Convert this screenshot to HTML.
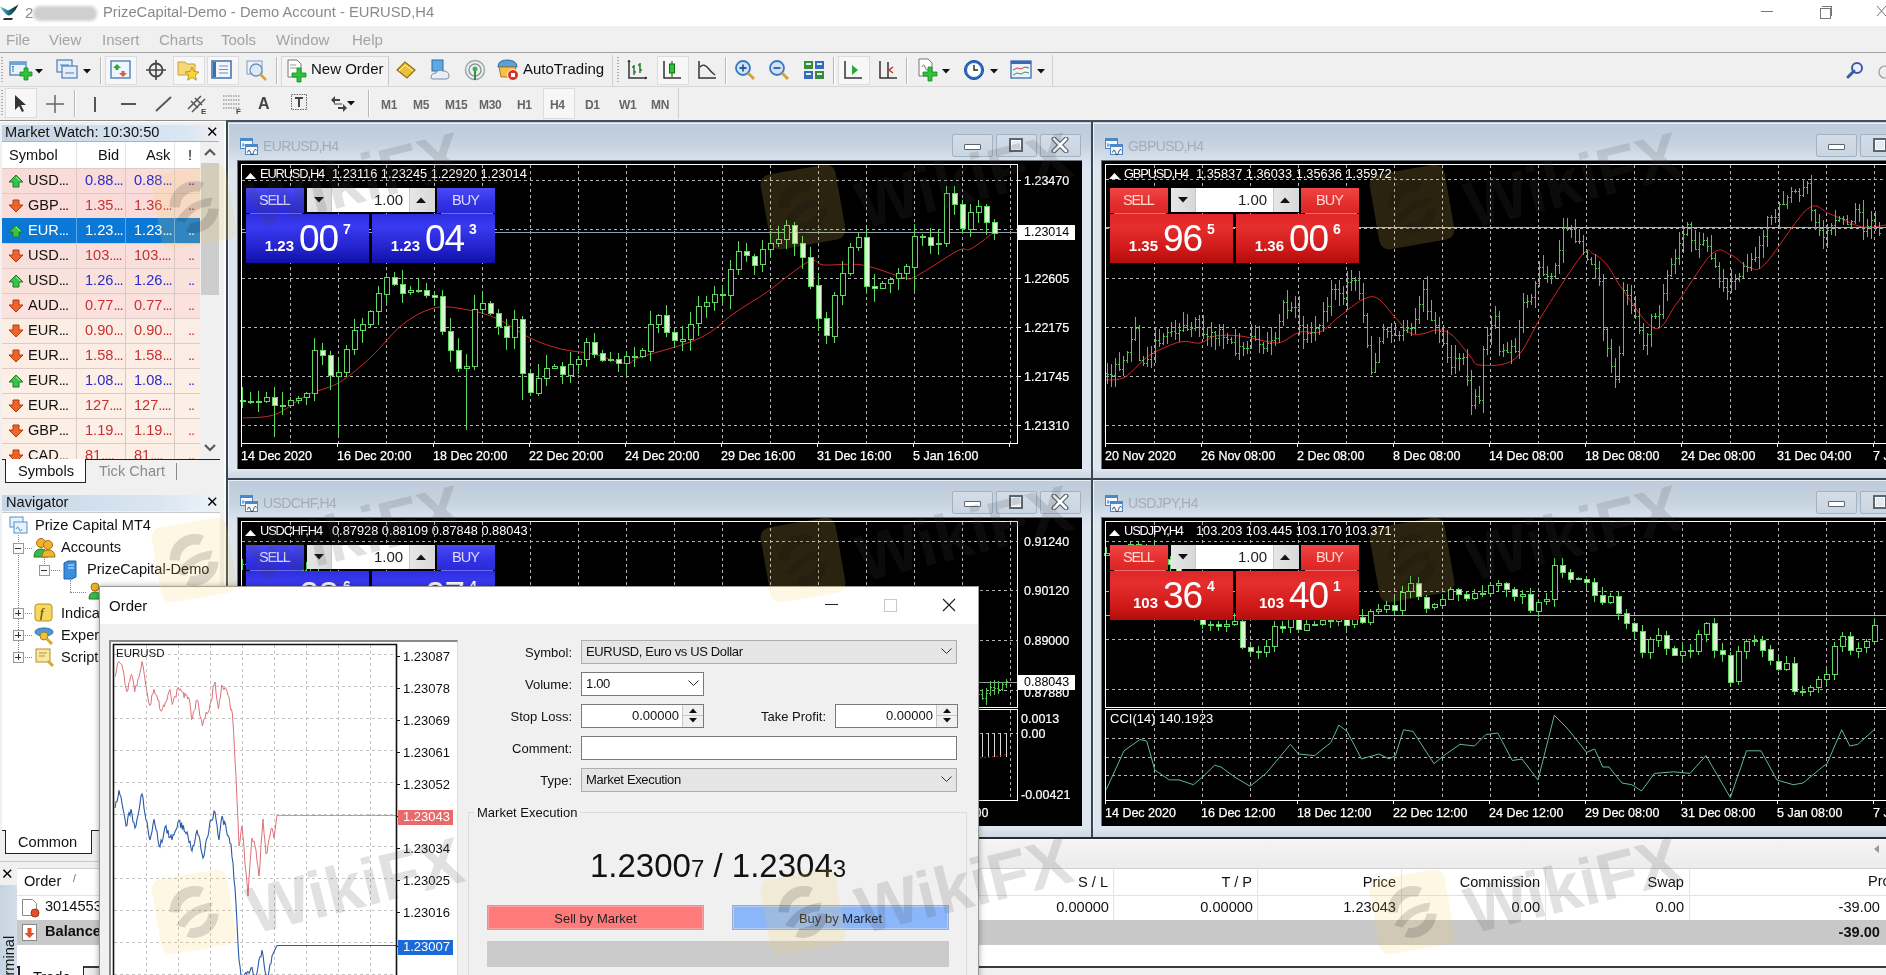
<!DOCTYPE html>
<html><head><meta charset="utf-8"><title>MT4</title>
<style>
html,body{margin:0;padding:0}
body{width:1886px;height:975px;overflow:hidden;position:relative;background:#f0f0f0;font-family:"Liberation Sans",sans-serif}
.t{position:absolute;white-space:nowrap;line-height:1.15;font-family:"Liberation Sans",sans-serif}
svg{overflow:hidden}
</style></head><body>
<div style="position:absolute;left:0;top:0;width:1886px;height:26px;background:#fff"></div>
<svg style="position:absolute;left:0px;top:2px" width="20" height="20" viewBox="0 0 20 20">
<defs><linearGradient id="bird" x1="0" x2="1"><stop offset="0" stop-color="#5fc8e0"/><stop offset="0.45" stop-color="#1f6f80"/><stop offset="1" stop-color="#0a1a20"/></linearGradient></defs>
<path d="M0 4.5 Q4 6 8 8.5 Q13 6 18.5 2.5 Q16 8 12 12 Q10 13.5 8 13.5 Q4 11 0 4.5 Z" fill="url(#bird)"/>
<path d="M4 16 h9 l-1 2 h-9 z" fill="#333"/></svg>
<div class="t" style="left:25px;top:4px;font-size:15px;color:#8a8a8a">2</div>
<div style="position:absolute;left:33px;top:6px;width:64px;height:15px;border-radius:7px;background:#cfcfcf;filter:blur(1.5px)"></div>
<div class="t" style="left:103px;top:4px;font-size:14.75px;color:#8a8a8a">PrizeCapital-Demo - Demo Account - EURUSD,H4</div>
<div style="position:absolute;left:1761px;top:11px;width:12px;height:1px;background:#777"></div>
<div style="position:absolute;left:1820px;top:8px;width:9px;height:9px;border:1px solid #777"></div>
<div style="position:absolute;left:1822px;top:6px;width:9px;height:9px;border-top:1px solid #777;border-right:1px solid #777"></div>
<svg style="position:absolute;left:1876px;top:5px" width="10" height="14"><path d="M1 1 L10 11 M1 11 L10 1" stroke="#777" stroke-width="1"/></svg>
<div style="position:absolute;left:0;top:26px;width:1886px;height:26px;background:#f0f0f0"></div>
<div class="t" style="left:6px;top:31px;font-size:15px;color:#a3a3a3">File</div>
<div class="t" style="left:49px;top:31px;font-size:15px;color:#a3a3a3">View</div>
<div class="t" style="left:102px;top:31px;font-size:15px;color:#a3a3a3">Insert</div>
<div class="t" style="left:159px;top:31px;font-size:15px;color:#a3a3a3">Charts</div>
<div class="t" style="left:221px;top:31px;font-size:15px;color:#a3a3a3">Tools</div>
<div class="t" style="left:276px;top:31px;font-size:15px;color:#a3a3a3">Window</div>
<div class="t" style="left:352px;top:31px;font-size:15px;color:#a3a3a3">Help</div>
<div style="position:absolute;left:0;top:52px;width:1886px;height:1px;background:#a0a0a0"></div>
<div style="position:absolute;left:0;top:53px;width:1886px;height:68px;background:#f0f0f0"></div>
<div style="position:absolute;left:0;top:86px;width:1886px;height:1px;background:#d6d6d6"></div>
<div style="position:absolute;left:226px;top:120px;width:1660px;height:3px;background:#4a4f55"></div>
<div style="position:absolute;left:0;top:120px;width:226px;height:1px;background:#8e8e8e"></div>
<div style="position:absolute;left:0;top:121px;width:226px;height:1px;background:#fdfdfd"></div>
<div style="position:absolute;left:1px;top:57px;width:2px;height:27px;background:repeating-linear-gradient(#a8a8a8 0 1px,transparent 1px 3px)"></div>
<svg style="position:absolute;left:9px;top:60px" width="24" height="22" viewBox="0 0 24 22"><rect x="1" y="2" width="16" height="13" fill="#e8f2fb" stroke="#3f79b5" stroke-width="1.2"/><rect x="1" y="2" width="16" height="3" fill="#6fa3d8"/><path d="M4 12 v-6 M3 7 l1-1 1 1" stroke="#3f79b5" fill="none"/><path d="M15 8 h4 v4 h4 v4 h-4 v4 h-4 v-4 h-4 v-4 h4 z" fill="#2cc43a" stroke="#138a1c" stroke-width="0.8"/></svg>
<svg style="position:absolute;left:35px;top:69px" width="8" height="5" viewBox="0 0 8 5"><path d="M0 0 L8 0 L4 4.5 Z" fill="#111"/></svg>
<svg style="position:absolute;left:56px;top:59px" width="24" height="22" viewBox="0 0 24 22"><rect x="1" y="1" width="15" height="12" fill="#e6eef8" stroke="#4a7fb8" stroke-width="1.2"/><rect x="6" y="7" width="15" height="12" fill="#e6eef8" stroke="#4a7fb8" stroke-width="1.2"/><path d="M4 6 h9 M9 14 h9" stroke="#4a7fb8"/></svg>
<svg style="position:absolute;left:83px;top:69px" width="8" height="5" viewBox="0 0 8 5"><path d="M0 0 L8 0 L4 4.5 Z" fill="#111"/></svg>
<div style="position:absolute;left:100px;top:57px;width:1px;height:27px;background:#b8b8b8;box-shadow:1px 0 0 #fff"></div>
<div style="position:absolute;left:105px;top:56px;width:30px;height:27px;border:1px solid #dcdcdc;background:#f7f7f7"></div>
<svg style="position:absolute;left:110px;top:60px" width="22" height="20" viewBox="0 0 22 20"><rect x="1" y="1" width="19" height="17" fill="#eef5fc" stroke="#3f79b5" stroke-width="1.3"/><path d="M7 4 l4 4 h-2.5 v2 h-3 v-2 h-2.5 z" fill="#2aa83a"/><path d="M13 17 l4-4 h-2.5 v-2 h-3 v2 h-2.5 z" fill="#e8553a"/></svg>
<svg style="position:absolute;left:145px;top:59px" width="22" height="22" viewBox="0 0 22 22"><circle cx="11" cy="11" r="6.5" fill="none" stroke="#444" stroke-width="1.8"/><path d="M11 1 v20 M1 11 h20" stroke="#444" stroke-width="1.6"/></svg>
<div style="position:absolute;left:173px;top:56px;width:30px;height:27px;border:1px solid #dcdcdc;background:#f7f7f7"></div>
<svg style="position:absolute;left:177px;top:59px" width="24" height="22" viewBox="0 0 24 22"><path d="M1 3 h7 l2 2 h8 v11 h-17 z" fill="#f5d77a" stroke="#c9a23a"/><path d="M15 8 l2 4.5 5 .5 -3.8 3.2 1.2 5 -4.4-2.7 -4.4 2.7 1.2-5 -3.8-3.2 5-.5 z" fill="#f7d63a" stroke="#b08a10" stroke-width="0.8"/></svg>
<div style="position:absolute;left:207px;top:56px;width:30px;height:27px;border:1px solid #dcdcdc;background:#f7f7f7"></div>
<svg style="position:absolute;left:211px;top:60px" width="22" height="20" viewBox="0 0 22 20"><rect x="1" y="1" width="19" height="17" fill="#f2f6fb" stroke="#3b6fb0" stroke-width="1.5"/><rect x="2" y="2" width="3" height="15" fill="#3b6fb0"/><path d="M8 6 h9 M8 9.5 h9 M8 13 h9" stroke="#6b8fbf"/></svg>
<svg style="position:absolute;left:246px;top:59px" width="24" height="24" viewBox="0 0 24 24"><rect x="1" y="2" width="15" height="13" fill="#eef3fa" stroke="#7a9cc6"/><circle cx="10" cy="11" r="6" fill="#dfe9f5" stroke="#6e8fbf" stroke-width="1.3"/><path d="M14 15 l6 6" stroke="#d6a23a" stroke-width="2.5"/></svg>
<div style="position:absolute;left:276px;top:57px;width:1px;height:27px;background:#b8b8b8;box-shadow:1px 0 0 #fff"></div>
<div style="position:absolute;left:281px;top:56px;width:106px;height:29px;border:1px solid #d8d8d8;border-right-color:#c8c8c8;background:#f3f3f3"></div>
<svg style="position:absolute;left:286px;top:59px" width="24" height="24" viewBox="0 0 24 24"><path d="M2 1 h9 l4 4 v13 h-13 z" fill="#fff" stroke="#777"/><path d="M4 6 h6 M4 9 h8" stroke="#999"/><path d="M11 9 h4 v5 h5 v4 h-5 v5 h-4 v-5 h-5 v-4 h5 z" fill="#2cc43a" stroke="#138a1c" stroke-width="0.8"/></svg>
<div class="t" style="left:311px;top:60px;font-size:15px;color:#111">New Order</div>
<svg style="position:absolute;left:395px;top:60px" width="22" height="20" viewBox="0 0 22 20"><path d="M2 10 l8-8 10 8 -8 8 z" fill="#e8c040" stroke="#9a6a10" stroke-width="1.2"/><path d="M4 11 l6-6 8 6" fill="none" stroke="#fff2a0"/></svg>
<svg style="position:absolute;left:429px;top:59px" width="22" height="22" viewBox="0 0 22 22"><rect x="3" y="1" width="11" height="11" fill="#5fa8e0" stroke="#2c6aa8"/><path d="M2 19 q0-5 5-5 q2-4 7-2 q6 0 6 5 q0 3-3 3 h-13 q-2 0-2-1z" fill="#e8eef6" stroke="#7a8ea8"/></svg>
<svg style="position:absolute;left:464px;top:59px" width="22" height="22" viewBox="0 0 22 22"><circle cx="11" cy="11" r="9.5" fill="none" stroke="#9aa" stroke-width="1.5"/><circle cx="11" cy="11" r="6" fill="none" stroke="#8a9a9a" stroke-width="1.5"/><circle cx="11" cy="10" r="2.5" fill="#4a6"/><path d="M11 12 v9" stroke="#3a8a3a" stroke-width="2"/></svg>
<svg style="position:absolute;left:496px;top:58px" width="24" height="24" viewBox="0 0 24 24"><path d="M2 9 q0-7 9-7 q10 0 10 7 z" fill="#5aa0d8" stroke="#2c6aa8"/><path d="M3 9 h17 l-2 10 h-13 z" fill="#f3c04a" stroke="#b07a10"/><circle cx="17" cy="17" r="5.5" fill="#d9302a" stroke="#fff" stroke-width="1"/><rect x="15" y="15" width="4" height="4" fill="#fff"/></svg>
<div class="t" style="left:523px;top:60px;font-size:15px;color:#111">AutoTrading</div>
<div style="position:absolute;left:612px;top:55px;width:1px;height:31px;background:#d0d0d0"></div>
<div style="position:absolute;left:617px;top:57px;width:2px;height:27px;background:repeating-linear-gradient(#a8a8a8 0 1px,transparent 1px 3px)"></div>
<svg style="position:absolute;left:626px;top:59px" width="22" height="22" viewBox="0 0 22 22"><path d="M3 2 v17 h17" fill="none" stroke="#333" stroke-width="1.5"/><path d="M8 6 v10 M6 8 h2 M8 13 h2 M14 4 v10 M12 6 h2 M14 11 h2" stroke="#2a7a2a" stroke-width="1.5"/><path d="M2 3 l1-2 1 2 M19 18 l2 1 -2 1" stroke="#333"/></svg>
<div style="position:absolute;left:657px;top:56px;width:30px;height:27px;border:1px solid #dcdcdc;background:#f7f7f7"></div>
<svg style="position:absolute;left:661px;top:59px" width="22" height="22" viewBox="0 0 22 22"><path d="M3 2 v17 h17" fill="none" stroke="#333" stroke-width="1.5"/><path d="M11 2 v16" stroke="#1a6a1a" stroke-width="1.2"/><rect x="8.5" y="5" width="5" height="9" fill="#2cc43a" stroke="#1a6a1a"/></svg>
<svg style="position:absolute;left:696px;top:59px" width="22" height="22" viewBox="0 0 22 22"><path d="M3 2 v17 h17" fill="none" stroke="#333" stroke-width="1.5"/><path d="M4 8 q4-4 8 1 q3 4 7 7" fill="none" stroke="#333" stroke-width="1.3"/></svg>
<div style="position:absolute;left:725px;top:57px;width:1px;height:27px;background:#b8b8b8;box-shadow:1px 0 0 #fff"></div>
<svg style="position:absolute;left:734px;top:59px" width="22" height="22" viewBox="0 0 22 22"><circle cx="9" cy="9" r="7" fill="#cfe4f8" stroke="#3a78c0" stroke-width="1.8"/><path d="M5.5 9 h7 M9 5.5 v7" stroke="#2a5aa0" stroke-width="1.8"/><path d="M14 14 l6 6" stroke="#d6a23a" stroke-width="3"/></svg>
<svg style="position:absolute;left:768px;top:59px" width="22" height="22" viewBox="0 0 22 22"><circle cx="9" cy="9" r="7" fill="#cfe4f8" stroke="#3a78c0" stroke-width="1.8"/><path d="M5.5 9 h7" stroke="#2a5aa0" stroke-width="1.8"/><path d="M14 14 l6 6" stroke="#d6a23a" stroke-width="3"/></svg>
<svg style="position:absolute;left:803px;top:60px" width="22" height="20" viewBox="0 0 22 20"><rect x="1" y="1" width="9" height="8" fill="#3c8a3c"/><rect x="12" y="1" width="9" height="8" fill="#3a6ac0"/><rect x="1" y="11" width="9" height="8" fill="#3a6ac0"/><rect x="12" y="11" width="9" height="8" fill="#3c8a3c"/><path d="M3 4 h5 M14 14 h5 M3 14 h5 M14 4 h5" stroke="#cfe" stroke-width="2"/></svg>
<div style="position:absolute;left:833px;top:57px;width:1px;height:27px;background:#b8b8b8;box-shadow:1px 0 0 #fff"></div>
<div style="position:absolute;left:838px;top:56px;width:30px;height:27px;border:1px solid #dcdcdc;background:#f7f7f7"></div>
<svg style="position:absolute;left:842px;top:59px" width="22" height="22" viewBox="0 0 22 22"><path d="M3 2 v17 h17" fill="none" stroke="#333" stroke-width="1.5"/><path d="M10 6 l6 5 -6 5 z" fill="#2aa83a"/></svg>
<svg style="position:absolute;left:877px;top:59px" width="22" height="22" viewBox="0 0 22 22"><path d="M3 2 v17 h17 M11 3 v16" fill="none" stroke="#333" stroke-width="1.5"/><path d="M16 8 l-4 3 4 3" fill="none" stroke="#d03030" stroke-width="1.5"/></svg>
<div style="position:absolute;left:906px;top:57px;width:1px;height:27px;background:#b8b8b8;box-shadow:1px 0 0 #fff"></div>
<svg style="position:absolute;left:917px;top:58px" width="24" height="24" viewBox="0 0 24 24"><path d="M2 1 h9 l4 4 v13 h-13 z" fill="#fff" stroke="#777"/><path d="M5 9 q2-4 3 0 t3 3" fill="none" stroke="#777"/><path d="M11 9 h4 v5 h5 v4 h-5 v5 h-4 v-5 h-5 v-4 h5 z" fill="#2cc43a" stroke="#138a1c" stroke-width="0.8"/></svg>
<svg style="position:absolute;left:942px;top:69px" width="8" height="5" viewBox="0 0 8 5"><path d="M0 0 L8 0 L4 4.5 Z" fill="#111"/></svg>
<svg style="position:absolute;left:963px;top:59px" width="22" height="22" viewBox="0 0 22 22"><circle cx="11" cy="11" r="9.5" fill="#2a6ac8" stroke="#1a4a98"/><circle cx="11" cy="11" r="7" fill="#fff"/><path d="M11 6 v5 h4" stroke="#222" stroke-width="1.4" fill="none"/></svg>
<svg style="position:absolute;left:990px;top:69px" width="8" height="5" viewBox="0 0 8 5"><path d="M0 0 L8 0 L4 4.5 Z" fill="#111"/></svg>
<svg style="position:absolute;left:1010px;top:60px" width="22" height="20" viewBox="0 0 22 20"><rect x="1" y="1" width="20" height="17" fill="#eaf2fa" stroke="#3a6ab0" stroke-width="1.3"/><rect x="1" y="1" width="20" height="3" fill="#3a6ab0"/><path d="M3 10 l4-2 4 1 4-2 4 1" stroke="#d04030" fill="none"/><path d="M3 15 l4-2 4 1 4-2 4 1" stroke="#3a9a4a" fill="none"/></svg>
<svg style="position:absolute;left:1037px;top:69px" width="8" height="5" viewBox="0 0 8 5"><path d="M0 0 L8 0 L4 4.5 Z" fill="#111"/></svg>
<div style="position:absolute;left:1052px;top:55px;width:1px;height:31px;background:#d0d0d0"></div>
<svg style="position:absolute;left:1845px;top:61px" width="20" height="20" viewBox="0 0 20 20"><circle cx="12" cy="7" r="5" fill="#eef" stroke="#3a5aa8" stroke-width="2"/><path d="M9 10 l-6 6" stroke="#3a5aa8" stroke-width="3" stroke-linecap="round"/></svg>
<svg style="position:absolute;left:1876px;top:64px" width="10" height="18" viewBox="0 0 10 18"><circle cx="9" cy="8" r="6" fill="#eee" stroke="#999" stroke-width="1.2"/></svg>
<div style="position:absolute;left:1px;top:90px;width:2px;height:27px;background:repeating-linear-gradient(#a8a8a8 0 1px,transparent 1px 3px)"></div>
<div style="position:absolute;left:5px;top:88px;width:30px;height:28px;border:1px solid #dcdcdc;background:#f7f7f7"></div>
<svg style="position:absolute;left:12px;top:94px" width="16" height="20" viewBox="0 0 16 20"><path d="M3 1 l0 15 4-4 3 6 2-1 -3-6 5 0 z" fill="#333"/></svg>
<svg style="position:absolute;left:45px;top:94px" width="20" height="20" viewBox="0 0 20 20"><path d="M10 1 v18 M1 10 h18" stroke="#666" stroke-width="1.5"/></svg>
<div style="position:absolute;left:74px;top:90px;width:1px;height:27px;background:#b8b8b8;box-shadow:1px 0 0 #fff"></div>
<div style="position:absolute;left:94px;top:97px;width:2px;height:15px;background:#555"></div>
<div style="position:absolute;left:121px;top:103px;width:15px;height:2px;background:#555"></div>
<svg style="position:absolute;left:154px;top:95px" width="20" height="18" viewBox="0 0 20 18"><path d="M2 16 L17 2" stroke="#555" stroke-width="1.8"/></svg>
<svg style="position:absolute;left:187px;top:93px" width="22" height="22" viewBox="0 0 22 22"><path d="M1 16 L14 3 M5 19 L18 6 M4 8 l7 7 M8 5 l7 7" stroke="#555" stroke-width="1.5"/><text x="14" y="21" font-size="8" font-family="Liberation Sans" font-weight="bold" fill="#444">E</text></svg>
<svg style="position:absolute;left:222px;top:93px" width="22" height="22" viewBox="0 0 22 22"><path d="M1 3 h17 M1 7 h17 M1 11 h17 M1 15 h17" stroke="#777" stroke-width="1.2" stroke-dasharray="1.5 1"/><text x="14" y="21" font-size="8" font-family="Liberation Sans" font-weight="bold" fill="#444">F</text></svg>
<div class="t" style="left:258px;top:95px;font-size:16px;font-weight:bold;color:#444">A</div>
<svg style="position:absolute;left:290px;top:93px" width="20" height="20" viewBox="0 0 20 20"><rect x="1.5" y="1.5" width="15" height="15" fill="none" stroke="#666" stroke-dasharray="1.5 1"/><path d="M5 5 h8 M9 5 v9" stroke="#444" stroke-width="2"/></svg>
<svg style="position:absolute;left:329px;top:94px" width="20" height="20" viewBox="0 0 20 20"><path d="M2 6 l4-4 v3 h5 v2 h-5 v3 z" fill="#444"/><path d="M18 14 l-4 4 v-3 h-5 v-2 h5 v-3 z" fill="#444"/><path d="M5 10 l8 0" stroke="#444"/></svg>
<svg style="position:absolute;left:347px;top:101px" width="8" height="5" viewBox="0 0 8 5"><path d="M0 0 L8 0 L4 4.5 Z" fill="#111"/></svg>
<div style="position:absolute;left:368px;top:90px;width:1px;height:27px;background:#b8b8b8;box-shadow:1px 0 0 #fff"></div>
<div class="t" style="left:381px;top:99px;font-size:12px;color:#666;font-weight:bold;letter-spacing:-0.3px">M1</div>
<div class="t" style="left:413px;top:99px;font-size:12px;color:#666;font-weight:bold;letter-spacing:-0.3px">M5</div>
<div class="t" style="left:445px;top:99px;font-size:12px;color:#666;font-weight:bold;letter-spacing:-0.3px">M15</div>
<div class="t" style="left:479px;top:99px;font-size:12px;color:#666;font-weight:bold;letter-spacing:-0.3px">M30</div>
<div class="t" style="left:517px;top:99px;font-size:12px;color:#666;font-weight:bold;letter-spacing:-0.3px">H1</div>
<div style="position:absolute;left:543px;top:88px;width:30px;height:29px;border:1px solid #dcdcdc;background:#f7f7f7"></div>
<div class="t" style="left:550px;top:99px;font-size:12px;color:#666;font-weight:bold;letter-spacing:-0.3px">H4</div>
<div class="t" style="left:585px;top:99px;font-size:12px;color:#666;font-weight:bold;letter-spacing:-0.3px">D1</div>
<div class="t" style="left:619px;top:99px;font-size:12px;color:#666;font-weight:bold;letter-spacing:-0.3px">W1</div>
<div class="t" style="left:651px;top:99px;font-size:12px;color:#666;font-weight:bold;letter-spacing:-0.3px">MN</div>
<div style="position:absolute;left:678px;top:88px;width:1px;height:31px;background:#d0d0d0"></div>
<div style="position:absolute;left:226px;top:122px;width:1660px;height:716px;background:#c5d1de"></div>
<div style="position:absolute;left:228px;top:123px;width:863px;height:355px;background:linear-gradient(#bdcbdb 0px,#c5d2df 20px,#cfdbe7 30px,#d8e2ec 37px,#dde6ef 45px,#dde6ef);border-top:1px solid #e8eef4;border-left:1px solid #eef3f7;box-sizing:border-box"></div>
<div style="position:absolute;left:228px;top:468px;width:863px;height:10px;background:linear-gradient(#e0e8f0,#cdd8e4)"></div>
<svg style="position:absolute;left:240px;top:138px" width="19" height="18"><rect x="0.5" y="0.5" width="12" height="10" fill="#f4f9ff" stroke="#4f86c8"/><rect x="0.5" y="0.5" width="12" height="2.5" fill="#4f86c8"/><rect x="5.5" y="6.5" width="12" height="10" fill="#f4f9ff" stroke="#4f86c8"/><rect x="5.5" y="6.5" width="12" height="2.5" fill="#4f86c8"/><path d="M7.5 14.5 q1.5-5 3 0 t3 0 t3 -2" fill="none" stroke="#333" stroke-width="0.9"/><path d="M2 7 h3 M3 5 v4" stroke="#4f86c8" stroke-width="0.9"/></svg>
<div class="t" style="left:263px;top:138px;font-size:14px;letter-spacing:-0.6px;color:#a4adb6">EURUSD,H4</div>
<div style="position:absolute;left:952px;top:134px;width:39px;height:21px;border:1px solid #a3b2c3;border-radius:2px;background:linear-gradient(#d3dde8,#c9d5e1)"></div>
<div style="position:absolute;left:964px;top:144px;width:15px;height:4px;background:#fff;border:1px solid #5a6570;border-radius:1px"></div>
<div style="position:absolute;left:996px;top:134px;width:39px;height:21px;border:1px solid #a3b2c3;border-radius:2px;background:linear-gradient(#d3dde8,#c9d5e1)"></div>
<div style="position:absolute;left:1009px;top:138px;width:10px;height:10px;border:2px solid #5a6570;background:#e4eaf0;box-shadow:inset 0 0 0 1px #fff"></div>
<div style="position:absolute;left:1040px;top:134px;width:39px;height:21px;border:1px solid #a3b2c3;border-radius:2px;background:linear-gradient(#d3dde8,#c9d5e1)"></div>
<svg style="position:absolute;left:1051px;top:137px" width="18" height="16"><path d="M3 2 L15 14 M15 2 L3 14" stroke="#5a6570" stroke-width="5" stroke-linecap="round"/><path d="M3 2 L15 14 M15 2 L3 14" stroke="#fff" stroke-width="2.6" stroke-linecap="round"/></svg>
<div style="position:absolute;left:237px;top:160px;width:845px;height:309px;background:#000;border-top:1px solid #6a737c;border-left:1px solid #6a737c;box-sizing:border-box"></div>
<svg style="position:absolute;left:238px;top:161px" width="843" height="307" viewBox="238 161 843 307"><line x1="290.5" y1="165" x2="290.5" y2="443" stroke="#b4b4b4" stroke-width="1" stroke-dasharray="3 3"/>
<line x1="338.5" y1="165" x2="338.5" y2="443" stroke="#b4b4b4" stroke-width="1" stroke-dasharray="3 3"/>
<line x1="386.5" y1="165" x2="386.5" y2="443" stroke="#b4b4b4" stroke-width="1" stroke-dasharray="3 3"/>
<line x1="434.5" y1="165" x2="434.5" y2="443" stroke="#b4b4b4" stroke-width="1" stroke-dasharray="3 3"/>
<line x1="482.5" y1="165" x2="482.5" y2="443" stroke="#b4b4b4" stroke-width="1" stroke-dasharray="3 3"/>
<line x1="530.5" y1="165" x2="530.5" y2="443" stroke="#b4b4b4" stroke-width="1" stroke-dasharray="3 3"/>
<line x1="578.5" y1="165" x2="578.5" y2="443" stroke="#b4b4b4" stroke-width="1" stroke-dasharray="3 3"/>
<line x1="626.5" y1="165" x2="626.5" y2="443" stroke="#b4b4b4" stroke-width="1" stroke-dasharray="3 3"/>
<line x1="674.5" y1="165" x2="674.5" y2="443" stroke="#b4b4b4" stroke-width="1" stroke-dasharray="3 3"/>
<line x1="722.5" y1="165" x2="722.5" y2="443" stroke="#b4b4b4" stroke-width="1" stroke-dasharray="3 3"/>
<line x1="770.5" y1="165" x2="770.5" y2="443" stroke="#b4b4b4" stroke-width="1" stroke-dasharray="3 3"/>
<line x1="818.5" y1="165" x2="818.5" y2="443" stroke="#b4b4b4" stroke-width="1" stroke-dasharray="3 3"/>
<line x1="866.5" y1="165" x2="866.5" y2="443" stroke="#b4b4b4" stroke-width="1" stroke-dasharray="3 3"/>
<line x1="914.5" y1="165" x2="914.5" y2="443" stroke="#b4b4b4" stroke-width="1" stroke-dasharray="3 3"/>
<line x1="962.5" y1="165" x2="962.5" y2="443" stroke="#b4b4b4" stroke-width="1" stroke-dasharray="3 3"/>
<line x1="1010.5" y1="165" x2="1010.5" y2="443" stroke="#b4b4b4" stroke-width="1" stroke-dasharray="3 3"/>
<line x1="242" y1="180.5" x2="1017" y2="180.5" stroke="#b4b4b4" stroke-width="1" stroke-dasharray="3 3"/>
<line x1="242" y1="229.5" x2="1017" y2="229.5" stroke="#b4b4b4" stroke-width="1" stroke-dasharray="3 3"/>
<line x1="242" y1="278.5" x2="1017" y2="278.5" stroke="#b4b4b4" stroke-width="1" stroke-dasharray="3 3"/>
<line x1="242" y1="327.5" x2="1017" y2="327.5" stroke="#b4b4b4" stroke-width="1" stroke-dasharray="3 3"/>
<line x1="242" y1="376.5" x2="1017" y2="376.5" stroke="#b4b4b4" stroke-width="1" stroke-dasharray="3 3"/>
<line x1="242" y1="425.5" x2="1017" y2="425.5" stroke="#b4b4b4" stroke-width="1" stroke-dasharray="3 3"/><line x1="242" y1="232.5" x2="1017" y2="232.5" stroke="#8ea0a8"/><path d="M243.0 418.0 C248.3 417.4 264.3 418.3 275.0 414.5 C285.7 410.7 296.3 400.3 307.0 395.0 C317.7 389.7 328.3 388.9 339.0 382.6 C349.7 376.3 360.5 366.6 371.0 357.0 C381.5 347.4 391.5 333.2 402.0 325.0 C412.5 316.8 423.3 310.6 434.0 308.0 C444.7 305.4 455.3 307.7 466.0 309.5 C476.7 311.3 487.3 314.2 498.0 319.0 C508.7 323.8 519.5 333.0 530.0 338.0 C540.5 343.0 550.5 346.3 561.0 349.0 C571.5 351.7 582.3 351.6 593.0 354.0 C603.7 356.4 617.0 363.0 625.0 363.5 C633.0 364.0 628.5 361.2 641.0 357.0 C653.5 352.8 684.3 345.4 700.0 338.0 C715.7 330.6 723.8 320.3 735.0 312.6 C746.2 304.9 754.8 300.5 767.0 292.0 C779.2 283.5 799.0 266.2 808.5 261.7 C818.0 257.2 815.0 264.4 824.0 265.0 C833.0 265.6 849.2 262.9 862.5 265.0 C875.8 267.1 895.0 275.8 904.0 277.6 C913.0 279.4 907.5 280.5 916.5 276.0 C925.5 271.5 949.0 255.1 958.0 250.6 C967.0 246.1 964.8 251.9 970.6 249.0 C976.4 246.1 989.3 235.7 993.0 233.0" fill="none" stroke="#d02828" stroke-width="1"/><line x1="242.5" y1="387" x2="242.5" y2="408" stroke="#5ed85e" stroke-width="1"/>
<rect x="240.5" y="400.5" width="5" height="1" fill="#d8f8d0" stroke="#5ed85e" stroke-width="1"/>
<line x1="250.5" y1="392" x2="250.5" y2="404" stroke="#5ed85e" stroke-width="1"/>
<rect x="248.5" y="401.5" width="5" height="1" fill="#000" stroke="#5ed85e" stroke-width="1"/>
<line x1="258.5" y1="391" x2="258.5" y2="412" stroke="#5ed85e" stroke-width="1"/>
<rect x="256.5" y="401.5" width="5" height="1" fill="#d8f8d0" stroke="#5ed85e" stroke-width="1"/>
<line x1="266.5" y1="392" x2="266.5" y2="403" stroke="#5ed85e" stroke-width="1"/>
<rect x="264.5" y="397.5" width="5" height="4" fill="#000" stroke="#5ed85e" stroke-width="1"/>
<line x1="274.5" y1="387" x2="274.5" y2="437" stroke="#5ed85e" stroke-width="1"/>
<rect x="272.5" y="397.5" width="5" height="8" fill="#d8f8d0" stroke="#5ed85e" stroke-width="1"/>
<line x1="282.5" y1="392" x2="282.5" y2="415" stroke="#5ed85e" stroke-width="1"/>
<rect x="280.5" y="405.5" width="5" height="1" fill="#d8f8d0" stroke="#5ed85e" stroke-width="1"/>
<line x1="290.5" y1="397" x2="290.5" y2="407" stroke="#5ed85e" stroke-width="1"/>
<rect x="288.5" y="400.5" width="5" height="5" fill="#000" stroke="#5ed85e" stroke-width="1"/>
<line x1="298.5" y1="396" x2="298.5" y2="404" stroke="#5ed85e" stroke-width="1"/>
<rect x="296.5" y="398.5" width="5" height="2" fill="#000" stroke="#5ed85e" stroke-width="1"/>
<line x1="306.5" y1="392" x2="306.5" y2="405" stroke="#5ed85e" stroke-width="1"/>
<rect x="304.5" y="393.5" width="5" height="4" fill="#000" stroke="#5ed85e" stroke-width="1"/>
<line x1="314.5" y1="338" x2="314.5" y2="401" stroke="#5ed85e" stroke-width="1"/>
<rect x="312.5" y="350.5" width="5" height="43" fill="#000" stroke="#5ed85e" stroke-width="1"/>
<line x1="322.5" y1="343" x2="322.5" y2="365" stroke="#5ed85e" stroke-width="1"/>
<rect x="320.5" y="350.5" width="5" height="5" fill="#d8f8d0" stroke="#5ed85e" stroke-width="1"/>
<line x1="330.5" y1="351" x2="330.5" y2="390" stroke="#5ed85e" stroke-width="1"/>
<rect x="328.5" y="355.5" width="5" height="20" fill="#d8f8d0" stroke="#5ed85e" stroke-width="1"/>
<line x1="338.5" y1="360" x2="338.5" y2="436" stroke="#5ed85e" stroke-width="1"/>
<rect x="336.5" y="372.5" width="5" height="4" fill="#000" stroke="#5ed85e" stroke-width="1"/>
<line x1="346.5" y1="345" x2="346.5" y2="377" stroke="#5ed85e" stroke-width="1"/>
<rect x="344.5" y="349.5" width="5" height="23" fill="#000" stroke="#5ed85e" stroke-width="1"/>
<line x1="354.5" y1="319" x2="354.5" y2="355" stroke="#5ed85e" stroke-width="1"/>
<rect x="352.5" y="330.5" width="5" height="19" fill="#000" stroke="#5ed85e" stroke-width="1"/>
<line x1="362.5" y1="318" x2="362.5" y2="343" stroke="#5ed85e" stroke-width="1"/>
<rect x="360.5" y="324.5" width="5" height="6" fill="#000" stroke="#5ed85e" stroke-width="1"/>
<line x1="370.5" y1="310" x2="370.5" y2="328" stroke="#5ed85e" stroke-width="1"/>
<rect x="368.5" y="311.5" width="5" height="13" fill="#000" stroke="#5ed85e" stroke-width="1"/>
<line x1="378.5" y1="286" x2="378.5" y2="325" stroke="#5ed85e" stroke-width="1"/>
<rect x="376.5" y="293.5" width="5" height="18" fill="#000" stroke="#5ed85e" stroke-width="1"/>
<line x1="386.5" y1="275" x2="386.5" y2="303" stroke="#5ed85e" stroke-width="1"/>
<rect x="384.5" y="277.5" width="5" height="17" fill="#000" stroke="#5ed85e" stroke-width="1"/>
<line x1="394.5" y1="272" x2="394.5" y2="286" stroke="#5ed85e" stroke-width="1"/>
<rect x="392.5" y="277.5" width="5" height="7" fill="#d8f8d0" stroke="#5ed85e" stroke-width="1"/>
<line x1="402.5" y1="270" x2="402.5" y2="303" stroke="#5ed85e" stroke-width="1"/>
<rect x="400.5" y="284.5" width="5" height="9" fill="#d8f8d0" stroke="#5ed85e" stroke-width="1"/>
<line x1="410.5" y1="286" x2="410.5" y2="295" stroke="#5ed85e" stroke-width="1"/>
<rect x="408.5" y="290.5" width="5" height="2" fill="#000" stroke="#5ed85e" stroke-width="1"/>
<line x1="418.5" y1="278" x2="418.5" y2="293" stroke="#5ed85e" stroke-width="1"/>
<rect x="416.5" y="290.5" width="5" height="1" fill="#000" stroke="#5ed85e" stroke-width="1"/>
<line x1="426.5" y1="283" x2="426.5" y2="298" stroke="#5ed85e" stroke-width="1"/>
<rect x="424.5" y="290.5" width="5" height="5" fill="#d8f8d0" stroke="#5ed85e" stroke-width="1"/>
<line x1="434.5" y1="292" x2="434.5" y2="306" stroke="#5ed85e" stroke-width="1"/>
<rect x="432.5" y="295.5" width="5" height="2" fill="#d8f8d0" stroke="#5ed85e" stroke-width="1"/>
<line x1="442.5" y1="290" x2="442.5" y2="335" stroke="#5ed85e" stroke-width="1"/>
<rect x="440.5" y="296.5" width="5" height="35" fill="#d8f8d0" stroke="#5ed85e" stroke-width="1"/>
<line x1="450.5" y1="318" x2="450.5" y2="362" stroke="#5ed85e" stroke-width="1"/>
<rect x="448.5" y="331.5" width="5" height="19" fill="#d8f8d0" stroke="#5ed85e" stroke-width="1"/>
<line x1="458.5" y1="338" x2="458.5" y2="372" stroke="#5ed85e" stroke-width="1"/>
<rect x="456.5" y="350.5" width="5" height="18" fill="#d8f8d0" stroke="#5ed85e" stroke-width="1"/>
<line x1="466.5" y1="354" x2="466.5" y2="430" stroke="#5ed85e" stroke-width="1"/>
<rect x="464.5" y="366.5" width="5" height="2" fill="#000" stroke="#5ed85e" stroke-width="1"/>
<line x1="474.5" y1="295" x2="474.5" y2="370" stroke="#5ed85e" stroke-width="1"/>
<rect x="472.5" y="309.5" width="5" height="57" fill="#000" stroke="#5ed85e" stroke-width="1"/>
<line x1="482.5" y1="292" x2="482.5" y2="314" stroke="#5ed85e" stroke-width="1"/>
<rect x="480.5" y="303.5" width="5" height="6" fill="#000" stroke="#5ed85e" stroke-width="1"/>
<line x1="490.5" y1="301" x2="490.5" y2="315" stroke="#5ed85e" stroke-width="1"/>
<rect x="488.5" y="303.5" width="5" height="10" fill="#d8f8d0" stroke="#5ed85e" stroke-width="1"/>
<line x1="498.5" y1="309" x2="498.5" y2="335" stroke="#5ed85e" stroke-width="1"/>
<rect x="496.5" y="313.5" width="5" height="13" fill="#d8f8d0" stroke="#5ed85e" stroke-width="1"/>
<line x1="506.5" y1="319" x2="506.5" y2="350" stroke="#5ed85e" stroke-width="1"/>
<rect x="504.5" y="326.5" width="5" height="11" fill="#d8f8d0" stroke="#5ed85e" stroke-width="1"/>
<line x1="514.5" y1="310" x2="514.5" y2="349" stroke="#5ed85e" stroke-width="1"/>
<rect x="512.5" y="319.5" width="5" height="18" fill="#000" stroke="#5ed85e" stroke-width="1"/>
<line x1="522.5" y1="316" x2="522.5" y2="400" stroke="#5ed85e" stroke-width="1"/>
<rect x="520.5" y="319.5" width="5" height="54" fill="#d8f8d0" stroke="#5ed85e" stroke-width="1"/>
<line x1="530.5" y1="369" x2="530.5" y2="396" stroke="#5ed85e" stroke-width="1"/>
<rect x="528.5" y="373.5" width="5" height="19" fill="#d8f8d0" stroke="#5ed85e" stroke-width="1"/>
<line x1="538.5" y1="364" x2="538.5" y2="396" stroke="#5ed85e" stroke-width="1"/>
<rect x="536.5" y="378.5" width="5" height="15" fill="#000" stroke="#5ed85e" stroke-width="1"/>
<line x1="546.5" y1="355" x2="546.5" y2="386" stroke="#5ed85e" stroke-width="1"/>
<rect x="544.5" y="368.5" width="5" height="10" fill="#000" stroke="#5ed85e" stroke-width="1"/>
<line x1="554.5" y1="364" x2="554.5" y2="369" stroke="#5ed85e" stroke-width="1"/>
<rect x="552.5" y="366.5" width="5" height="2" fill="#000" stroke="#5ed85e" stroke-width="1"/>
<line x1="562.5" y1="362" x2="562.5" y2="384" stroke="#5ed85e" stroke-width="1"/>
<rect x="560.5" y="366.5" width="5" height="8" fill="#d8f8d0" stroke="#5ed85e" stroke-width="1"/>
<line x1="570.5" y1="352" x2="570.5" y2="383" stroke="#5ed85e" stroke-width="1"/>
<rect x="568.5" y="364.5" width="5" height="11" fill="#000" stroke="#5ed85e" stroke-width="1"/>
<line x1="578.5" y1="356" x2="578.5" y2="374" stroke="#5ed85e" stroke-width="1"/>
<rect x="576.5" y="359.5" width="5" height="5" fill="#000" stroke="#5ed85e" stroke-width="1"/>
<line x1="586.5" y1="338" x2="586.5" y2="367" stroke="#5ed85e" stroke-width="1"/>
<rect x="584.5" y="342.5" width="5" height="17" fill="#000" stroke="#5ed85e" stroke-width="1"/>
<line x1="594.5" y1="333" x2="594.5" y2="358" stroke="#5ed85e" stroke-width="1"/>
<rect x="592.5" y="342.5" width="5" height="12" fill="#d8f8d0" stroke="#5ed85e" stroke-width="1"/>
<line x1="602.5" y1="350" x2="602.5" y2="362" stroke="#5ed85e" stroke-width="1"/>
<rect x="600.5" y="353.5" width="5" height="7" fill="#d8f8d0" stroke="#5ed85e" stroke-width="1"/>
<line x1="610.5" y1="352" x2="610.5" y2="362" stroke="#5ed85e" stroke-width="1"/>
<rect x="608.5" y="359.5" width="5" height="1" fill="#000" stroke="#5ed85e" stroke-width="1"/>
<line x1="618.5" y1="353" x2="618.5" y2="372" stroke="#5ed85e" stroke-width="1"/>
<rect x="616.5" y="359.5" width="5" height="4" fill="#d8f8d0" stroke="#5ed85e" stroke-width="1"/>
<line x1="626.5" y1="351" x2="626.5" y2="376" stroke="#5ed85e" stroke-width="1"/>
<rect x="624.5" y="356.5" width="5" height="7" fill="#000" stroke="#5ed85e" stroke-width="1"/>
<line x1="634.5" y1="347" x2="634.5" y2="367" stroke="#5ed85e" stroke-width="1"/>
<rect x="632.5" y="356.5" width="5" height="1" fill="#d8f8d0" stroke="#5ed85e" stroke-width="1"/>
<line x1="642.5" y1="348" x2="642.5" y2="358" stroke="#5ed85e" stroke-width="1"/>
<rect x="640.5" y="350.5" width="5" height="6" fill="#000" stroke="#5ed85e" stroke-width="1"/>
<line x1="650.5" y1="311" x2="650.5" y2="361" stroke="#5ed85e" stroke-width="1"/>
<rect x="648.5" y="324.5" width="5" height="27" fill="#000" stroke="#5ed85e" stroke-width="1"/>
<line x1="658.5" y1="314" x2="658.5" y2="333" stroke="#5ed85e" stroke-width="1"/>
<rect x="656.5" y="315.5" width="5" height="9" fill="#000" stroke="#5ed85e" stroke-width="1"/>
<line x1="666.5" y1="305" x2="666.5" y2="337" stroke="#5ed85e" stroke-width="1"/>
<rect x="664.5" y="315.5" width="5" height="17" fill="#d8f8d0" stroke="#5ed85e" stroke-width="1"/>
<line x1="674.5" y1="330" x2="674.5" y2="348" stroke="#5ed85e" stroke-width="1"/>
<rect x="672.5" y="332.5" width="5" height="8" fill="#d8f8d0" stroke="#5ed85e" stroke-width="1"/>
<line x1="682.5" y1="326" x2="682.5" y2="351" stroke="#5ed85e" stroke-width="1"/>
<rect x="680.5" y="339.5" width="5" height="2" fill="#000" stroke="#5ed85e" stroke-width="1"/>
<line x1="690.5" y1="312" x2="690.5" y2="351" stroke="#5ed85e" stroke-width="1"/>
<rect x="688.5" y="324.5" width="5" height="15" fill="#000" stroke="#5ed85e" stroke-width="1"/>
<line x1="698.5" y1="296" x2="698.5" y2="336" stroke="#5ed85e" stroke-width="1"/>
<rect x="696.5" y="306.5" width="5" height="17" fill="#000" stroke="#5ed85e" stroke-width="1"/>
<line x1="706.5" y1="296" x2="706.5" y2="318" stroke="#5ed85e" stroke-width="1"/>
<rect x="704.5" y="302.5" width="5" height="4" fill="#000" stroke="#5ed85e" stroke-width="1"/>
<line x1="714.5" y1="286" x2="714.5" y2="311" stroke="#5ed85e" stroke-width="1"/>
<rect x="712.5" y="294.5" width="5" height="8" fill="#000" stroke="#5ed85e" stroke-width="1"/>
<line x1="722.5" y1="286" x2="722.5" y2="304" stroke="#5ed85e" stroke-width="1"/>
<rect x="720.5" y="294.5" width="5" height="1" fill="#d8f8d0" stroke="#5ed85e" stroke-width="1"/>
<line x1="730.5" y1="260" x2="730.5" y2="309" stroke="#5ed85e" stroke-width="1"/>
<rect x="728.5" y="269.5" width="5" height="26" fill="#000" stroke="#5ed85e" stroke-width="1"/>
<line x1="738.5" y1="241" x2="738.5" y2="275" stroke="#5ed85e" stroke-width="1"/>
<rect x="736.5" y="251.5" width="5" height="18" fill="#000" stroke="#5ed85e" stroke-width="1"/>
<line x1="746.5" y1="243" x2="746.5" y2="262" stroke="#5ed85e" stroke-width="1"/>
<rect x="744.5" y="251.5" width="5" height="4" fill="#d8f8d0" stroke="#5ed85e" stroke-width="1"/>
<line x1="754.5" y1="254" x2="754.5" y2="275" stroke="#5ed85e" stroke-width="1"/>
<rect x="752.5" y="256.5" width="5" height="9" fill="#d8f8d0" stroke="#5ed85e" stroke-width="1"/>
<line x1="762.5" y1="240" x2="762.5" y2="272" stroke="#5ed85e" stroke-width="1"/>
<rect x="760.5" y="249.5" width="5" height="15" fill="#000" stroke="#5ed85e" stroke-width="1"/>
<line x1="770.5" y1="233" x2="770.5" y2="257" stroke="#5ed85e" stroke-width="1"/>
<rect x="768.5" y="243.5" width="5" height="6" fill="#000" stroke="#5ed85e" stroke-width="1"/>
<line x1="778.5" y1="226" x2="778.5" y2="247" stroke="#5ed85e" stroke-width="1"/>
<rect x="776.5" y="239.5" width="5" height="4" fill="#000" stroke="#5ed85e" stroke-width="1"/>
<line x1="786.5" y1="220" x2="786.5" y2="249" stroke="#5ed85e" stroke-width="1"/>
<rect x="784.5" y="225.5" width="5" height="14" fill="#000" stroke="#5ed85e" stroke-width="1"/>
<line x1="794.5" y1="222" x2="794.5" y2="256" stroke="#5ed85e" stroke-width="1"/>
<rect x="792.5" y="225.5" width="5" height="18" fill="#d8f8d0" stroke="#5ed85e" stroke-width="1"/>
<line x1="802.5" y1="236" x2="802.5" y2="269" stroke="#5ed85e" stroke-width="1"/>
<rect x="800.5" y="243.5" width="5" height="14" fill="#d8f8d0" stroke="#5ed85e" stroke-width="1"/>
<line x1="810.5" y1="247" x2="810.5" y2="289" stroke="#5ed85e" stroke-width="1"/>
<rect x="808.5" y="257.5" width="5" height="29" fill="#d8f8d0" stroke="#5ed85e" stroke-width="1"/>
<line x1="818.5" y1="274" x2="818.5" y2="331" stroke="#5ed85e" stroke-width="1"/>
<rect x="816.5" y="285.5" width="5" height="33" fill="#d8f8d0" stroke="#5ed85e" stroke-width="1"/>
<line x1="826.5" y1="312" x2="826.5" y2="344" stroke="#5ed85e" stroke-width="1"/>
<rect x="824.5" y="318.5" width="5" height="17" fill="#d8f8d0" stroke="#5ed85e" stroke-width="1"/>
<line x1="834.5" y1="292" x2="834.5" y2="343" stroke="#5ed85e" stroke-width="1"/>
<rect x="832.5" y="295.5" width="5" height="41" fill="#000" stroke="#5ed85e" stroke-width="1"/>
<line x1="842.5" y1="261" x2="842.5" y2="305" stroke="#5ed85e" stroke-width="1"/>
<rect x="840.5" y="273.5" width="5" height="22" fill="#000" stroke="#5ed85e" stroke-width="1"/>
<line x1="850.5" y1="243" x2="850.5" y2="276" stroke="#5ed85e" stroke-width="1"/>
<rect x="848.5" y="247.5" width="5" height="26" fill="#000" stroke="#5ed85e" stroke-width="1"/>
<line x1="858.5" y1="233" x2="858.5" y2="251" stroke="#5ed85e" stroke-width="1"/>
<rect x="856.5" y="237.5" width="5" height="10" fill="#000" stroke="#5ed85e" stroke-width="1"/>
<line x1="866.5" y1="228" x2="866.5" y2="294" stroke="#5ed85e" stroke-width="1"/>
<rect x="864.5" y="237.5" width="5" height="49" fill="#d8f8d0" stroke="#5ed85e" stroke-width="1"/>
<line x1="874.5" y1="274" x2="874.5" y2="302" stroke="#5ed85e" stroke-width="1"/>
<rect x="872.5" y="286.5" width="5" height="2" fill="#d8f8d0" stroke="#5ed85e" stroke-width="1"/>
<line x1="882.5" y1="281" x2="882.5" y2="289" stroke="#5ed85e" stroke-width="1"/>
<rect x="880.5" y="283.5" width="5" height="5" fill="#000" stroke="#5ed85e" stroke-width="1"/>
<line x1="890.5" y1="277" x2="890.5" y2="293" stroke="#5ed85e" stroke-width="1"/>
<rect x="888.5" y="279.5" width="5" height="4" fill="#000" stroke="#5ed85e" stroke-width="1"/>
<line x1="898.5" y1="268" x2="898.5" y2="290" stroke="#5ed85e" stroke-width="1"/>
<rect x="896.5" y="273.5" width="5" height="5" fill="#000" stroke="#5ed85e" stroke-width="1"/>
<line x1="906.5" y1="264" x2="906.5" y2="280" stroke="#5ed85e" stroke-width="1"/>
<rect x="904.5" y="266.5" width="5" height="7" fill="#000" stroke="#5ed85e" stroke-width="1"/>
<line x1="914.5" y1="224" x2="914.5" y2="292" stroke="#5ed85e" stroke-width="1"/>
<rect x="912.5" y="236.5" width="5" height="31" fill="#000" stroke="#5ed85e" stroke-width="1"/>
<line x1="922.5" y1="234" x2="922.5" y2="246" stroke="#5ed85e" stroke-width="1"/>
<rect x="920.5" y="236.5" width="5" height="1" fill="#d8f8d0" stroke="#5ed85e" stroke-width="1"/>
<line x1="930.5" y1="228" x2="930.5" y2="254" stroke="#5ed85e" stroke-width="1"/>
<rect x="928.5" y="237.5" width="5" height="8" fill="#d8f8d0" stroke="#5ed85e" stroke-width="1"/>
<line x1="938.5" y1="230" x2="938.5" y2="255" stroke="#5ed85e" stroke-width="1"/>
<rect x="936.5" y="243.5" width="5" height="1" fill="#000" stroke="#5ed85e" stroke-width="1"/>
<line x1="946.5" y1="186" x2="946.5" y2="247" stroke="#5ed85e" stroke-width="1"/>
<rect x="944.5" y="193.5" width="5" height="50" fill="#000" stroke="#5ed85e" stroke-width="1"/>
<line x1="954.5" y1="186" x2="954.5" y2="215" stroke="#5ed85e" stroke-width="1"/>
<rect x="952.5" y="193.5" width="5" height="11" fill="#d8f8d0" stroke="#5ed85e" stroke-width="1"/>
<line x1="962.5" y1="200" x2="962.5" y2="234" stroke="#5ed85e" stroke-width="1"/>
<rect x="960.5" y="204.5" width="5" height="24" fill="#d8f8d0" stroke="#5ed85e" stroke-width="1"/>
<line x1="970.5" y1="204" x2="970.5" y2="237" stroke="#5ed85e" stroke-width="1"/>
<rect x="968.5" y="212.5" width="5" height="17" fill="#000" stroke="#5ed85e" stroke-width="1"/>
<line x1="978.5" y1="200" x2="978.5" y2="223" stroke="#5ed85e" stroke-width="1"/>
<rect x="976.5" y="206.5" width="5" height="6" fill="#000" stroke="#5ed85e" stroke-width="1"/>
<line x1="986.5" y1="204" x2="986.5" y2="235" stroke="#5ed85e" stroke-width="1"/>
<rect x="984.5" y="206.5" width="5" height="16" fill="#d8f8d0" stroke="#5ed85e" stroke-width="1"/>
<line x1="994.5" y1="219" x2="994.5" y2="240" stroke="#5ed85e" stroke-width="1"/>
<rect x="992.5" y="222.5" width="5" height="11" fill="#d8f8d0" stroke="#5ed85e" stroke-width="1"/><rect x="241.5" y="164.5" width="776" height="279" fill="none" stroke="#fff"/><line x1="241.5" y1="443" x2="241.5" y2="447" stroke="#fff"/><line x1="337.5" y1="443" x2="337.5" y2="447" stroke="#fff"/><line x1="433.5" y1="443" x2="433.5" y2="447" stroke="#fff"/><line x1="529.5" y1="443" x2="529.5" y2="447" stroke="#fff"/><line x1="625.5" y1="443" x2="625.5" y2="447" stroke="#fff"/><line x1="721.5" y1="443" x2="721.5" y2="447" stroke="#fff"/><line x1="817.5" y1="443" x2="817.5" y2="447" stroke="#fff"/><line x1="913.5" y1="443" x2="913.5" y2="447" stroke="#fff"/><line x1="1009.5" y1="443" x2="1009.5" y2="447" stroke="#fff"/><line x1="1017" y1="180.5" x2="1021" y2="180.5" stroke="#fff"/><line x1="1017" y1="278.5" x2="1021" y2="278.5" stroke="#fff"/><line x1="1017" y1="327.5" x2="1021" y2="327.5" stroke="#fff"/><line x1="1017" y1="376.5" x2="1021" y2="376.5" stroke="#fff"/><line x1="1017" y1="425.5" x2="1021" y2="425.5" stroke="#fff"/></svg>
<svg style="position:absolute;left:245px;top:172px" width="11" height="8"><path d="M0 7 L5.5 1 L11 7 Z" fill="#fff"/></svg><div class="t" style="left:260px;top:167px;font-size:12.8px;letter-spacing:-1.1px;color:#fff">EURUSD,H4</div><div class="t" style="left:332px;top:167px;font-size:12.8px;color:#fff;white-space:pre">1.23116 1.23245 1.22920 1.23014</div>
<div style="position:absolute;left:246px;top:188px;width:58px;height:25px;background:linear-gradient(#4a4af8,#3232e4 60%,#2a2ad8)"></div>
<div style="position:absolute;left:250px;top:213px;width:52px;height:1px;background:#6a6af8"></div>
<div class="t" style="left:259px;top:192px;font-size:14.5px;letter-spacing:-1.2px;color:#dcdcff">SELL</div>
<div style="position:absolute;left:437px;top:188px;width:58px;height:25px;background:linear-gradient(#4a4af8,#3232e4 60%,#2a2ad8)"></div>
<div style="position:absolute;left:441px;top:213px;width:52px;height:1px;background:#6a6af8"></div>
<div class="t" style="left:452px;top:192px;font-size:14.5px;letter-spacing:-1px;color:#dcdcff">BUY</div>
<div style="position:absolute;left:307px;top:188px;width:127px;height:24px;background:#fff"></div>
<div style="position:absolute;left:307px;top:188px;width:24px;height:24px;background:linear-gradient(90deg,#e6e6e6,#d8d8d8);border-right:1px solid #c8c8c8"></div>
<div style="position:absolute;left:409px;top:188px;width:25px;height:24px;background:linear-gradient(90deg,#e6e6e6,#d8d8d8);border-left:1px solid #c8c8c8"></div>
<svg style="position:absolute;left:314px;top:197px" width="10" height="6"><path d="M0 0 H10 L5 5.5 Z" fill="#111"/></svg>
<svg style="position:absolute;left:416px;top:197px" width="10" height="6"><path d="M0 6 H10 L5 0.5 Z" fill="#111"/></svg>
<div class="t" style="left:374px;top:191px;font-size:15px;color:#222">1.00</div>
<div style="position:absolute;left:246px;top:214px;width:123px;height:49px;background:linear-gradient(#2e2ee0,#3a3af2 25%,#2222cc 70%,#1010a8)"></div>
<div class="t" style="left:194px;width:100px;text-align:right;top:237px;font-size:15px;font-weight:bold;color:#fff">1.23</div>
<div class="t" style="left:299px;top:218px;font-size:37px;color:#fff;letter-spacing:-1px">00</div>
<div class="t" style="left:343px;top:221px;font-size:14px;font-weight:bold;color:#fff">7</div>
<div style="position:absolute;left:372px;top:214px;width:123px;height:49px;background:linear-gradient(#2e2ee0,#3a3af2 25%,#2222cc 70%,#1010a8)"></div>
<div class="t" style="left:320px;width:100px;text-align:right;top:237px;font-size:15px;font-weight:bold;color:#fff">1.23</div>
<div class="t" style="left:425px;top:218px;font-size:37px;color:#fff;letter-spacing:-1px">04</div>
<div class="t" style="left:469px;top:221px;font-size:14px;font-weight:bold;color:#fff">3</div>
<div class="t" style="left:1024px;top:173.5px;font-size:12.5px;color:#fff;-webkit-text-stroke:0.2px #fff">1.23470</div>
<div class="t" style="left:1024px;top:271.5px;font-size:12.5px;color:#fff;-webkit-text-stroke:0.2px #fff">1.22605</div>
<div class="t" style="left:1024px;top:320.5px;font-size:12.5px;color:#fff;-webkit-text-stroke:0.2px #fff">1.22175</div>
<div class="t" style="left:1024px;top:369.5px;font-size:12.5px;color:#fff;-webkit-text-stroke:0.2px #fff">1.21745</div>
<div class="t" style="left:1024px;top:418.5px;font-size:12.5px;color:#fff;-webkit-text-stroke:0.2px #fff">1.21310</div>
<div style="position:absolute;left:1018px;top:225px;width:57px;height:15px;background:#fff"></div><div class="t" style="left:1024px;top:225px;font-size:12.5px;color:#000">1.23014</div>
<div class="t" style="left:241px;top:449px;font-size:12.5px;color:#fff;-webkit-text-stroke:0.25px #fff">14 Dec 2020</div>
<div class="t" style="left:337px;top:449px;font-size:12.5px;color:#fff;-webkit-text-stroke:0.25px #fff">16 Dec 20:00</div>
<div class="t" style="left:433px;top:449px;font-size:12.5px;color:#fff;-webkit-text-stroke:0.25px #fff">18 Dec 20:00</div>
<div class="t" style="left:529px;top:449px;font-size:12.5px;color:#fff;-webkit-text-stroke:0.25px #fff">22 Dec 20:00</div>
<div class="t" style="left:625px;top:449px;font-size:12.5px;color:#fff;-webkit-text-stroke:0.25px #fff">24 Dec 20:00</div>
<div class="t" style="left:721px;top:449px;font-size:12.5px;color:#fff;-webkit-text-stroke:0.25px #fff">29 Dec 16:00</div>
<div class="t" style="left:817px;top:449px;font-size:12.5px;color:#fff;-webkit-text-stroke:0.25px #fff">31 Dec 16:00</div>
<div class="t" style="left:913px;top:449px;font-size:12.5px;color:#fff;-webkit-text-stroke:0.25px #fff">5 Jan 16:00</div>
<div style="position:absolute;left:1093px;top:123px;width:897px;height:355px;background:linear-gradient(#bdcbdb 0px,#c5d2df 20px,#cfdbe7 30px,#d8e2ec 37px,#dde6ef 45px,#dde6ef);border-top:1px solid #e8eef4;border-left:1px solid #eef3f7;box-sizing:border-box"></div>
<div style="position:absolute;left:1093px;top:468px;width:897px;height:10px;background:linear-gradient(#e0e8f0,#cdd8e4)"></div>
<svg style="position:absolute;left:1105px;top:138px" width="19" height="18"><rect x="0.5" y="0.5" width="12" height="10" fill="#f4f9ff" stroke="#4f86c8"/><rect x="0.5" y="0.5" width="12" height="2.5" fill="#4f86c8"/><rect x="5.5" y="6.5" width="12" height="10" fill="#f4f9ff" stroke="#4f86c8"/><rect x="5.5" y="6.5" width="12" height="2.5" fill="#4f86c8"/><path d="M7.5 14.5 q1.5-5 3 0 t3 0 t3 -2" fill="none" stroke="#333" stroke-width="0.9"/><path d="M2 7 h3 M3 5 v4" stroke="#4f86c8" stroke-width="0.9"/></svg>
<div class="t" style="left:1128px;top:138px;font-size:14px;letter-spacing:-0.6px;color:#a4adb6">GBPUSD,H4</div>
<div style="position:absolute;left:1816px;top:134px;width:39px;height:21px;border:1px solid #a3b2c3;border-radius:2px;background:linear-gradient(#d3dde8,#c9d5e1)"></div>
<div style="position:absolute;left:1828px;top:144px;width:15px;height:4px;background:#fff;border:1px solid #5a6570;border-radius:1px"></div>
<div style="position:absolute;left:1860px;top:134px;width:39px;height:21px;border:1px solid #a3b2c3;border-radius:2px;background:linear-gradient(#d3dde8,#c9d5e1)"></div>
<div style="position:absolute;left:1873px;top:138px;width:10px;height:10px;border:2px solid #5a6570;background:#e4eaf0;box-shadow:inset 0 0 0 1px #fff"></div>
<div style="position:absolute;left:1904px;top:134px;width:39px;height:21px;border:1px solid #a3b2c3;border-radius:2px;background:linear-gradient(#d3dde8,#c9d5e1)"></div>
<svg style="position:absolute;left:1915px;top:137px" width="18" height="16"><path d="M3 2 L15 14 M15 2 L3 14" stroke="#5a6570" stroke-width="5" stroke-linecap="round"/><path d="M3 2 L15 14 M15 2 L3 14" stroke="#fff" stroke-width="2.6" stroke-linecap="round"/></svg>
<div style="position:absolute;left:1101px;top:160px;width:785px;height:309px;background:#000;border-top:1px solid #6a737c;border-left:1px solid #6a737c;box-sizing:border-box"></div>
<svg style="position:absolute;left:1102px;top:161px" width="784" height="307" viewBox="1102 161 784 307"><line x1="1154.5" y1="165" x2="1154.5" y2="443" stroke="#b4b4b4" stroke-width="1" stroke-dasharray="3 3"/>
<line x1="1202.5" y1="165" x2="1202.5" y2="443" stroke="#b4b4b4" stroke-width="1" stroke-dasharray="3 3"/>
<line x1="1250.5" y1="165" x2="1250.5" y2="443" stroke="#b4b4b4" stroke-width="1" stroke-dasharray="3 3"/>
<line x1="1298.5" y1="165" x2="1298.5" y2="443" stroke="#b4b4b4" stroke-width="1" stroke-dasharray="3 3"/>
<line x1="1346.5" y1="165" x2="1346.5" y2="443" stroke="#b4b4b4" stroke-width="1" stroke-dasharray="3 3"/>
<line x1="1394.5" y1="165" x2="1394.5" y2="443" stroke="#b4b4b4" stroke-width="1" stroke-dasharray="3 3"/>
<line x1="1442.5" y1="165" x2="1442.5" y2="443" stroke="#b4b4b4" stroke-width="1" stroke-dasharray="3 3"/>
<line x1="1490.5" y1="165" x2="1490.5" y2="443" stroke="#b4b4b4" stroke-width="1" stroke-dasharray="3 3"/>
<line x1="1538.5" y1="165" x2="1538.5" y2="443" stroke="#b4b4b4" stroke-width="1" stroke-dasharray="3 3"/>
<line x1="1586.5" y1="165" x2="1586.5" y2="443" stroke="#b4b4b4" stroke-width="1" stroke-dasharray="3 3"/>
<line x1="1634.5" y1="165" x2="1634.5" y2="443" stroke="#b4b4b4" stroke-width="1" stroke-dasharray="3 3"/>
<line x1="1682.5" y1="165" x2="1682.5" y2="443" stroke="#b4b4b4" stroke-width="1" stroke-dasharray="3 3"/>
<line x1="1730.5" y1="165" x2="1730.5" y2="443" stroke="#b4b4b4" stroke-width="1" stroke-dasharray="3 3"/>
<line x1="1778.5" y1="165" x2="1778.5" y2="443" stroke="#b4b4b4" stroke-width="1" stroke-dasharray="3 3"/>
<line x1="1826.5" y1="165" x2="1826.5" y2="443" stroke="#b4b4b4" stroke-width="1" stroke-dasharray="3 3"/>
<line x1="1874.5" y1="165" x2="1874.5" y2="443" stroke="#b4b4b4" stroke-width="1" stroke-dasharray="3 3"/>
<line x1="1106" y1="179.5" x2="1886" y2="179.5" stroke="#b4b4b4" stroke-width="1" stroke-dasharray="3 3"/>
<line x1="1106" y1="228.5" x2="1886" y2="228.5" stroke="#b4b4b4" stroke-width="1" stroke-dasharray="3 3"/>
<line x1="1106" y1="278.5" x2="1886" y2="278.5" stroke="#b4b4b4" stroke-width="1" stroke-dasharray="3 3"/>
<line x1="1106" y1="327.5" x2="1886" y2="327.5" stroke="#b4b4b4" stroke-width="1" stroke-dasharray="3 3"/>
<line x1="1106" y1="376.5" x2="1886" y2="376.5" stroke="#b4b4b4" stroke-width="1" stroke-dasharray="3 3"/>
<line x1="1106" y1="425.5" x2="1886" y2="425.5" stroke="#b4b4b4" stroke-width="1" stroke-dasharray="3 3"/><line x1="1106" y1="227.5" x2="1886" y2="227.5" stroke="#a8b4b8"/><path d="M1106.0 380.0 C1109.2 379.5 1117.7 381.2 1125.0 377.0 C1132.3 372.8 1140.8 360.8 1150.0 355.0 C1159.2 349.2 1171.7 344.0 1180.0 342.0 C1188.3 340.0 1194.2 344.0 1200.0 343.0 C1205.8 342.0 1208.3 337.2 1215.0 336.0 C1221.7 334.8 1230.8 335.0 1240.0 336.0 C1249.2 337.0 1263.0 341.0 1270.0 342.0 C1277.0 343.0 1277.0 343.7 1282.0 342.0 C1287.0 340.3 1293.7 333.7 1300.0 332.0 C1306.3 330.3 1313.3 334.7 1320.0 332.0 C1326.7 329.3 1333.0 321.3 1340.0 316.0 C1347.0 310.7 1355.8 303.0 1362.0 300.0 C1368.2 297.0 1371.7 295.3 1377.0 298.0 C1382.3 300.7 1388.5 310.2 1394.0 316.0 C1399.5 321.8 1405.3 330.0 1410.0 333.0 C1414.7 336.0 1417.5 334.5 1422.0 334.0 C1426.5 333.5 1432.0 329.8 1437.0 330.0 C1442.0 330.2 1446.5 330.7 1452.0 335.0 C1457.5 339.3 1465.3 351.0 1470.0 356.0 C1474.7 361.0 1472.5 364.6 1480.0 365.0 C1487.5 365.4 1504.4 367.4 1515.0 358.7 C1525.6 350.0 1532.4 329.9 1543.6 312.6 C1554.8 295.3 1573.8 264.8 1582.0 255.0 C1590.2 245.2 1588.8 252.1 1593.0 253.8 C1597.2 255.5 1602.0 259.0 1607.0 265.0 C1612.0 271.0 1615.0 279.4 1623.0 290.0 C1631.0 300.6 1646.0 326.3 1655.0 328.5 C1664.0 330.7 1667.5 315.4 1677.0 303.0 C1686.5 290.6 1703.0 261.8 1712.0 253.8 C1721.0 245.8 1724.7 252.6 1731.0 255.0 C1737.3 257.4 1744.2 266.7 1750.0 268.0 C1755.8 269.3 1756.4 272.8 1766.0 263.0 C1775.6 253.2 1796.8 217.2 1807.5 209.0 C1818.2 200.8 1821.0 211.0 1830.0 214.0 C1839.0 217.0 1852.3 225.0 1861.6 226.8 C1870.9 228.6 1881.9 225.3 1886.0 225.0" fill="none" stroke="#d02828" stroke-width="1"/><path d="M1107.5 363V384M1106 373.5H1107M1108 374.5H1109" stroke="#50c850" stroke-width="1" fill="none"/>
<path d="M1111.5 364V387M1110 374.5H1111M1112 375.5H1113" stroke="#50c850" stroke-width="1" fill="none"/>
<path d="M1115.5 358V387M1114 375.5H1115M1116 364.5H1117" stroke="#50c850" stroke-width="1" fill="none"/>
<path d="M1119.5 352V371M1118 364.5H1119M1120 369.5H1121" stroke="#50c850" stroke-width="1" fill="none"/>
<path d="M1123.5 356V376M1122 369.5H1123M1124 360.5H1125" stroke="#50c850" stroke-width="1" fill="none"/>
<path d="M1127.5 351V363M1126 360.5H1127M1128 352.5H1129" stroke="#50c850" stroke-width="1" fill="none"/>
<path d="M1131.5 327V362M1130 352.5H1131M1132 339.5H1133" stroke="#50c850" stroke-width="1" fill="none"/>
<path d="M1135.5 317V341M1134 339.5H1135M1136 328.5H1137" stroke="#50c850" stroke-width="1" fill="none"/>
<path d="M1139.5 325V361M1138 328.5H1139M1140 360.5H1141" stroke="#50c850" stroke-width="1" fill="none"/>
<path d="M1143.5 356V366M1142 360.5H1143M1144 363.5H1145" stroke="#50c850" stroke-width="1" fill="none"/>
<path d="M1147.5 347V367M1146 363.5H1147M1148 359.5H1149" stroke="#50c850" stroke-width="1" fill="none"/>
<path d="M1151.5 346V368M1150 359.5H1151M1152 353.5H1153" stroke="#50c850" stroke-width="1" fill="none"/>
<path d="M1155.5 328V363M1154 353.5H1155M1156 340.5H1157" stroke="#50c850" stroke-width="1" fill="none"/>
<path d="M1159.5 329V347M1158 340.5H1159M1160 343.5H1161" stroke="#50c850" stroke-width="1" fill="none"/>
<path d="M1163.5 333V345M1162 343.5H1163M1164 336.5H1165" stroke="#50c850" stroke-width="1" fill="none"/>
<path d="M1167.5 327V344M1166 336.5H1167M1168 332.5H1169" stroke="#50c850" stroke-width="1" fill="none"/>
<path d="M1171.5 322V337M1170 332.5H1171M1172 331.5H1173" stroke="#50c850" stroke-width="1" fill="none"/>
<path d="M1175.5 320V340M1174 331.5H1175M1176 333.5H1177" stroke="#50c850" stroke-width="1" fill="none"/>
<path d="M1179.5 323V342M1178 333.5H1179M1180 330.5H1181" stroke="#50c850" stroke-width="1" fill="none"/>
<path d="M1183.5 312V332M1182 330.5H1183M1184 325.5H1185" stroke="#50c850" stroke-width="1" fill="none"/>
<path d="M1187.5 314V331M1186 325.5H1187M1188 329.5H1189" stroke="#50c850" stroke-width="1" fill="none"/>
<path d="M1191.5 322V337M1190 329.5H1191M1192 328.5H1193" stroke="#50c850" stroke-width="1" fill="none"/>
<path d="M1195.5 317V331M1194 328.5H1195M1196 319.5H1197" stroke="#50c850" stroke-width="1" fill="none"/>
<path d="M1199.5 315V337M1198 319.5H1199M1200 327.5H1201" stroke="#50c850" stroke-width="1" fill="none"/>
<path d="M1203.5 315V339M1202 327.5H1203M1204 334.5H1205" stroke="#50c850" stroke-width="1" fill="none"/>
<path d="M1207.5 327V346M1206 334.5H1207M1208 336.5H1209" stroke="#50c850" stroke-width="1" fill="none"/>
<path d="M1211.5 322V347M1210 336.5H1211M1212 332.5H1213" stroke="#50c850" stroke-width="1" fill="none"/>
<path d="M1215.5 331V350M1214 332.5H1215M1216 338.5H1217" stroke="#50c850" stroke-width="1" fill="none"/>
<path d="M1219.5 324V346M1218 338.5H1219M1220 329.5H1221" stroke="#50c850" stroke-width="1" fill="none"/>
<path d="M1223.5 324V349M1222 329.5H1223M1224 337.5H1225" stroke="#50c850" stroke-width="1" fill="none"/>
<path d="M1227.5 333V344M1226 337.5H1227M1228 339.5H1229" stroke="#50c850" stroke-width="1" fill="none"/>
<path d="M1231.5 337V344M1230 339.5H1231M1232 342.5H1233" stroke="#50c850" stroke-width="1" fill="none"/>
<path d="M1235.5 329V356M1234 342.5H1235M1236 353.5H1237" stroke="#50c850" stroke-width="1" fill="none"/>
<path d="M1239.5 333V360M1238 353.5H1239M1240 346.5H1241" stroke="#50c850" stroke-width="1" fill="none"/>
<path d="M1243.5 342V356M1242 346.5H1243M1244 348.5H1245" stroke="#50c850" stroke-width="1" fill="none"/>
<path d="M1247.5 341V354M1246 348.5H1247M1248 348.5H1249" stroke="#50c850" stroke-width="1" fill="none"/>
<path d="M1251.5 324V349M1250 348.5H1251M1252 336.5H1253" stroke="#50c850" stroke-width="1" fill="none"/>
<path d="M1255.5 325V341M1254 336.5H1255M1256 339.5H1257" stroke="#50c850" stroke-width="1" fill="none"/>
<path d="M1259.5 326V353M1258 339.5H1259M1260 344.5H1261" stroke="#50c850" stroke-width="1" fill="none"/>
<path d="M1263.5 342V354M1262 344.5H1263M1264 348.5H1265" stroke="#50c850" stroke-width="1" fill="none"/>
<path d="M1267.5 332V352M1266 348.5H1267M1268 343.5H1269" stroke="#50c850" stroke-width="1" fill="none"/>
<path d="M1271.5 327V355M1270 343.5H1271M1272 340.5H1273" stroke="#50c850" stroke-width="1" fill="none"/>
<path d="M1275.5 332V346M1274 340.5H1275M1276 338.5H1277" stroke="#50c850" stroke-width="1" fill="none"/>
<path d="M1279.5 314V343M1278 338.5H1279M1280 321.5H1281" stroke="#50c850" stroke-width="1" fill="none"/>
<path d="M1283.5 300V326M1282 321.5H1283M1284 302.5H1285" stroke="#50c850" stroke-width="1" fill="none"/>
<path d="M1287.5 290V319M1286 302.5H1287M1288 310.5H1289" stroke="#50c850" stroke-width="1" fill="none"/>
<path d="M1291.5 302V312M1290 310.5H1291M1292 307.5H1293" stroke="#50c850" stroke-width="1" fill="none"/>
<path d="M1295.5 296V318M1294 307.5H1295M1296 307.5H1297" stroke="#50c850" stroke-width="1" fill="none"/>
<path d="M1299.5 296V335M1298 307.5H1299M1300 325.5H1301" stroke="#50c850" stroke-width="1" fill="none"/>
<path d="M1303.5 316V349M1302 325.5H1303M1304 339.5H1305" stroke="#50c850" stroke-width="1" fill="none"/>
<path d="M1307.5 324V343M1306 339.5H1307M1308 333.5H1309" stroke="#50c850" stroke-width="1" fill="none"/>
<path d="M1311.5 322V343M1310 333.5H1311M1312 332.5H1313" stroke="#50c850" stroke-width="1" fill="none"/>
<path d="M1315.5 316V341M1314 332.5H1315M1316 328.5H1317" stroke="#50c850" stroke-width="1" fill="none"/>
<path d="M1319.5 324V335M1318 328.5H1319M1320 325.5H1321" stroke="#50c850" stroke-width="1" fill="none"/>
<path d="M1323.5 302V332M1322 325.5H1323M1324 311.5H1325" stroke="#50c850" stroke-width="1" fill="none"/>
<path d="M1327.5 297V322M1326 311.5H1327M1328 306.5H1329" stroke="#50c850" stroke-width="1" fill="none"/>
<path d="M1331.5 280V316M1330 306.5H1331M1332 289.5H1333" stroke="#50c850" stroke-width="1" fill="none"/>
<path d="M1335.5 284V300M1334 289.5H1335M1336 289.5H1337" stroke="#50c850" stroke-width="1" fill="none"/>
<path d="M1339.5 280V306M1338 289.5H1339M1340 293.5H1341" stroke="#50c850" stroke-width="1" fill="none"/>
<path d="M1343.5 286V305M1342 293.5H1343M1344 298.5H1345" stroke="#50c850" stroke-width="1" fill="none"/>
<path d="M1347.5 271V310M1346 298.5H1347M1348 282.5H1349" stroke="#50c850" stroke-width="1" fill="none"/>
<path d="M1351.5 270V291M1350 282.5H1351M1352 280.5H1353" stroke="#50c850" stroke-width="1" fill="none"/>
<path d="M1355.5 277V291M1354 280.5H1355M1356 280.5H1357" stroke="#50c850" stroke-width="1" fill="none"/>
<path d="M1359.5 271V300M1358 280.5H1359M1360 293.5H1361" stroke="#50c850" stroke-width="1" fill="none"/>
<path d="M1363.5 283V323M1362 293.5H1363M1364 315.5H1365" stroke="#50c850" stroke-width="1" fill="none"/>
<path d="M1367.5 313V348M1366 315.5H1367M1368 345.5H1369" stroke="#50c850" stroke-width="1" fill="none"/>
<path d="M1371.5 336V375M1370 345.5H1371M1372 372.5H1373" stroke="#50c850" stroke-width="1" fill="none"/>
<path d="M1375.5 353V373M1374 372.5H1375M1376 362.5H1377" stroke="#50c850" stroke-width="1" fill="none"/>
<path d="M1379.5 337V363M1378 362.5H1379M1380 341.5H1381" stroke="#50c850" stroke-width="1" fill="none"/>
<path d="M1383.5 324V344M1382 341.5H1383M1384 329.5H1385" stroke="#50c850" stroke-width="1" fill="none"/>
<path d="M1387.5 327V338M1386 329.5H1387M1388 331.5H1389" stroke="#50c850" stroke-width="1" fill="none"/>
<path d="M1391.5 323V343M1390 331.5H1391M1392 335.5H1393" stroke="#50c850" stroke-width="1" fill="none"/>
<path d="M1395.5 323V336M1394 335.5H1395M1396 335.5H1397" stroke="#50c850" stroke-width="1" fill="none"/>
<path d="M1399.5 331V341M1398 335.5H1399M1400 335.5H1401" stroke="#50c850" stroke-width="1" fill="none"/>
<path d="M1403.5 320V341M1402 335.5H1403M1404 330.5H1405" stroke="#50c850" stroke-width="1" fill="none"/>
<path d="M1407.5 320V333M1406 330.5H1407M1408 328.5H1409" stroke="#50c850" stroke-width="1" fill="none"/>
<path d="M1411.5 323V336M1410 328.5H1411M1412 328.5H1413" stroke="#50c850" stroke-width="1" fill="none"/>
<path d="M1415.5 308V334M1414 328.5H1415M1416 319.5H1417" stroke="#50c850" stroke-width="1" fill="none"/>
<path d="M1419.5 296V324M1418 319.5H1419M1420 304.5H1421" stroke="#50c850" stroke-width="1" fill="none"/>
<path d="M1423.5 280V312M1422 304.5H1423M1424 289.5H1425" stroke="#50c850" stroke-width="1" fill="none"/>
<path d="M1427.5 276V320M1426 289.5H1427M1428 311.5H1429" stroke="#50c850" stroke-width="1" fill="none"/>
<path d="M1431.5 300V321M1430 311.5H1431M1432 320.5H1433" stroke="#50c850" stroke-width="1" fill="none"/>
<path d="M1435.5 312V334M1434 320.5H1435M1436 325.5H1437" stroke="#50c850" stroke-width="1" fill="none"/>
<path d="M1439.5 317V343M1438 325.5H1439M1440 331.5H1441" stroke="#50c850" stroke-width="1" fill="none"/>
<path d="M1443.5 325V346M1442 331.5H1443M1444 343.5H1445" stroke="#50c850" stroke-width="1" fill="none"/>
<path d="M1447.5 330V363M1446 343.5H1447M1448 357.5H1449" stroke="#50c850" stroke-width="1" fill="none"/>
<path d="M1451.5 345V375M1450 357.5H1451M1452 367.5H1453" stroke="#50c850" stroke-width="1" fill="none"/>
<path d="M1455.5 345V374M1454 367.5H1455M1456 358.5H1457" stroke="#50c850" stroke-width="1" fill="none"/>
<path d="M1459.5 353V371M1458 358.5H1459M1460 358.5H1461" stroke="#50c850" stroke-width="1" fill="none"/>
<path d="M1463.5 353V365M1462 358.5H1463M1464 357.5H1465" stroke="#50c850" stroke-width="1" fill="none"/>
<path d="M1467.5 349V386M1466 357.5H1467M1468 380.5H1469" stroke="#50c850" stroke-width="1" fill="none"/>
<path d="M1471.5 370V415M1470 380.5H1471M1472 405.5H1473" stroke="#50c850" stroke-width="1" fill="none"/>
<path d="M1475.5 389V409M1474 405.5H1475M1476 396.5H1477" stroke="#50c850" stroke-width="1" fill="none"/>
<path d="M1479.5 386V404M1478 396.5H1479M1480 400.5H1481" stroke="#50c850" stroke-width="1" fill="none"/>
<path d="M1483.5 346V413M1482 400.5H1483M1484 349.5H1485" stroke="#50c850" stroke-width="1" fill="none"/>
<path d="M1487.5 327V355M1486 349.5H1487M1488 335.5H1489" stroke="#50c850" stroke-width="1" fill="none"/>
<path d="M1491.5 316V345M1490 335.5H1491M1492 325.5H1493" stroke="#50c850" stroke-width="1" fill="none"/>
<path d="M1495.5 306V329M1494 325.5H1495M1496 316.5H1497" stroke="#50c850" stroke-width="1" fill="none"/>
<path d="M1499.5 311V356M1498 316.5H1499M1500 351.5H1501" stroke="#50c850" stroke-width="1" fill="none"/>
<path d="M1503.5 344V357M1502 351.5H1503M1504 350.5H1505" stroke="#50c850" stroke-width="1" fill="none"/>
<path d="M1507.5 342V353M1506 350.5H1507M1508 352.5H1509" stroke="#50c850" stroke-width="1" fill="none"/>
<path d="M1511.5 340V364M1510 352.5H1511M1512 346.5H1513" stroke="#50c850" stroke-width="1" fill="none"/>
<path d="M1515.5 338V353M1514 346.5H1515M1516 351.5H1517" stroke="#50c850" stroke-width="1" fill="none"/>
<path d="M1519.5 320V359M1518 351.5H1519M1520 327.5H1521" stroke="#50c850" stroke-width="1" fill="none"/>
<path d="M1523.5 293V333M1522 327.5H1523M1524 302.5H1525" stroke="#50c850" stroke-width="1" fill="none"/>
<path d="M1527.5 295V308M1526 302.5H1527M1528 301.5H1529" stroke="#50c850" stroke-width="1" fill="none"/>
<path d="M1531.5 294V305M1530 301.5H1531M1532 297.5H1533" stroke="#50c850" stroke-width="1" fill="none"/>
<path d="M1535.5 281V308M1534 297.5H1535M1536 283.5H1537" stroke="#50c850" stroke-width="1" fill="none"/>
<path d="M1539.5 261V287M1538 283.5H1539M1540 267.5H1541" stroke="#50c850" stroke-width="1" fill="none"/>
<path d="M1543.5 255V276M1542 267.5H1543M1544 274.5H1545" stroke="#50c850" stroke-width="1" fill="none"/>
<path d="M1547.5 266V283M1546 274.5H1547M1548 276.5H1549" stroke="#50c850" stroke-width="1" fill="none"/>
<path d="M1551.5 273V284M1550 276.5H1551M1552 276.5H1553" stroke="#50c850" stroke-width="1" fill="none"/>
<path d="M1555.5 263V279M1554 276.5H1555M1556 265.5H1557" stroke="#50c850" stroke-width="1" fill="none"/>
<path d="M1559.5 240V274M1558 265.5H1559M1560 250.5H1561" stroke="#50c850" stroke-width="1" fill="none"/>
<path d="M1563.5 218V263M1562 250.5H1563M1564 228.5H1565" stroke="#50c850" stroke-width="1" fill="none"/>
<path d="M1567.5 218V231M1566 228.5H1567M1568 229.5H1569" stroke="#50c850" stroke-width="1" fill="none"/>
<path d="M1571.5 225V238M1570 229.5H1571M1572 229.5H1573" stroke="#50c850" stroke-width="1" fill="none"/>
<path d="M1575.5 219V243M1574 229.5H1575M1576 241.5H1577" stroke="#50c850" stroke-width="1" fill="none"/>
<path d="M1579.5 229V244M1578 241.5H1579M1580 241.5H1581" stroke="#50c850" stroke-width="1" fill="none"/>
<path d="M1583.5 235V255M1582 241.5H1583M1584 252.5H1585" stroke="#50c850" stroke-width="1" fill="none"/>
<path d="M1587.5 250V261M1586 252.5H1587M1588 259.5H1589" stroke="#50c850" stroke-width="1" fill="none"/>
<path d="M1591.5 257V265M1590 259.5H1591M1592 264.5H1593" stroke="#50c850" stroke-width="1" fill="none"/>
<path d="M1595.5 254V279M1594 264.5H1595M1596 268.5H1597" stroke="#50c850" stroke-width="1" fill="none"/>
<path d="M1599.5 261V286M1598 268.5H1599M1600 281.5H1601" stroke="#50c850" stroke-width="1" fill="none"/>
<path d="M1603.5 274V341M1602 281.5H1603M1604 329.5H1605" stroke="#50c850" stroke-width="1" fill="none"/>
<path d="M1607.5 327V357M1606 329.5H1607M1608 348.5H1609" stroke="#50c850" stroke-width="1" fill="none"/>
<path d="M1611.5 339V373M1610 348.5H1611M1612 366.5H1613" stroke="#50c850" stroke-width="1" fill="none"/>
<path d="M1615.5 358V388M1614 366.5H1615M1616 379.5H1617" stroke="#50c850" stroke-width="1" fill="none"/>
<path d="M1619.5 346V383M1618 379.5H1619M1620 353.5H1621" stroke="#50c850" stroke-width="1" fill="none"/>
<path d="M1623.5 282V356M1622 353.5H1623M1624 290.5H1625" stroke="#50c850" stroke-width="1" fill="none"/>
<path d="M1627.5 284V305M1626 290.5H1627M1628 295.5H1629" stroke="#50c850" stroke-width="1" fill="none"/>
<path d="M1631.5 285V314M1630 295.5H1631M1632 305.5H1633" stroke="#50c850" stroke-width="1" fill="none"/>
<path d="M1635.5 296V319M1634 305.5H1635M1636 316.5H1637" stroke="#50c850" stroke-width="1" fill="none"/>
<path d="M1639.5 308V334M1638 316.5H1639M1640 330.5H1641" stroke="#50c850" stroke-width="1" fill="none"/>
<path d="M1643.5 323V350M1642 330.5H1643M1644 345.5H1645" stroke="#50c850" stroke-width="1" fill="none"/>
<path d="M1647.5 333V355M1646 345.5H1647M1648 334.5H1649" stroke="#50c850" stroke-width="1" fill="none"/>
<path d="M1651.5 314V347M1650 334.5H1651M1652 316.5H1653" stroke="#50c850" stroke-width="1" fill="none"/>
<path d="M1655.5 313V319M1654 316.5H1655M1656 316.5H1657" stroke="#50c850" stroke-width="1" fill="none"/>
<path d="M1659.5 305V327M1658 316.5H1659M1660 314.5H1661" stroke="#50c850" stroke-width="1" fill="none"/>
<path d="M1663.5 284V319M1662 314.5H1663M1664 293.5H1665" stroke="#50c850" stroke-width="1" fill="none"/>
<path d="M1667.5 270V301M1666 293.5H1667M1668 275.5H1669" stroke="#50c850" stroke-width="1" fill="none"/>
<path d="M1671.5 258V277M1670 275.5H1671M1672 264.5H1673" stroke="#50c850" stroke-width="1" fill="none"/>
<path d="M1675.5 249V274M1674 264.5H1675M1676 258.5H1677" stroke="#50c850" stroke-width="1" fill="none"/>
<path d="M1679.5 232V265M1678 258.5H1679M1680 243.5H1681" stroke="#50c850" stroke-width="1" fill="none"/>
<path d="M1683.5 226V253M1682 243.5H1683M1684 234.5H1685" stroke="#50c850" stroke-width="1" fill="none"/>
<path d="M1687.5 222V236M1686 234.5H1687M1688 224.5H1689" stroke="#50c850" stroke-width="1" fill="none"/>
<path d="M1691.5 222V252M1690 224.5H1691M1692 240.5H1693" stroke="#50c850" stroke-width="1" fill="none"/>
<path d="M1695.5 230V250M1694 240.5H1695M1696 249.5H1697" stroke="#50c850" stroke-width="1" fill="none"/>
<path d="M1699.5 232V258M1698 249.5H1699M1700 244.5H1701" stroke="#50c850" stroke-width="1" fill="none"/>
<path d="M1703.5 233V246M1702 244.5H1703M1704 240.5H1705" stroke="#50c850" stroke-width="1" fill="none"/>
<path d="M1707.5 237V252M1706 240.5H1707M1708 246.5H1709" stroke="#50c850" stroke-width="1" fill="none"/>
<path d="M1711.5 235V260M1710 246.5H1711M1712 258.5H1713" stroke="#50c850" stroke-width="1" fill="none"/>
<path d="M1715.5 253V268M1714 258.5H1715M1716 266.5H1717" stroke="#50c850" stroke-width="1" fill="none"/>
<path d="M1719.5 262V288M1718 266.5H1719M1720 281.5H1721" stroke="#50c850" stroke-width="1" fill="none"/>
<path d="M1723.5 269V292M1722 281.5H1723M1724 287.5H1725" stroke="#50c850" stroke-width="1" fill="none"/>
<path d="M1727.5 278V300M1726 287.5H1727M1728 291.5H1729" stroke="#50c850" stroke-width="1" fill="none"/>
<path d="M1731.5 269V293M1730 291.5H1731M1732 281.5H1733" stroke="#50c850" stroke-width="1" fill="none"/>
<path d="M1735.5 274V290M1734 281.5H1735M1736 279.5H1737" stroke="#50c850" stroke-width="1" fill="none"/>
<path d="M1739.5 273V282M1738 279.5H1739M1740 276.5H1741" stroke="#50c850" stroke-width="1" fill="none"/>
<path d="M1743.5 262V278M1742 276.5H1743M1744 266.5H1745" stroke="#50c850" stroke-width="1" fill="none"/>
<path d="M1747.5 254V272M1746 266.5H1747M1748 267.5H1749" stroke="#50c850" stroke-width="1" fill="none"/>
<path d="M1751.5 253V271M1750 267.5H1751M1752 259.5H1753" stroke="#50c850" stroke-width="1" fill="none"/>
<path d="M1755.5 247V262M1754 259.5H1755M1756 257.5H1757" stroke="#50c850" stroke-width="1" fill="none"/>
<path d="M1759.5 236V269M1758 257.5H1759M1760 245.5H1761" stroke="#50c850" stroke-width="1" fill="none"/>
<path d="M1763.5 230V258M1762 245.5H1763M1764 236.5H1765" stroke="#50c850" stroke-width="1" fill="none"/>
<path d="M1767.5 216V247M1766 236.5H1767M1768 217.5H1769" stroke="#50c850" stroke-width="1" fill="none"/>
<path d="M1771.5 215V225M1770 217.5H1771M1772 217.5H1773" stroke="#50c850" stroke-width="1" fill="none"/>
<path d="M1775.5 209V223M1774 217.5H1775M1776 217.5H1777" stroke="#50c850" stroke-width="1" fill="none"/>
<path d="M1779.5 202V229M1778 217.5H1779M1780 204.5H1781" stroke="#50c850" stroke-width="1" fill="none"/>
<path d="M1783.5 191V205M1782 204.5H1783M1784 204.5H1785" stroke="#50c850" stroke-width="1" fill="none"/>
<path d="M1787.5 195V209M1786 204.5H1787M1788 197.5H1789" stroke="#50c850" stroke-width="1" fill="none"/>
<path d="M1791.5 187V203M1790 197.5H1791M1792 191.5H1793" stroke="#50c850" stroke-width="1" fill="none"/>
<path d="M1795.5 189V193M1794 191.5H1795M1796 191.5H1797" stroke="#50c850" stroke-width="1" fill="none"/>
<path d="M1799.5 188V202M1798 191.5H1799M1800 195.5H1801" stroke="#50c850" stroke-width="1" fill="none"/>
<path d="M1803.5 179V197M1802 195.5H1803M1804 187.5H1805" stroke="#50c850" stroke-width="1" fill="none"/>
<path d="M1807.5 181V194M1806 187.5H1807M1808 183.5H1809" stroke="#50c850" stroke-width="1" fill="none"/>
<path d="M1811.5 175V221M1810 183.5H1811M1812 210.5H1813" stroke="#50c850" stroke-width="1" fill="none"/>
<path d="M1815.5 209V230M1814 210.5H1815M1816 222.5H1817" stroke="#50c850" stroke-width="1" fill="none"/>
<path d="M1819.5 214V236M1818 222.5H1819M1820 230.5H1821" stroke="#50c850" stroke-width="1" fill="none"/>
<path d="M1823.5 220V249M1822 230.5H1823M1824 237.5H1825" stroke="#50c850" stroke-width="1" fill="none"/>
<path d="M1827.5 224V248M1826 237.5H1827M1828 230.5H1829" stroke="#50c850" stroke-width="1" fill="none"/>
<path d="M1831.5 223V235M1830 230.5H1831M1832 225.5H1833" stroke="#50c850" stroke-width="1" fill="none"/>
<path d="M1835.5 210V236M1834 225.5H1835M1836 220.5H1837" stroke="#50c850" stroke-width="1" fill="none"/>
<path d="M1839.5 216V222M1838 220.5H1839M1840 218.5H1841" stroke="#50c850" stroke-width="1" fill="none"/>
<path d="M1843.5 216V225M1842 218.5H1843M1844 219.5H1845" stroke="#50c850" stroke-width="1" fill="none"/>
<path d="M1847.5 215V225M1846 219.5H1847M1848 224.5H1849" stroke="#50c850" stroke-width="1" fill="none"/>
<path d="M1851.5 220V227M1850 224.5H1851M1852 221.5H1853" stroke="#50c850" stroke-width="1" fill="none"/>
<path d="M1855.5 203V224M1854 221.5H1855M1856 209.5H1857" stroke="#50c850" stroke-width="1" fill="none"/>
<path d="M1859.5 204V222M1858 209.5H1859M1860 212.5H1861" stroke="#50c850" stroke-width="1" fill="none"/>
<path d="M1863.5 200V240M1862 212.5H1863M1864 231.5H1865" stroke="#50c850" stroke-width="1" fill="none"/>
<path d="M1867.5 219V237M1866 231.5H1867M1868 226.5H1869" stroke="#50c850" stroke-width="1" fill="none"/>
<path d="M1871.5 211V239M1870 226.5H1871M1872 220.5H1873" stroke="#50c850" stroke-width="1" fill="none"/>
<path d="M1875.5 211V231M1874 220.5H1875M1876 227.5H1877" stroke="#50c850" stroke-width="1" fill="none"/>
<path d="M1879.5 222V236M1878 227.5H1879M1880 233.5H1881" stroke="#50c850" stroke-width="1" fill="none"/><rect x="1105.5" y="164.5" width="900" height="279" fill="none" stroke="#fff"/><line x1="1105.5" y1="443" x2="1105.5" y2="447" stroke="#fff"/><line x1="1201.5" y1="443" x2="1201.5" y2="447" stroke="#fff"/><line x1="1297.5" y1="443" x2="1297.5" y2="447" stroke="#fff"/><line x1="1393.5" y1="443" x2="1393.5" y2="447" stroke="#fff"/><line x1="1489.5" y1="443" x2="1489.5" y2="447" stroke="#fff"/><line x1="1585.5" y1="443" x2="1585.5" y2="447" stroke="#fff"/><line x1="1681.5" y1="443" x2="1681.5" y2="447" stroke="#fff"/><line x1="1777.5" y1="443" x2="1777.5" y2="447" stroke="#fff"/><line x1="1873.5" y1="443" x2="1873.5" y2="447" stroke="#fff"/></svg>
<svg style="position:absolute;left:1109px;top:172px" width="11" height="8"><path d="M0 7 L5.5 1 L11 7 Z" fill="#fff"/></svg><div class="t" style="left:1124px;top:167px;font-size:12.8px;letter-spacing:-1.1px;color:#fff">GBPUSD,H4</div><div class="t" style="left:1196px;top:167px;font-size:12.8px;color:#fff;white-space:pre">1.35837 1.36033 1.35636 1.35972</div>
<div style="position:absolute;left:1110px;top:188px;width:58px;height:25px;background:linear-gradient(#f04646,#e42e2e 60%,#da2626)"></div>
<div style="position:absolute;left:1114px;top:213px;width:52px;height:1px;background:#f06a6a"></div>
<div class="t" style="left:1123px;top:192px;font-size:14.5px;letter-spacing:-1.2px;color:#ffd8d0">SELL</div>
<div style="position:absolute;left:1301px;top:188px;width:58px;height:25px;background:linear-gradient(#f04646,#e42e2e 60%,#da2626)"></div>
<div style="position:absolute;left:1305px;top:213px;width:52px;height:1px;background:#f06a6a"></div>
<div class="t" style="left:1316px;top:192px;font-size:14.5px;letter-spacing:-1px;color:#ffd8d0">BUY</div>
<div style="position:absolute;left:1171px;top:188px;width:127px;height:24px;background:#fff"></div>
<div style="position:absolute;left:1171px;top:188px;width:24px;height:24px;background:linear-gradient(90deg,#e6e6e6,#d8d8d8);border-right:1px solid #c8c8c8"></div>
<div style="position:absolute;left:1273px;top:188px;width:25px;height:24px;background:linear-gradient(90deg,#e6e6e6,#d8d8d8);border-left:1px solid #c8c8c8"></div>
<svg style="position:absolute;left:1178px;top:197px" width="10" height="6"><path d="M0 0 H10 L5 5.5 Z" fill="#111"/></svg>
<svg style="position:absolute;left:1280px;top:197px" width="10" height="6"><path d="M0 6 H10 L5 0.5 Z" fill="#111"/></svg>
<div class="t" style="left:1238px;top:191px;font-size:15px;color:#222">1.00</div>
<div style="position:absolute;left:1110px;top:214px;width:123px;height:49px;background:linear-gradient(#e02626,#e62e2e 25%,#d01a1a 70%,#b40c0c)"></div>
<div class="t" style="left:1058px;width:100px;text-align:right;top:237px;font-size:15px;font-weight:bold;color:#fff">1.35</div>
<div class="t" style="left:1163px;top:218px;font-size:37px;color:#fff;letter-spacing:-1px">96</div>
<div class="t" style="left:1207px;top:221px;font-size:14px;font-weight:bold;color:#fff">5</div>
<div style="position:absolute;left:1236px;top:214px;width:123px;height:49px;background:linear-gradient(#e02626,#e62e2e 25%,#d01a1a 70%,#b40c0c)"></div>
<div class="t" style="left:1184px;width:100px;text-align:right;top:237px;font-size:15px;font-weight:bold;color:#fff">1.36</div>
<div class="t" style="left:1289px;top:218px;font-size:37px;color:#fff;letter-spacing:-1px">00</div>
<div class="t" style="left:1333px;top:221px;font-size:14px;font-weight:bold;color:#fff">6</div>
<div class="t" style="left:1105px;top:449px;font-size:12.5px;color:#fff;-webkit-text-stroke:0.25px #fff">20 Nov 2020</div>
<div class="t" style="left:1201px;top:449px;font-size:12.5px;color:#fff;-webkit-text-stroke:0.25px #fff">26 Nov 08:00</div>
<div class="t" style="left:1297px;top:449px;font-size:12.5px;color:#fff;-webkit-text-stroke:0.25px #fff">2 Dec 08:00</div>
<div class="t" style="left:1393px;top:449px;font-size:12.5px;color:#fff;-webkit-text-stroke:0.25px #fff">8 Dec 08:00</div>
<div class="t" style="left:1489px;top:449px;font-size:12.5px;color:#fff;-webkit-text-stroke:0.25px #fff">14 Dec 08:00</div>
<div class="t" style="left:1585px;top:449px;font-size:12.5px;color:#fff;-webkit-text-stroke:0.25px #fff">18 Dec 08:00</div>
<div class="t" style="left:1681px;top:449px;font-size:12.5px;color:#fff;-webkit-text-stroke:0.25px #fff">24 Dec 08:00</div>
<div class="t" style="left:1777px;top:449px;font-size:12.5px;color:#fff;-webkit-text-stroke:0.25px #fff">31 Dec 04:00</div>
<div class="t" style="left:1873px;top:449px;font-size:12.5px;color:#fff;-webkit-text-stroke:0.25px #fff">7 Jan</div>
<div style="position:absolute;left:228px;top:480px;width:863px;height:357px;background:linear-gradient(#bdcbdb 0px,#c5d2df 20px,#cfdbe7 30px,#d8e2ec 37px,#dde6ef 45px,#dde6ef);border-top:1px solid #e8eef4;border-left:1px solid #eef3f7;box-sizing:border-box"></div>
<div style="position:absolute;left:228px;top:827px;width:863px;height:10px;background:linear-gradient(#e0e8f0,#cdd8e4)"></div>
<svg style="position:absolute;left:240px;top:495px" width="19" height="18"><rect x="0.5" y="0.5" width="12" height="10" fill="#f4f9ff" stroke="#4f86c8"/><rect x="0.5" y="0.5" width="12" height="2.5" fill="#4f86c8"/><rect x="5.5" y="6.5" width="12" height="10" fill="#f4f9ff" stroke="#4f86c8"/><rect x="5.5" y="6.5" width="12" height="2.5" fill="#4f86c8"/><path d="M7.5 14.5 q1.5-5 3 0 t3 0 t3 -2" fill="none" stroke="#333" stroke-width="0.9"/><path d="M2 7 h3 M3 5 v4" stroke="#4f86c8" stroke-width="0.9"/></svg>
<div class="t" style="left:263px;top:495px;font-size:14px;letter-spacing:-0.6px;color:#a4adb6">USDCHF,H4</div>
<div style="position:absolute;left:952px;top:491px;width:39px;height:21px;border:1px solid #a3b2c3;border-radius:2px;background:linear-gradient(#d3dde8,#c9d5e1)"></div>
<div style="position:absolute;left:964px;top:501px;width:15px;height:4px;background:#fff;border:1px solid #5a6570;border-radius:1px"></div>
<div style="position:absolute;left:996px;top:491px;width:39px;height:21px;border:1px solid #a3b2c3;border-radius:2px;background:linear-gradient(#d3dde8,#c9d5e1)"></div>
<div style="position:absolute;left:1009px;top:495px;width:10px;height:10px;border:2px solid #5a6570;background:#e4eaf0;box-shadow:inset 0 0 0 1px #fff"></div>
<div style="position:absolute;left:1040px;top:491px;width:39px;height:21px;border:1px solid #a3b2c3;border-radius:2px;background:linear-gradient(#d3dde8,#c9d5e1)"></div>
<svg style="position:absolute;left:1051px;top:494px" width="18" height="16"><path d="M3 2 L15 14 M15 2 L3 14" stroke="#5a6570" stroke-width="5" stroke-linecap="round"/><path d="M3 2 L15 14 M15 2 L3 14" stroke="#fff" stroke-width="2.6" stroke-linecap="round"/></svg>
<div style="position:absolute;left:237px;top:517px;width:845px;height:309px;background:#000;border-top:1px solid #6a737c;border-left:1px solid #6a737c;box-sizing:border-box"></div>
<svg style="position:absolute;left:238px;top:518px" width="843" height="307" viewBox="238 518 843 307"><line x1="290.5" y1="522" x2="290.5" y2="707" stroke="#b4b4b4" stroke-width="1" stroke-dasharray="3 3"/>
<line x1="338.5" y1="522" x2="338.5" y2="707" stroke="#b4b4b4" stroke-width="1" stroke-dasharray="3 3"/>
<line x1="386.5" y1="522" x2="386.5" y2="707" stroke="#b4b4b4" stroke-width="1" stroke-dasharray="3 3"/>
<line x1="434.5" y1="522" x2="434.5" y2="707" stroke="#b4b4b4" stroke-width="1" stroke-dasharray="3 3"/>
<line x1="482.5" y1="522" x2="482.5" y2="707" stroke="#b4b4b4" stroke-width="1" stroke-dasharray="3 3"/>
<line x1="530.5" y1="522" x2="530.5" y2="707" stroke="#b4b4b4" stroke-width="1" stroke-dasharray="3 3"/>
<line x1="578.5" y1="522" x2="578.5" y2="707" stroke="#b4b4b4" stroke-width="1" stroke-dasharray="3 3"/>
<line x1="626.5" y1="522" x2="626.5" y2="707" stroke="#b4b4b4" stroke-width="1" stroke-dasharray="3 3"/>
<line x1="674.5" y1="522" x2="674.5" y2="707" stroke="#b4b4b4" stroke-width="1" stroke-dasharray="3 3"/>
<line x1="722.5" y1="522" x2="722.5" y2="707" stroke="#b4b4b4" stroke-width="1" stroke-dasharray="3 3"/>
<line x1="770.5" y1="522" x2="770.5" y2="707" stroke="#b4b4b4" stroke-width="1" stroke-dasharray="3 3"/>
<line x1="818.5" y1="522" x2="818.5" y2="707" stroke="#b4b4b4" stroke-width="1" stroke-dasharray="3 3"/>
<line x1="866.5" y1="522" x2="866.5" y2="707" stroke="#b4b4b4" stroke-width="1" stroke-dasharray="3 3"/>
<line x1="914.5" y1="522" x2="914.5" y2="707" stroke="#b4b4b4" stroke-width="1" stroke-dasharray="3 3"/>
<line x1="962.5" y1="522" x2="962.5" y2="707" stroke="#b4b4b4" stroke-width="1" stroke-dasharray="3 3"/>
<line x1="1010.5" y1="522" x2="1010.5" y2="707" stroke="#b4b4b4" stroke-width="1" stroke-dasharray="3 3"/>
<line x1="242" y1="541.5" x2="1017" y2="541.5" stroke="#b4b4b4" stroke-width="1" stroke-dasharray="3 3"/>
<line x1="242" y1="590.5" x2="1017" y2="590.5" stroke="#b4b4b4" stroke-width="1" stroke-dasharray="3 3"/>
<line x1="242" y1="640.5" x2="1017" y2="640.5" stroke="#b4b4b4" stroke-width="1" stroke-dasharray="3 3"/>
<line x1="242" y1="690.5" x2="1017" y2="690.5" stroke="#b4b4b4" stroke-width="1" stroke-dasharray="3 3"/><line x1="242" y1="733.5" x2="1017" y2="733.5" stroke="#b4b4b4" stroke-width="1" stroke-dasharray="3 3"/><line x1="290.5" y1="710" x2="290.5" y2="800" stroke="#b4b4b4" stroke-width="1" stroke-dasharray="3 3"/>
<line x1="338.5" y1="710" x2="338.5" y2="800" stroke="#b4b4b4" stroke-width="1" stroke-dasharray="3 3"/>
<line x1="386.5" y1="710" x2="386.5" y2="800" stroke="#b4b4b4" stroke-width="1" stroke-dasharray="3 3"/>
<line x1="434.5" y1="710" x2="434.5" y2="800" stroke="#b4b4b4" stroke-width="1" stroke-dasharray="3 3"/>
<line x1="482.5" y1="710" x2="482.5" y2="800" stroke="#b4b4b4" stroke-width="1" stroke-dasharray="3 3"/>
<line x1="530.5" y1="710" x2="530.5" y2="800" stroke="#b4b4b4" stroke-width="1" stroke-dasharray="3 3"/>
<line x1="578.5" y1="710" x2="578.5" y2="800" stroke="#b4b4b4" stroke-width="1" stroke-dasharray="3 3"/>
<line x1="626.5" y1="710" x2="626.5" y2="800" stroke="#b4b4b4" stroke-width="1" stroke-dasharray="3 3"/>
<line x1="674.5" y1="710" x2="674.5" y2="800" stroke="#b4b4b4" stroke-width="1" stroke-dasharray="3 3"/>
<line x1="722.5" y1="710" x2="722.5" y2="800" stroke="#b4b4b4" stroke-width="1" stroke-dasharray="3 3"/>
<line x1="770.5" y1="710" x2="770.5" y2="800" stroke="#b4b4b4" stroke-width="1" stroke-dasharray="3 3"/>
<line x1="818.5" y1="710" x2="818.5" y2="800" stroke="#b4b4b4" stroke-width="1" stroke-dasharray="3 3"/>
<line x1="866.5" y1="710" x2="866.5" y2="800" stroke="#b4b4b4" stroke-width="1" stroke-dasharray="3 3"/>
<line x1="914.5" y1="710" x2="914.5" y2="800" stroke="#b4b4b4" stroke-width="1" stroke-dasharray="3 3"/>
<line x1="962.5" y1="710" x2="962.5" y2="800" stroke="#b4b4b4" stroke-width="1" stroke-dasharray="3 3"/>
<line x1="1010.5" y1="710" x2="1010.5" y2="800" stroke="#b4b4b4" stroke-width="1" stroke-dasharray="3 3"/><line x1="242" y1="682.5" x2="1017" y2="682.5" stroke="#8ea0a8"/><path d="M242.5 559V570M241 566.5H242M243 564.5H244" stroke="#50c850" stroke-width="1" fill="none"/>
<path d="M246.5 559V569M245 564.5H246M247 567.5H248" stroke="#50c850" stroke-width="1" fill="none"/>
<path d="M250.5 556V570M249 567.5H250M251 563.5H252" stroke="#50c850" stroke-width="1" fill="none"/>
<path d="M254.5 555V569M253 563.5H254M255 565.5H256" stroke="#50c850" stroke-width="1" fill="none"/>
<path d="M258.5 560V575M257 565.5H258M259 570.5H260" stroke="#50c850" stroke-width="1" fill="none"/>
<path d="M262.5 559V577M261 570.5H262M263 565.5H264" stroke="#50c850" stroke-width="1" fill="none"/>
<path d="M266.5 558V574M265 565.5H266M267 568.5H268" stroke="#50c850" stroke-width="1" fill="none"/>
<path d="M270.5 558V573M269 568.5H270M271 564.5H272" stroke="#50c850" stroke-width="1" fill="none"/>
<path d="M274.5 563V574M273 564.5H274M275 567.5H276" stroke="#50c850" stroke-width="1" fill="none"/>
<path d="M278.5 561V575M277 567.5H278M279 568.5H280" stroke="#50c850" stroke-width="1" fill="none"/>
<path d="M282.5 561V574M281 568.5H282M283 570.5H284" stroke="#50c850" stroke-width="1" fill="none"/>
<path d="M286.5 566V579M285 570.5H286M287 571.5H288" stroke="#50c850" stroke-width="1" fill="none"/>
<path d="M290.5 570V574M289 571.5H290M291 572.5H292" stroke="#50c850" stroke-width="1" fill="none"/>
<path d="M294.5 560V576M293 572.5H294M295 567.5H296" stroke="#50c850" stroke-width="1" fill="none"/>
<path d="M298.5 564V575M297 567.5H298M299 571.5H300" stroke="#50c850" stroke-width="1" fill="none"/>
<path d="M302.5 566V576M301 571.5H302M303 570.5H304" stroke="#50c850" stroke-width="1" fill="none"/>
<path d="M306.5 562V578M305 570.5H306M307 572.5H308" stroke="#50c850" stroke-width="1" fill="none"/>
<path d="M310.5 565V584M309 572.5H310M311 576.5H312" stroke="#50c850" stroke-width="1" fill="none"/>
<path d="M314.5 573V583M313 576.5H314M315 576.5H316" stroke="#50c850" stroke-width="1" fill="none"/>
<path d="M318.5 568V584M317 576.5H318M319 579.5H320" stroke="#50c850" stroke-width="1" fill="none"/>
<path d="M322.5 576V586M321 579.5H322M323 578.5H324" stroke="#50c850" stroke-width="1" fill="none"/>
<path d="M326.5 575V580M325 578.5H326M327 578.5H328" stroke="#50c850" stroke-width="1" fill="none"/>
<path d="M330.5 570V583M329 578.5H330M331 582.5H332" stroke="#50c850" stroke-width="1" fill="none"/>
<path d="M334.5 578V585M333 582.5H334M335 583.5H336" stroke="#50c850" stroke-width="1" fill="none"/>
<path d="M338.5 573V590M337 583.5H338M339 580.5H340" stroke="#50c850" stroke-width="1" fill="none"/>
<path d="M342.5 574V581M341 580.5H342M343 579.5H344" stroke="#50c850" stroke-width="1" fill="none"/>
<path d="M346.5 576V593M345 579.5H346M347 586.5H348" stroke="#50c850" stroke-width="1" fill="none"/>
<path d="M350.5 581V597M349 586.5H350M351 589.5H352" stroke="#50c850" stroke-width="1" fill="none"/>
<path d="M354.5 583V594M353 589.5H354M355 585.5H356" stroke="#50c850" stroke-width="1" fill="none"/>
<path d="M358.5 581V589M357 585.5H358M359 584.5H360" stroke="#50c850" stroke-width="1" fill="none"/>
<path d="M362.5 582V591M361 584.5H362M363 589.5H364" stroke="#50c850" stroke-width="1" fill="none"/>
<path d="M366.5 586V600M365 589.5H366M367 593.5H368" stroke="#50c850" stroke-width="1" fill="none"/>
<path d="M370.5 589V598M369 593.5H370M371 594.5H372" stroke="#50c850" stroke-width="1" fill="none"/>
<path d="M374.5 587V599M373 594.5H374M375 592.5H376" stroke="#50c850" stroke-width="1" fill="none"/>
<path d="M378.5 587V601M377 592.5H378M379 594.5H380" stroke="#50c850" stroke-width="1" fill="none"/>
<path d="M382.5 590V601M381 594.5H382M383 595.5H384" stroke="#50c850" stroke-width="1" fill="none"/>
<path d="M386.5 591V603M385 595.5H386M387 594.5H388" stroke="#50c850" stroke-width="1" fill="none"/>
<path d="M390.5 589V598M389 594.5H390M391 597.5H392" stroke="#50c850" stroke-width="1" fill="none"/>
<path d="M394.5 592V599M393 597.5H394M395 598.5H396" stroke="#50c850" stroke-width="1" fill="none"/>
<path d="M398.5 592V602M397 598.5H398M399 600.5H400" stroke="#50c850" stroke-width="1" fill="none"/>
<path d="M402.5 596V607M401 600.5H402M403 601.5H404" stroke="#50c850" stroke-width="1" fill="none"/>
<path d="M406.5 594V608M405 601.5H406M407 600.5H408" stroke="#50c850" stroke-width="1" fill="none"/>
<path d="M410.5 597V606M409 600.5H410M411 598.5H412" stroke="#50c850" stroke-width="1" fill="none"/>
<path d="M414.5 595V611M413 598.5H414M415 607.5H416" stroke="#50c850" stroke-width="1" fill="none"/>
<path d="M418.5 601V610M417 607.5H418M419 604.5H420" stroke="#50c850" stroke-width="1" fill="none"/>
<path d="M422.5 599V610M421 604.5H422M423 603.5H424" stroke="#50c850" stroke-width="1" fill="none"/>
<path d="M426.5 599V610M425 603.5H426M427 604.5H428" stroke="#50c850" stroke-width="1" fill="none"/>
<path d="M430.5 597V610M429 604.5H430M431 602.5H432" stroke="#50c850" stroke-width="1" fill="none"/>
<path d="M434.5 600V612M433 602.5H434M435 605.5H436" stroke="#50c850" stroke-width="1" fill="none"/>
<path d="M438.5 603V610M437 605.5H438M439 606.5H440" stroke="#50c850" stroke-width="1" fill="none"/>
<path d="M442.5 604V613M441 606.5H442M443 610.5H444" stroke="#50c850" stroke-width="1" fill="none"/>
<path d="M446.5 601V614M445 610.5H446M447 608.5H448" stroke="#50c850" stroke-width="1" fill="none"/>
<path d="M450.5 606V616M449 608.5H450M451 613.5H452" stroke="#50c850" stroke-width="1" fill="none"/>
<path d="M454.5 605V617M453 613.5H454M455 612.5H456" stroke="#50c850" stroke-width="1" fill="none"/>
<path d="M458.5 608V617M457 612.5H458M459 609.5H460" stroke="#50c850" stroke-width="1" fill="none"/>
<path d="M462.5 603V617M461 609.5H462M463 610.5H464" stroke="#50c850" stroke-width="1" fill="none"/>
<path d="M466.5 607V617M465 610.5H466M467 611.5H468" stroke="#50c850" stroke-width="1" fill="none"/>
<path d="M470.5 604V619M469 611.5H470M471 615.5H472" stroke="#50c850" stroke-width="1" fill="none"/>
<path d="M474.5 609V622M473 615.5H474M475 612.5H476" stroke="#50c850" stroke-width="1" fill="none"/>
<path d="M478.5 608V618M477 612.5H478M479 614.5H480" stroke="#50c850" stroke-width="1" fill="none"/>
<path d="M482.5 610V623M481 614.5H482M483 616.5H484" stroke="#50c850" stroke-width="1" fill="none"/>
<path d="M486.5 613V623M485 616.5H486M487 614.5H488" stroke="#50c850" stroke-width="1" fill="none"/>
<path d="M490.5 607V625M489 614.5H490M491 621.5H492" stroke="#50c850" stroke-width="1" fill="none"/>
<path d="M494.5 614V625M493 621.5H494M495 622.5H496" stroke="#50c850" stroke-width="1" fill="none"/>
<path d="M498.5 615V628M497 622.5H498M499 622.5H500" stroke="#50c850" stroke-width="1" fill="none"/>
<path d="M502.5 618V625M501 622.5H502M503 621.5H504" stroke="#50c850" stroke-width="1" fill="none"/>
<path d="M506.5 618V626M505 621.5H506M507 619.5H508" stroke="#50c850" stroke-width="1" fill="none"/>
<path d="M510.5 612V622M509 619.5H510M511 620.5H512" stroke="#50c850" stroke-width="1" fill="none"/>
<path d="M514.5 614V633M513 620.5H514M515 626.5H516" stroke="#50c850" stroke-width="1" fill="none"/>
<path d="M518.5 619V632M517 626.5H518M519 627.5H520" stroke="#50c850" stroke-width="1" fill="none"/>
<path d="M522.5 614V629M521 627.5H522M523 621.5H524" stroke="#50c850" stroke-width="1" fill="none"/>
<path d="M526.5 615V628M525 621.5H526M527 624.5H528" stroke="#50c850" stroke-width="1" fill="none"/>
<path d="M530.5 616V631M529 624.5H530M531 625.5H532" stroke="#50c850" stroke-width="1" fill="none"/>
<path d="M534.5 623V633M533 625.5H534M535 626.5H536" stroke="#50c850" stroke-width="1" fill="none"/>
<path d="M538.5 619V631M537 626.5H538M539 627.5H540" stroke="#50c850" stroke-width="1" fill="none"/>
<path d="M542.5 621V634M541 627.5H542M543 626.5H544" stroke="#50c850" stroke-width="1" fill="none"/>
<path d="M546.5 619V634M545 626.5H546M547 627.5H548" stroke="#50c850" stroke-width="1" fill="none"/>
<path d="M550.5 620V634M549 627.5H550M551 632.5H552" stroke="#50c850" stroke-width="1" fill="none"/>
<path d="M554.5 625V634M553 632.5H554M555 632.5H556" stroke="#50c850" stroke-width="1" fill="none"/>
<path d="M558.5 627V637M557 632.5H558M559 630.5H560" stroke="#50c850" stroke-width="1" fill="none"/>
<path d="M562.5 625V638M561 630.5H562M563 632.5H564" stroke="#50c850" stroke-width="1" fill="none"/>
<path d="M566.5 628V634M565 632.5H566M567 629.5H568" stroke="#50c850" stroke-width="1" fill="none"/>
<path d="M570.5 628V639M569 629.5H570M571 631.5H572" stroke="#50c850" stroke-width="1" fill="none"/>
<path d="M574.5 629V642M573 631.5H574M575 638.5H576" stroke="#50c850" stroke-width="1" fill="none"/>
<path d="M578.5 631V641M577 638.5H578M579 634.5H580" stroke="#50c850" stroke-width="1" fill="none"/>
<path d="M582.5 629V641M581 634.5H582M583 638.5H584" stroke="#50c850" stroke-width="1" fill="none"/>
<path d="M586.5 631V639M585 638.5H586M587 635.5H588" stroke="#50c850" stroke-width="1" fill="none"/>
<path d="M590.5 629V642M589 635.5H590M591 638.5H592" stroke="#50c850" stroke-width="1" fill="none"/>
<path d="M594.5 633V642M593 638.5H594M595 635.5H596" stroke="#50c850" stroke-width="1" fill="none"/>
<path d="M598.5 629V644M597 635.5H598M599 640.5H600" stroke="#50c850" stroke-width="1" fill="none"/>
<path d="M602.5 635V647M601 640.5H602M603 643.5H604" stroke="#50c850" stroke-width="1" fill="none"/>
<path d="M606.5 635V649M605 643.5H606M607 640.5H608" stroke="#50c850" stroke-width="1" fill="none"/>
<path d="M610.5 634V645M609 640.5H610M611 640.5H612" stroke="#50c850" stroke-width="1" fill="none"/>
<path d="M614.5 635V646M613 640.5H614M615 639.5H616" stroke="#50c850" stroke-width="1" fill="none"/>
<path d="M618.5 634V643M617 639.5H618M619 638.5H620" stroke="#50c850" stroke-width="1" fill="none"/>
<path d="M622.5 631V649M621 638.5H622M623 645.5H624" stroke="#50c850" stroke-width="1" fill="none"/>
<path d="M626.5 639V649M625 645.5H626M627 646.5H628" stroke="#50c850" stroke-width="1" fill="none"/>
<path d="M630.5 641V652M629 646.5H630M631 643.5H632" stroke="#50c850" stroke-width="1" fill="none"/>
<path d="M634.5 636V651M633 643.5H634M635 645.5H636" stroke="#50c850" stroke-width="1" fill="none"/>
<path d="M638.5 639V650M637 645.5H638M639 645.5H640" stroke="#50c850" stroke-width="1" fill="none"/>
<path d="M642.5 636V646M641 645.5H642M643 641.5H644" stroke="#50c850" stroke-width="1" fill="none"/>
<path d="M646.5 635V643M645 641.5H646M647 642.5H648" stroke="#50c850" stroke-width="1" fill="none"/>
<path d="M650.5 640V649M649 642.5H650M651 642.5H652" stroke="#50c850" stroke-width="1" fill="none"/>
<path d="M654.5 641V650M653 642.5H654M655 643.5H656" stroke="#50c850" stroke-width="1" fill="none"/>
<path d="M658.5 636V649M657 643.5H658M659 643.5H660" stroke="#50c850" stroke-width="1" fill="none"/>
<path d="M662.5 635V654M661 643.5H662M663 649.5H664" stroke="#50c850" stroke-width="1" fill="none"/>
<path d="M666.5 648V655M665 649.5H666M667 649.5H668" stroke="#50c850" stroke-width="1" fill="none"/>
<path d="M670.5 641V651M669 649.5H670M671 647.5H672" stroke="#50c850" stroke-width="1" fill="none"/>
<path d="M674.5 640V651M673 647.5H674M675 649.5H676" stroke="#50c850" stroke-width="1" fill="none"/>
<path d="M678.5 641V656M677 649.5H678M679 646.5H680" stroke="#50c850" stroke-width="1" fill="none"/>
<path d="M682.5 644V649M681 646.5H682M683 646.5H684" stroke="#50c850" stroke-width="1" fill="none"/>
<path d="M686.5 640V653M685 646.5H686M687 650.5H688" stroke="#50c850" stroke-width="1" fill="none"/>
<path d="M690.5 644V653M689 650.5H690M691 648.5H692" stroke="#50c850" stroke-width="1" fill="none"/>
<path d="M694.5 646V653M693 648.5H694M695 649.5H696" stroke="#50c850" stroke-width="1" fill="none"/>
<path d="M698.5 645V660M697 649.5H698M699 654.5H700" stroke="#50c850" stroke-width="1" fill="none"/>
<path d="M702.5 642V660M701 654.5H702M703 647.5H704" stroke="#50c850" stroke-width="1" fill="none"/>
<path d="M706.5 643V656M705 647.5H706M707 652.5H708" stroke="#50c850" stroke-width="1" fill="none"/>
<path d="M710.5 645V654M709 652.5H710M711 652.5H712" stroke="#50c850" stroke-width="1" fill="none"/>
<path d="M714.5 642V660M713 652.5H714M715 648.5H716" stroke="#50c850" stroke-width="1" fill="none"/>
<path d="M718.5 644V658M717 648.5H718M719 652.5H720" stroke="#50c850" stroke-width="1" fill="none"/>
<path d="M722.5 647V654M721 652.5H722M723 650.5H724" stroke="#50c850" stroke-width="1" fill="none"/>
<path d="M726.5 646V656M725 650.5H726M727 653.5H728" stroke="#50c850" stroke-width="1" fill="none"/>
<path d="M730.5 646V658M729 653.5H730M731 655.5H732" stroke="#50c850" stroke-width="1" fill="none"/>
<path d="M734.5 651V662M733 655.5H734M735 655.5H736" stroke="#50c850" stroke-width="1" fill="none"/>
<path d="M738.5 652V658M737 655.5H738M739 654.5H740" stroke="#50c850" stroke-width="1" fill="none"/>
<path d="M742.5 646V658M741 654.5H742M743 650.5H744" stroke="#50c850" stroke-width="1" fill="none"/>
<path d="M746.5 647V655M745 650.5H746M747 652.5H748" stroke="#50c850" stroke-width="1" fill="none"/>
<path d="M750.5 650V665M749 652.5H750M751 657.5H752" stroke="#50c850" stroke-width="1" fill="none"/>
<path d="M754.5 650V661M753 657.5H754M755 655.5H756" stroke="#50c850" stroke-width="1" fill="none"/>
<path d="M758.5 648V663M757 655.5H758M759 658.5H760" stroke="#50c850" stroke-width="1" fill="none"/>
<path d="M762.5 650V665M761 658.5H762M763 656.5H764" stroke="#50c850" stroke-width="1" fill="none"/>
<path d="M766.5 650V664M765 656.5H766M767 656.5H768" stroke="#50c850" stroke-width="1" fill="none"/>
<path d="M770.5 653V659M769 656.5H770M771 657.5H772" stroke="#50c850" stroke-width="1" fill="none"/>
<path d="M774.5 651V667M773 657.5H774M775 659.5H776" stroke="#50c850" stroke-width="1" fill="none"/>
<path d="M778.5 656V663M777 659.5H778M779 661.5H780" stroke="#50c850" stroke-width="1" fill="none"/>
<path d="M782.5 654V667M781 661.5H782M783 656.5H784" stroke="#50c850" stroke-width="1" fill="none"/>
<path d="M786.5 649V664M785 656.5H786M787 661.5H788" stroke="#50c850" stroke-width="1" fill="none"/>
<path d="M790.5 658V666M789 661.5H790M791 662.5H792" stroke="#50c850" stroke-width="1" fill="none"/>
<path d="M794.5 660V664M793 662.5H794M795 661.5H796" stroke="#50c850" stroke-width="1" fill="none"/>
<path d="M798.5 658V666M797 661.5H798M799 662.5H800" stroke="#50c850" stroke-width="1" fill="none"/>
<path d="M802.5 655V664M801 662.5H802M803 661.5H804" stroke="#50c850" stroke-width="1" fill="none"/>
<path d="M806.5 656V665M805 661.5H806M807 660.5H808" stroke="#50c850" stroke-width="1" fill="none"/>
<path d="M810.5 654V667M809 660.5H810M811 660.5H812" stroke="#50c850" stroke-width="1" fill="none"/>
<path d="M814.5 655V664M813 660.5H814M815 662.5H816" stroke="#50c850" stroke-width="1" fill="none"/>
<path d="M818.5 656V664M817 662.5H818M819 662.5H820" stroke="#50c850" stroke-width="1" fill="none"/>
<path d="M822.5 654V669M821 662.5H822M823 667.5H824" stroke="#50c850" stroke-width="1" fill="none"/>
<path d="M826.5 664V675M825 667.5H826M827 668.5H828" stroke="#50c850" stroke-width="1" fill="none"/>
<path d="M830.5 665V674M829 668.5H830M831 668.5H832" stroke="#50c850" stroke-width="1" fill="none"/>
<path d="M834.5 661V671M833 668.5H834M835 668.5H836" stroke="#50c850" stroke-width="1" fill="none"/>
<path d="M838.5 660V675M837 668.5H838M839 669.5H840" stroke="#50c850" stroke-width="1" fill="none"/>
<path d="M842.5 666V674M841 669.5H842M843 668.5H844" stroke="#50c850" stroke-width="1" fill="none"/>
<path d="M846.5 661V674M845 668.5H846M847 667.5H848" stroke="#50c850" stroke-width="1" fill="none"/>
<path d="M850.5 665V675M849 667.5H850M851 670.5H852" stroke="#50c850" stroke-width="1" fill="none"/>
<path d="M854.5 668V678M853 670.5H854M855 671.5H856" stroke="#50c850" stroke-width="1" fill="none"/>
<path d="M858.5 669V680M857 671.5H858M859 672.5H860" stroke="#50c850" stroke-width="1" fill="none"/>
<path d="M862.5 665V678M861 672.5H862M863 669.5H864" stroke="#50c850" stroke-width="1" fill="none"/>
<path d="M866.5 664V679M865 669.5H866M867 673.5H868" stroke="#50c850" stroke-width="1" fill="none"/>
<path d="M870.5 670V675M869 673.5H870M871 673.5H872" stroke="#50c850" stroke-width="1" fill="none"/>
<path d="M874.5 664V679M873 673.5H874M875 670.5H876" stroke="#50c850" stroke-width="1" fill="none"/>
<path d="M878.5 664V678M877 670.5H878M879 675.5H880" stroke="#50c850" stroke-width="1" fill="none"/>
<path d="M882.5 670V682M881 675.5H882M883 674.5H884" stroke="#50c850" stroke-width="1" fill="none"/>
<path d="M886.5 668V676M885 674.5H886M887 672.5H888" stroke="#50c850" stroke-width="1" fill="none"/>
<path d="M890.5 669V682M889 672.5H890M891 679.5H892" stroke="#50c850" stroke-width="1" fill="none"/>
<path d="M894.5 672V685M893 679.5H894M895 677.5H896" stroke="#50c850" stroke-width="1" fill="none"/>
<path d="M898.5 670V679M897 677.5H898M899 677.5H900" stroke="#50c850" stroke-width="1" fill="none"/>
<path d="M902.5 676V679M901 677.5H902M903 677.5H904" stroke="#50c850" stroke-width="1" fill="none"/>
<path d="M906.5 671V684M905 677.5H906M907 682.5H908" stroke="#50c850" stroke-width="1" fill="none"/>
<path d="M910.5 674V688M909 682.5H910M911 678.5H912" stroke="#50c850" stroke-width="1" fill="none"/>
<path d="M914.5 672V689M913 678.5H914M915 684.5H916" stroke="#50c850" stroke-width="1" fill="none"/>
<path d="M918.5 676V686M917 684.5H918M919 679.5H920" stroke="#50c850" stroke-width="1" fill="none"/>
<path d="M922.5 674V686M921 679.5H922M923 683.5H924" stroke="#50c850" stroke-width="1" fill="none"/>
<path d="M926.5 675V684M925 683.5H926M927 682.5H928" stroke="#50c850" stroke-width="1" fill="none"/>
<path d="M930.5 674V694M929 682.5H930M931 687.5H932" stroke="#50c850" stroke-width="1" fill="none"/>
<path d="M934.5 679V692M933 687.5H934M935 684.5H936" stroke="#50c850" stroke-width="1" fill="none"/>
<path d="M938.5 676V693M937 684.5H938M939 687.5H940" stroke="#50c850" stroke-width="1" fill="none"/>
<path d="M942.5 678V691M941 687.5H942M943 685.5H944" stroke="#50c850" stroke-width="1" fill="none"/>
<path d="M946.5 679V689M945 685.5H946M947 688.5H948" stroke="#50c850" stroke-width="1" fill="none"/>
<path d="M950.5 683V695M949 688.5H950M951 690.5H952" stroke="#50c850" stroke-width="1" fill="none"/>
<path d="M954.5 685V693M953 690.5H954M955 689.5H956" stroke="#50c850" stroke-width="1" fill="none"/>
<path d="M958.5 688V694M957 689.5H958M959 690.5H960" stroke="#50c850" stroke-width="1" fill="none"/>
<path d="M962.5 686V697M961 690.5H962M963 692.5H964" stroke="#50c850" stroke-width="1" fill="none"/>
<path d="M966.5 684V697M965 692.5H966M967 695.5H968" stroke="#50c850" stroke-width="1" fill="none"/>
<path d="M970.5 689V696M969 695.5H970M971 695.5H972" stroke="#50c850" stroke-width="1" fill="none"/>
<path d="M974.5 689V696M973 695.5H974M975 692.5H976" stroke="#50c850" stroke-width="1" fill="none"/>
<path d="M978.5 685V698M977 692.5H978M979 694.5H980" stroke="#50c850" stroke-width="1" fill="none"/>
<path d="M982.5 689V700M981 694.5H982M983 698.5H984" stroke="#50c850" stroke-width="1" fill="none"/>
<path d="M986.5 688V705M985 698.5H986M987 693.5H988" stroke="#50c850" stroke-width="1" fill="none"/>
<path d="M990.5 681V696M989 693.5H990M991 687.5H992" stroke="#50c850" stroke-width="1" fill="none"/>
<path d="M994.5 680V695M993 687.5H994M995 688.5H996" stroke="#50c850" stroke-width="1" fill="none"/>
<path d="M998.5 681V694M997 688.5H998M999 689.5H1000" stroke="#50c850" stroke-width="1" fill="none"/>
<path d="M1002.5 682V691M1001 689.5H1002M1003 684.5H1004" stroke="#50c850" stroke-width="1" fill="none"/>
<path d="M1006.5 679V688M1005 684.5H1006M1007 681.5H1008" stroke="#50c850" stroke-width="1" fill="none"/><line x1="982.5" y1="733" x2="982.5" y2="757" stroke="#d8d8d8"/><line x1="988.5" y1="733" x2="988.5" y2="757" stroke="#d8d8d8"/><line x1="994.5" y1="733" x2="994.5" y2="757" stroke="#d8d8d8"/><line x1="1000.5" y1="733" x2="1000.5" y2="757" stroke="#d8d8d8"/><line x1="1006.5" y1="733" x2="1006.5" y2="757" stroke="#d8d8d8"/><polyline points="976,758 990,757 1000,756 1008,754" fill="none" stroke="#c02020" stroke-dasharray="2 2"/><rect x="241.5" y="521.5" width="776" height="186" fill="none" stroke="#fff"/><rect x="241.5" y="709.5" width="776" height="91" fill="none" stroke="#fff"/></svg>
<svg style="position:absolute;left:245px;top:529px" width="11" height="8"><path d="M0 7 L5.5 1 L11 7 Z" fill="#fff"/></svg><div class="t" style="left:260px;top:524px;font-size:12.8px;letter-spacing:-1.1px;color:#fff">USDCHF,H4</div><div class="t" style="left:332px;top:524px;font-size:12.8px;color:#fff;white-space:pre">0.87928 0.88109 0.87848 0.88043</div>
<div style="position:absolute;left:246px;top:545px;width:58px;height:25px;background:linear-gradient(#4a4af8,#3232e4 60%,#2a2ad8)"></div>
<div style="position:absolute;left:250px;top:570px;width:52px;height:1px;background:#6a6af8"></div>
<div class="t" style="left:259px;top:549px;font-size:14.5px;letter-spacing:-1.2px;color:#dcdcff">SELL</div>
<div style="position:absolute;left:437px;top:545px;width:58px;height:25px;background:linear-gradient(#4a4af8,#3232e4 60%,#2a2ad8)"></div>
<div style="position:absolute;left:441px;top:570px;width:52px;height:1px;background:#6a6af8"></div>
<div class="t" style="left:452px;top:549px;font-size:14.5px;letter-spacing:-1px;color:#dcdcff">BUY</div>
<div style="position:absolute;left:307px;top:545px;width:127px;height:24px;background:#fff"></div>
<div style="position:absolute;left:307px;top:545px;width:24px;height:24px;background:linear-gradient(90deg,#e6e6e6,#d8d8d8);border-right:1px solid #c8c8c8"></div>
<div style="position:absolute;left:409px;top:545px;width:25px;height:24px;background:linear-gradient(90deg,#e6e6e6,#d8d8d8);border-left:1px solid #c8c8c8"></div>
<svg style="position:absolute;left:314px;top:554px" width="10" height="6"><path d="M0 0 H10 L5 5.5 Z" fill="#111"/></svg>
<svg style="position:absolute;left:416px;top:554px" width="10" height="6"><path d="M0 6 H10 L5 0.5 Z" fill="#111"/></svg>
<div class="t" style="left:374px;top:548px;font-size:15px;color:#222">1.00</div>
<div style="position:absolute;left:246px;top:571px;width:123px;height:49px;background:linear-gradient(#2e2ee0,#3a3af2 25%,#2222cc 70%,#1010a8)"></div>
<div class="t" style="left:194px;width:100px;text-align:right;top:594px;font-size:15px;font-weight:bold;color:#fff">0.88</div>
<div class="t" style="left:299px;top:575px;font-size:37px;color:#fff;letter-spacing:-1px">03</div>
<div class="t" style="left:343px;top:578px;font-size:14px;font-weight:bold;color:#fff">6</div>
<div style="position:absolute;left:372px;top:571px;width:123px;height:49px;background:linear-gradient(#2e2ee0,#3a3af2 25%,#2222cc 70%,#1010a8)"></div>
<div class="t" style="left:320px;width:100px;text-align:right;top:594px;font-size:15px;font-weight:bold;color:#fff">0.88</div>
<div class="t" style="left:425px;top:575px;font-size:37px;color:#fff;letter-spacing:-1px">07</div>
<div class="t" style="left:469px;top:578px;font-size:14px;font-weight:bold;color:#fff">4</div>
<div class="t" style="left:1024px;top:534.5px;font-size:12.5px;color:#fff;-webkit-text-stroke:0.2px #fff">0.91240</div>
<div class="t" style="left:1024px;top:583.5px;font-size:12.5px;color:#fff;-webkit-text-stroke:0.2px #fff">0.90120</div>
<div class="t" style="left:1024px;top:633.5px;font-size:12.5px;color:#fff;-webkit-text-stroke:0.2px #fff">0.89000</div>
<div class="t" style="left:1024px;top:685.5px;font-size:12.5px;color:#fff;-webkit-text-stroke:0.2px #fff">0.87880</div>
<div style="position:absolute;left:1018px;top:675px;width:57px;height:15px;background:#fff"></div><div class="t" style="left:1024px;top:675px;font-size:12.5px;color:#000">0.88043</div>
<div class="t" style="left:1021px;top:711.5px;font-size:12.5px;color:#fff;-webkit-text-stroke:0.2px #fff">0.0013</div>
<div class="t" style="left:1021px;top:726.5px;font-size:12.5px;color:#fff;-webkit-text-stroke:0.2px #fff">0.00</div>
<div class="t" style="left:1021px;top:787.5px;font-size:12.5px;color:#fff;-webkit-text-stroke:0.2px #fff">-0.00421</div>
<div class="t" style="left:923px;top:806px;font-size:12.5px;color:#fff;-webkit-text-stroke:0.25px #fff">5 Jan 12:00</div>
<div style="position:absolute;left:1093px;top:480px;width:897px;height:357px;background:linear-gradient(#bdcbdb 0px,#c5d2df 20px,#cfdbe7 30px,#d8e2ec 37px,#dde6ef 45px,#dde6ef);border-top:1px solid #e8eef4;border-left:1px solid #eef3f7;box-sizing:border-box"></div>
<div style="position:absolute;left:1093px;top:827px;width:897px;height:10px;background:linear-gradient(#e0e8f0,#cdd8e4)"></div>
<svg style="position:absolute;left:1105px;top:495px" width="19" height="18"><rect x="0.5" y="0.5" width="12" height="10" fill="#f4f9ff" stroke="#4f86c8"/><rect x="0.5" y="0.5" width="12" height="2.5" fill="#4f86c8"/><rect x="5.5" y="6.5" width="12" height="10" fill="#f4f9ff" stroke="#4f86c8"/><rect x="5.5" y="6.5" width="12" height="2.5" fill="#4f86c8"/><path d="M7.5 14.5 q1.5-5 3 0 t3 0 t3 -2" fill="none" stroke="#333" stroke-width="0.9"/><path d="M2 7 h3 M3 5 v4" stroke="#4f86c8" stroke-width="0.9"/></svg>
<div class="t" style="left:1128px;top:495px;font-size:14px;letter-spacing:-0.6px;color:#a4adb6">USDJPY,H4</div>
<div style="position:absolute;left:1816px;top:491px;width:39px;height:21px;border:1px solid #a3b2c3;border-radius:2px;background:linear-gradient(#d3dde8,#c9d5e1)"></div>
<div style="position:absolute;left:1828px;top:501px;width:15px;height:4px;background:#fff;border:1px solid #5a6570;border-radius:1px"></div>
<div style="position:absolute;left:1860px;top:491px;width:39px;height:21px;border:1px solid #a3b2c3;border-radius:2px;background:linear-gradient(#d3dde8,#c9d5e1)"></div>
<div style="position:absolute;left:1873px;top:495px;width:10px;height:10px;border:2px solid #5a6570;background:#e4eaf0;box-shadow:inset 0 0 0 1px #fff"></div>
<div style="position:absolute;left:1904px;top:491px;width:39px;height:21px;border:1px solid #a3b2c3;border-radius:2px;background:linear-gradient(#d3dde8,#c9d5e1)"></div>
<svg style="position:absolute;left:1915px;top:494px" width="18" height="16"><path d="M3 2 L15 14 M15 2 L3 14" stroke="#5a6570" stroke-width="5" stroke-linecap="round"/><path d="M3 2 L15 14 M15 2 L3 14" stroke="#fff" stroke-width="2.6" stroke-linecap="round"/></svg>
<div style="position:absolute;left:1101px;top:517px;width:785px;height:309px;background:#000;border-top:1px solid #6a737c;border-left:1px solid #6a737c;box-sizing:border-box"></div>
<svg style="position:absolute;left:1102px;top:518px" width="784" height="307" viewBox="1102 518 784 307"><line x1="1154.5" y1="522" x2="1154.5" y2="707" stroke="#b4b4b4" stroke-width="1" stroke-dasharray="3 3"/>
<line x1="1202.5" y1="522" x2="1202.5" y2="707" stroke="#b4b4b4" stroke-width="1" stroke-dasharray="3 3"/>
<line x1="1250.5" y1="522" x2="1250.5" y2="707" stroke="#b4b4b4" stroke-width="1" stroke-dasharray="3 3"/>
<line x1="1298.5" y1="522" x2="1298.5" y2="707" stroke="#b4b4b4" stroke-width="1" stroke-dasharray="3 3"/>
<line x1="1346.5" y1="522" x2="1346.5" y2="707" stroke="#b4b4b4" stroke-width="1" stroke-dasharray="3 3"/>
<line x1="1394.5" y1="522" x2="1394.5" y2="707" stroke="#b4b4b4" stroke-width="1" stroke-dasharray="3 3"/>
<line x1="1442.5" y1="522" x2="1442.5" y2="707" stroke="#b4b4b4" stroke-width="1" stroke-dasharray="3 3"/>
<line x1="1490.5" y1="522" x2="1490.5" y2="707" stroke="#b4b4b4" stroke-width="1" stroke-dasharray="3 3"/>
<line x1="1538.5" y1="522" x2="1538.5" y2="707" stroke="#b4b4b4" stroke-width="1" stroke-dasharray="3 3"/>
<line x1="1586.5" y1="522" x2="1586.5" y2="707" stroke="#b4b4b4" stroke-width="1" stroke-dasharray="3 3"/>
<line x1="1634.5" y1="522" x2="1634.5" y2="707" stroke="#b4b4b4" stroke-width="1" stroke-dasharray="3 3"/>
<line x1="1682.5" y1="522" x2="1682.5" y2="707" stroke="#b4b4b4" stroke-width="1" stroke-dasharray="3 3"/>
<line x1="1730.5" y1="522" x2="1730.5" y2="707" stroke="#b4b4b4" stroke-width="1" stroke-dasharray="3 3"/>
<line x1="1778.5" y1="522" x2="1778.5" y2="707" stroke="#b4b4b4" stroke-width="1" stroke-dasharray="3 3"/>
<line x1="1826.5" y1="522" x2="1826.5" y2="707" stroke="#b4b4b4" stroke-width="1" stroke-dasharray="3 3"/>
<line x1="1874.5" y1="522" x2="1874.5" y2="707" stroke="#b4b4b4" stroke-width="1" stroke-dasharray="3 3"/>
<line x1="1106" y1="541.5" x2="1886" y2="541.5" stroke="#b4b4b4" stroke-width="1" stroke-dasharray="3 3"/>
<line x1="1106" y1="591.5" x2="1886" y2="591.5" stroke="#b4b4b4" stroke-width="1" stroke-dasharray="3 3"/>
<line x1="1106" y1="639.5" x2="1886" y2="639.5" stroke="#b4b4b4" stroke-width="1" stroke-dasharray="3 3"/>
<line x1="1106" y1="689.5" x2="1886" y2="689.5" stroke="#b4b4b4" stroke-width="1" stroke-dasharray="3 3"/><line x1="1154.5" y1="710" x2="1154.5" y2="800" stroke="#b4b4b4" stroke-width="1" stroke-dasharray="3 3"/>
<line x1="1202.5" y1="710" x2="1202.5" y2="800" stroke="#b4b4b4" stroke-width="1" stroke-dasharray="3 3"/>
<line x1="1250.5" y1="710" x2="1250.5" y2="800" stroke="#b4b4b4" stroke-width="1" stroke-dasharray="3 3"/>
<line x1="1298.5" y1="710" x2="1298.5" y2="800" stroke="#b4b4b4" stroke-width="1" stroke-dasharray="3 3"/>
<line x1="1346.5" y1="710" x2="1346.5" y2="800" stroke="#b4b4b4" stroke-width="1" stroke-dasharray="3 3"/>
<line x1="1394.5" y1="710" x2="1394.5" y2="800" stroke="#b4b4b4" stroke-width="1" stroke-dasharray="3 3"/>
<line x1="1442.5" y1="710" x2="1442.5" y2="800" stroke="#b4b4b4" stroke-width="1" stroke-dasharray="3 3"/>
<line x1="1490.5" y1="710" x2="1490.5" y2="800" stroke="#b4b4b4" stroke-width="1" stroke-dasharray="3 3"/>
<line x1="1538.5" y1="710" x2="1538.5" y2="800" stroke="#b4b4b4" stroke-width="1" stroke-dasharray="3 3"/>
<line x1="1586.5" y1="710" x2="1586.5" y2="800" stroke="#b4b4b4" stroke-width="1" stroke-dasharray="3 3"/>
<line x1="1634.5" y1="710" x2="1634.5" y2="800" stroke="#b4b4b4" stroke-width="1" stroke-dasharray="3 3"/>
<line x1="1682.5" y1="710" x2="1682.5" y2="800" stroke="#b4b4b4" stroke-width="1" stroke-dasharray="3 3"/>
<line x1="1730.5" y1="710" x2="1730.5" y2="800" stroke="#b4b4b4" stroke-width="1" stroke-dasharray="3 3"/>
<line x1="1778.5" y1="710" x2="1778.5" y2="800" stroke="#b4b4b4" stroke-width="1" stroke-dasharray="3 3"/>
<line x1="1826.5" y1="710" x2="1826.5" y2="800" stroke="#b4b4b4" stroke-width="1" stroke-dasharray="3 3"/>
<line x1="1874.5" y1="710" x2="1874.5" y2="800" stroke="#b4b4b4" stroke-width="1" stroke-dasharray="3 3"/>
<line x1="1106" y1="738.5" x2="1886" y2="738.5" stroke="#b4b4b4" stroke-width="1" stroke-dasharray="3 3"/>
<line x1="1106" y1="757.5" x2="1886" y2="757.5" stroke="#b4b4b4" stroke-width="1" stroke-dasharray="3 3"/>
<line x1="1106" y1="775.5" x2="1886" y2="775.5" stroke="#b4b4b4" stroke-width="1" stroke-dasharray="3 3"/><line x1="1106" y1="615.5" x2="1886" y2="615.5" stroke="#a8b4b8"/><line x1="1106.5" y1="547" x2="1106.5" y2="556" stroke="#5ed85e" stroke-width="1"/>
<rect x="1104.5" y="553.5" width="5" height="2" fill="#000" stroke="#5ed85e" stroke-width="1"/>
<line x1="1114.5" y1="549" x2="1114.5" y2="555" stroke="#5ed85e" stroke-width="1"/>
<rect x="1112.5" y="553.5" width="5" height="1" fill="#d8f8d0" stroke="#5ed85e" stroke-width="1"/>
<line x1="1122.5" y1="549" x2="1122.5" y2="558" stroke="#5ed85e" stroke-width="1"/>
<rect x="1120.5" y="551.5" width="5" height="3" fill="#000" stroke="#5ed85e" stroke-width="1"/>
<line x1="1130.5" y1="542" x2="1130.5" y2="555" stroke="#5ed85e" stroke-width="1"/>
<rect x="1128.5" y="544.5" width="5" height="7" fill="#000" stroke="#5ed85e" stroke-width="1"/>
<line x1="1138.5" y1="542" x2="1138.5" y2="555" stroke="#5ed85e" stroke-width="1"/>
<rect x="1136.5" y="544.5" width="5" height="9" fill="#d8f8d0" stroke="#5ed85e" stroke-width="1"/>
<line x1="1146.5" y1="544" x2="1146.5" y2="557" stroke="#5ed85e" stroke-width="1"/>
<rect x="1144.5" y="551.5" width="5" height="1" fill="#000" stroke="#5ed85e" stroke-width="1"/>
<line x1="1154.5" y1="542" x2="1154.5" y2="553" stroke="#5ed85e" stroke-width="1"/>
<rect x="1152.5" y="550.5" width="5" height="1" fill="#000" stroke="#5ed85e" stroke-width="1"/>
<line x1="1162.5" y1="547" x2="1162.5" y2="561" stroke="#5ed85e" stroke-width="1"/>
<rect x="1160.5" y="550.5" width="5" height="9" fill="#d8f8d0" stroke="#5ed85e" stroke-width="1"/>
<line x1="1170.5" y1="556" x2="1170.5" y2="571" stroke="#5ed85e" stroke-width="1"/>
<rect x="1168.5" y="559.5" width="5" height="5" fill="#d8f8d0" stroke="#5ed85e" stroke-width="1"/>
<line x1="1178.5" y1="559" x2="1178.5" y2="583" stroke="#5ed85e" stroke-width="1"/>
<rect x="1176.5" y="564.5" width="5" height="13" fill="#d8f8d0" stroke="#5ed85e" stroke-width="1"/>
<line x1="1186.5" y1="573" x2="1186.5" y2="594" stroke="#5ed85e" stroke-width="1"/>
<rect x="1184.5" y="578.5" width="5" height="15" fill="#d8f8d0" stroke="#5ed85e" stroke-width="1"/>
<line x1="1194.5" y1="590" x2="1194.5" y2="621" stroke="#5ed85e" stroke-width="1"/>
<rect x="1192.5" y="592.5" width="5" height="23" fill="#d8f8d0" stroke="#5ed85e" stroke-width="1"/>
<line x1="1202.5" y1="612" x2="1202.5" y2="629" stroke="#5ed85e" stroke-width="1"/>
<rect x="1200.5" y="615.5" width="5" height="9" fill="#d8f8d0" stroke="#5ed85e" stroke-width="1"/>
<line x1="1210.5" y1="621" x2="1210.5" y2="631" stroke="#5ed85e" stroke-width="1"/>
<rect x="1208.5" y="624.5" width="5" height="1" fill="#000" stroke="#5ed85e" stroke-width="1"/>
<line x1="1218.5" y1="621" x2="1218.5" y2="631" stroke="#5ed85e" stroke-width="1"/>
<rect x="1216.5" y="624.5" width="5" height="2" fill="#d8f8d0" stroke="#5ed85e" stroke-width="1"/>
<line x1="1226.5" y1="617" x2="1226.5" y2="632" stroke="#5ed85e" stroke-width="1"/>
<rect x="1224.5" y="624.5" width="5" height="2" fill="#000" stroke="#5ed85e" stroke-width="1"/>
<line x1="1234.5" y1="613" x2="1234.5" y2="626" stroke="#5ed85e" stroke-width="1"/>
<rect x="1232.5" y="621.5" width="5" height="3" fill="#000" stroke="#5ed85e" stroke-width="1"/>
<line x1="1242.5" y1="615" x2="1242.5" y2="649" stroke="#5ed85e" stroke-width="1"/>
<rect x="1240.5" y="621.5" width="5" height="26" fill="#d8f8d0" stroke="#5ed85e" stroke-width="1"/>
<line x1="1250.5" y1="645" x2="1250.5" y2="656" stroke="#5ed85e" stroke-width="1"/>
<rect x="1248.5" y="647.5" width="5" height="4" fill="#d8f8d0" stroke="#5ed85e" stroke-width="1"/>
<line x1="1258.5" y1="646" x2="1258.5" y2="659" stroke="#5ed85e" stroke-width="1"/>
<rect x="1256.5" y="651.5" width="5" height="1" fill="#d8f8d0" stroke="#5ed85e" stroke-width="1"/>
<line x1="1266.5" y1="640" x2="1266.5" y2="657" stroke="#5ed85e" stroke-width="1"/>
<rect x="1264.5" y="646.5" width="5" height="6" fill="#000" stroke="#5ed85e" stroke-width="1"/>
<line x1="1274.5" y1="621" x2="1274.5" y2="652" stroke="#5ed85e" stroke-width="1"/>
<rect x="1272.5" y="626.5" width="5" height="20" fill="#000" stroke="#5ed85e" stroke-width="1"/>
<line x1="1282.5" y1="621" x2="1282.5" y2="633" stroke="#5ed85e" stroke-width="1"/>
<rect x="1280.5" y="626.5" width="5" height="2" fill="#d8f8d0" stroke="#5ed85e" stroke-width="1"/>
<line x1="1290.5" y1="614" x2="1290.5" y2="633" stroke="#5ed85e" stroke-width="1"/>
<rect x="1288.5" y="619.5" width="5" height="8" fill="#000" stroke="#5ed85e" stroke-width="1"/>
<line x1="1298.5" y1="613" x2="1298.5" y2="633" stroke="#5ed85e" stroke-width="1"/>
<rect x="1296.5" y="619.5" width="5" height="10" fill="#d8f8d0" stroke="#5ed85e" stroke-width="1"/>
<line x1="1306.5" y1="618" x2="1306.5" y2="631" stroke="#5ed85e" stroke-width="1"/>
<rect x="1304.5" y="624.5" width="5" height="6" fill="#000" stroke="#5ed85e" stroke-width="1"/>
<line x1="1314.5" y1="621" x2="1314.5" y2="626" stroke="#5ed85e" stroke-width="1"/>
<rect x="1312.5" y="624.5" width="5" height="1" fill="#d8f8d0" stroke="#5ed85e" stroke-width="1"/>
<line x1="1322.5" y1="614" x2="1322.5" y2="626" stroke="#5ed85e" stroke-width="1"/>
<rect x="1320.5" y="620.5" width="5" height="4" fill="#000" stroke="#5ed85e" stroke-width="1"/>
<line x1="1330.5" y1="617" x2="1330.5" y2="628" stroke="#5ed85e" stroke-width="1"/>
<rect x="1328.5" y="620.5" width="5" height="1" fill="#d8f8d0" stroke="#5ed85e" stroke-width="1"/>
<line x1="1338.5" y1="614" x2="1338.5" y2="626" stroke="#5ed85e" stroke-width="1"/>
<rect x="1336.5" y="618.5" width="5" height="3" fill="#000" stroke="#5ed85e" stroke-width="1"/>
<line x1="1346.5" y1="611" x2="1346.5" y2="632" stroke="#5ed85e" stroke-width="1"/>
<rect x="1344.5" y="618.5" width="5" height="7" fill="#d8f8d0" stroke="#5ed85e" stroke-width="1"/>
<line x1="1354.5" y1="613" x2="1354.5" y2="628" stroke="#5ed85e" stroke-width="1"/>
<rect x="1352.5" y="617.5" width="5" height="7" fill="#000" stroke="#5ed85e" stroke-width="1"/>
<line x1="1362.5" y1="609" x2="1362.5" y2="624" stroke="#5ed85e" stroke-width="1"/>
<rect x="1360.5" y="617.5" width="5" height="5" fill="#d8f8d0" stroke="#5ed85e" stroke-width="1"/>
<line x1="1370.5" y1="609" x2="1370.5" y2="625" stroke="#5ed85e" stroke-width="1"/>
<rect x="1368.5" y="611.5" width="5" height="11" fill="#000" stroke="#5ed85e" stroke-width="1"/>
<line x1="1378.5" y1="604" x2="1378.5" y2="614" stroke="#5ed85e" stroke-width="1"/>
<rect x="1376.5" y="609.5" width="5" height="2" fill="#000" stroke="#5ed85e" stroke-width="1"/>
<line x1="1386.5" y1="601" x2="1386.5" y2="613" stroke="#5ed85e" stroke-width="1"/>
<rect x="1384.5" y="605.5" width="5" height="4" fill="#000" stroke="#5ed85e" stroke-width="1"/>
<line x1="1394.5" y1="597" x2="1394.5" y2="615" stroke="#5ed85e" stroke-width="1"/>
<rect x="1392.5" y="605.5" width="5" height="5" fill="#d8f8d0" stroke="#5ed85e" stroke-width="1"/>
<line x1="1402.5" y1="586" x2="1402.5" y2="615" stroke="#5ed85e" stroke-width="1"/>
<rect x="1400.5" y="592.5" width="5" height="18" fill="#000" stroke="#5ed85e" stroke-width="1"/>
<line x1="1410.5" y1="576" x2="1410.5" y2="598" stroke="#5ed85e" stroke-width="1"/>
<rect x="1408.5" y="583.5" width="5" height="8" fill="#000" stroke="#5ed85e" stroke-width="1"/>
<line x1="1418.5" y1="577" x2="1418.5" y2="600" stroke="#5ed85e" stroke-width="1"/>
<rect x="1416.5" y="583.5" width="5" height="13" fill="#d8f8d0" stroke="#5ed85e" stroke-width="1"/>
<line x1="1426.5" y1="595" x2="1426.5" y2="613" stroke="#5ed85e" stroke-width="1"/>
<rect x="1424.5" y="597.5" width="5" height="11" fill="#d8f8d0" stroke="#5ed85e" stroke-width="1"/>
<line x1="1434.5" y1="603" x2="1434.5" y2="610" stroke="#5ed85e" stroke-width="1"/>
<rect x="1432.5" y="604.5" width="5" height="3" fill="#000" stroke="#5ed85e" stroke-width="1"/>
<line x1="1442.5" y1="595" x2="1442.5" y2="606" stroke="#5ed85e" stroke-width="1"/>
<rect x="1440.5" y="599.5" width="5" height="6" fill="#000" stroke="#5ed85e" stroke-width="1"/>
<line x1="1450.5" y1="587" x2="1450.5" y2="600" stroke="#5ed85e" stroke-width="1"/>
<rect x="1448.5" y="589.5" width="5" height="10" fill="#000" stroke="#5ed85e" stroke-width="1"/>
<line x1="1458.5" y1="588" x2="1458.5" y2="601" stroke="#5ed85e" stroke-width="1"/>
<rect x="1456.5" y="589.5" width="5" height="5" fill="#d8f8d0" stroke="#5ed85e" stroke-width="1"/>
<line x1="1466.5" y1="592" x2="1466.5" y2="601" stroke="#5ed85e" stroke-width="1"/>
<rect x="1464.5" y="594.5" width="5" height="4" fill="#d8f8d0" stroke="#5ed85e" stroke-width="1"/>
<line x1="1474.5" y1="589" x2="1474.5" y2="600" stroke="#5ed85e" stroke-width="1"/>
<rect x="1472.5" y="593.5" width="5" height="5" fill="#000" stroke="#5ed85e" stroke-width="1"/>
<line x1="1482.5" y1="585" x2="1482.5" y2="597" stroke="#5ed85e" stroke-width="1"/>
<rect x="1480.5" y="593.5" width="5" height="1" fill="#d8f8d0" stroke="#5ed85e" stroke-width="1"/>
<line x1="1490.5" y1="583" x2="1490.5" y2="595" stroke="#5ed85e" stroke-width="1"/>
<rect x="1488.5" y="585.5" width="5" height="8" fill="#000" stroke="#5ed85e" stroke-width="1"/>
<line x1="1498.5" y1="580" x2="1498.5" y2="591" stroke="#5ed85e" stroke-width="1"/>
<rect x="1496.5" y="583.5" width="5" height="2" fill="#000" stroke="#5ed85e" stroke-width="1"/>
<line x1="1506.5" y1="582" x2="1506.5" y2="597" stroke="#5ed85e" stroke-width="1"/>
<rect x="1504.5" y="583.5" width="5" height="6" fill="#d8f8d0" stroke="#5ed85e" stroke-width="1"/>
<line x1="1514.5" y1="587" x2="1514.5" y2="601" stroke="#5ed85e" stroke-width="1"/>
<rect x="1512.5" y="589.5" width="5" height="7" fill="#d8f8d0" stroke="#5ed85e" stroke-width="1"/>
<line x1="1522.5" y1="590" x2="1522.5" y2="604" stroke="#5ed85e" stroke-width="1"/>
<rect x="1520.5" y="594.5" width="5" height="2" fill="#000" stroke="#5ed85e" stroke-width="1"/>
<line x1="1530.5" y1="588" x2="1530.5" y2="613" stroke="#5ed85e" stroke-width="1"/>
<rect x="1528.5" y="594.5" width="5" height="16" fill="#d8f8d0" stroke="#5ed85e" stroke-width="1"/>
<line x1="1538.5" y1="599" x2="1538.5" y2="617" stroke="#5ed85e" stroke-width="1"/>
<rect x="1536.5" y="602.5" width="5" height="9" fill="#000" stroke="#5ed85e" stroke-width="1"/>
<line x1="1546.5" y1="593" x2="1546.5" y2="605" stroke="#5ed85e" stroke-width="1"/>
<rect x="1544.5" y="599.5" width="5" height="2" fill="#000" stroke="#5ed85e" stroke-width="1"/>
<line x1="1554.5" y1="558" x2="1554.5" y2="607" stroke="#5ed85e" stroke-width="1"/>
<rect x="1552.5" y="565.5" width="5" height="34" fill="#000" stroke="#5ed85e" stroke-width="1"/>
<line x1="1562.5" y1="558" x2="1562.5" y2="578" stroke="#5ed85e" stroke-width="1"/>
<rect x="1560.5" y="565.5" width="5" height="7" fill="#d8f8d0" stroke="#5ed85e" stroke-width="1"/>
<line x1="1570.5" y1="569" x2="1570.5" y2="583" stroke="#5ed85e" stroke-width="1"/>
<rect x="1568.5" y="572.5" width="5" height="7" fill="#d8f8d0" stroke="#5ed85e" stroke-width="1"/>
<line x1="1578.5" y1="577" x2="1578.5" y2="580" stroke="#5ed85e" stroke-width="1"/>
<rect x="1576.5" y="578.5" width="5" height="1" fill="#d8f8d0" stroke="#5ed85e" stroke-width="1"/>
<line x1="1586.5" y1="576" x2="1586.5" y2="588" stroke="#5ed85e" stroke-width="1"/>
<rect x="1584.5" y="579.5" width="5" height="3" fill="#d8f8d0" stroke="#5ed85e" stroke-width="1"/>
<line x1="1594.5" y1="578" x2="1594.5" y2="602" stroke="#5ed85e" stroke-width="1"/>
<rect x="1592.5" y="582.5" width="5" height="13" fill="#d8f8d0" stroke="#5ed85e" stroke-width="1"/>
<line x1="1602.5" y1="587" x2="1602.5" y2="605" stroke="#5ed85e" stroke-width="1"/>
<rect x="1600.5" y="595.5" width="5" height="7" fill="#d8f8d0" stroke="#5ed85e" stroke-width="1"/>
<line x1="1610.5" y1="593" x2="1610.5" y2="604" stroke="#5ed85e" stroke-width="1"/>
<rect x="1608.5" y="596.5" width="5" height="6" fill="#000" stroke="#5ed85e" stroke-width="1"/>
<line x1="1618.5" y1="591" x2="1618.5" y2="620" stroke="#5ed85e" stroke-width="1"/>
<rect x="1616.5" y="596.5" width="5" height="17" fill="#d8f8d0" stroke="#5ed85e" stroke-width="1"/>
<line x1="1626.5" y1="609" x2="1626.5" y2="629" stroke="#5ed85e" stroke-width="1"/>
<rect x="1624.5" y="613.5" width="5" height="10" fill="#d8f8d0" stroke="#5ed85e" stroke-width="1"/>
<line x1="1634.5" y1="622" x2="1634.5" y2="637" stroke="#5ed85e" stroke-width="1"/>
<rect x="1632.5" y="623.5" width="5" height="8" fill="#d8f8d0" stroke="#5ed85e" stroke-width="1"/>
<line x1="1642.5" y1="625" x2="1642.5" y2="658" stroke="#5ed85e" stroke-width="1"/>
<rect x="1640.5" y="631.5" width="5" height="21" fill="#d8f8d0" stroke="#5ed85e" stroke-width="1"/>
<line x1="1650.5" y1="637" x2="1650.5" y2="659" stroke="#5ed85e" stroke-width="1"/>
<rect x="1648.5" y="639.5" width="5" height="13" fill="#000" stroke="#5ed85e" stroke-width="1"/>
<line x1="1658.5" y1="628" x2="1658.5" y2="647" stroke="#5ed85e" stroke-width="1"/>
<rect x="1656.5" y="635.5" width="5" height="5" fill="#000" stroke="#5ed85e" stroke-width="1"/>
<line x1="1666.5" y1="631" x2="1666.5" y2="655" stroke="#5ed85e" stroke-width="1"/>
<rect x="1664.5" y="635.5" width="5" height="13" fill="#d8f8d0" stroke="#5ed85e" stroke-width="1"/>
<line x1="1674.5" y1="646" x2="1674.5" y2="656" stroke="#5ed85e" stroke-width="1"/>
<rect x="1672.5" y="648.5" width="5" height="7" fill="#d8f8d0" stroke="#5ed85e" stroke-width="1"/>
<line x1="1682.5" y1="643" x2="1682.5" y2="661" stroke="#5ed85e" stroke-width="1"/>
<rect x="1680.5" y="651.5" width="5" height="4" fill="#000" stroke="#5ed85e" stroke-width="1"/>
<line x1="1690.5" y1="644" x2="1690.5" y2="658" stroke="#5ed85e" stroke-width="1"/>
<rect x="1688.5" y="650.5" width="5" height="1" fill="#000" stroke="#5ed85e" stroke-width="1"/>
<line x1="1698.5" y1="630" x2="1698.5" y2="655" stroke="#5ed85e" stroke-width="1"/>
<rect x="1696.5" y="634.5" width="5" height="17" fill="#000" stroke="#5ed85e" stroke-width="1"/>
<line x1="1706.5" y1="622" x2="1706.5" y2="642" stroke="#5ed85e" stroke-width="1"/>
<rect x="1704.5" y="623.5" width="5" height="11" fill="#000" stroke="#5ed85e" stroke-width="1"/>
<line x1="1714.5" y1="618" x2="1714.5" y2="658" stroke="#5ed85e" stroke-width="1"/>
<rect x="1712.5" y="623.5" width="5" height="27" fill="#d8f8d0" stroke="#5ed85e" stroke-width="1"/>
<line x1="1722.5" y1="643" x2="1722.5" y2="662" stroke="#5ed85e" stroke-width="1"/>
<rect x="1720.5" y="650.5" width="5" height="4" fill="#d8f8d0" stroke="#5ed85e" stroke-width="1"/>
<line x1="1730.5" y1="652" x2="1730.5" y2="685" stroke="#5ed85e" stroke-width="1"/>
<rect x="1728.5" y="655.5" width="5" height="27" fill="#d8f8d0" stroke="#5ed85e" stroke-width="1"/>
<line x1="1738.5" y1="646" x2="1738.5" y2="685" stroke="#5ed85e" stroke-width="1"/>
<rect x="1736.5" y="651.5" width="5" height="30" fill="#000" stroke="#5ed85e" stroke-width="1"/>
<line x1="1746.5" y1="639" x2="1746.5" y2="659" stroke="#5ed85e" stroke-width="1"/>
<rect x="1744.5" y="641.5" width="5" height="10" fill="#000" stroke="#5ed85e" stroke-width="1"/>
<line x1="1754.5" y1="635" x2="1754.5" y2="646" stroke="#5ed85e" stroke-width="1"/>
<rect x="1752.5" y="640.5" width="5" height="1" fill="#000" stroke="#5ed85e" stroke-width="1"/>
<line x1="1762.5" y1="636" x2="1762.5" y2="657" stroke="#5ed85e" stroke-width="1"/>
<rect x="1760.5" y="640.5" width="5" height="10" fill="#d8f8d0" stroke="#5ed85e" stroke-width="1"/>
<line x1="1770.5" y1="645" x2="1770.5" y2="665" stroke="#5ed85e" stroke-width="1"/>
<rect x="1768.5" y="649.5" width="5" height="11" fill="#d8f8d0" stroke="#5ed85e" stroke-width="1"/>
<line x1="1778.5" y1="657" x2="1778.5" y2="671" stroke="#5ed85e" stroke-width="1"/>
<rect x="1776.5" y="661.5" width="5" height="8" fill="#d8f8d0" stroke="#5ed85e" stroke-width="1"/>
<line x1="1786.5" y1="656" x2="1786.5" y2="671" stroke="#5ed85e" stroke-width="1"/>
<rect x="1784.5" y="663.5" width="5" height="6" fill="#000" stroke="#5ed85e" stroke-width="1"/>
<line x1="1794.5" y1="657" x2="1794.5" y2="695" stroke="#5ed85e" stroke-width="1"/>
<rect x="1792.5" y="663.5" width="5" height="28" fill="#d8f8d0" stroke="#5ed85e" stroke-width="1"/>
<line x1="1802.5" y1="686" x2="1802.5" y2="696" stroke="#5ed85e" stroke-width="1"/>
<rect x="1800.5" y="691.5" width="5" height="1" fill="#d8f8d0" stroke="#5ed85e" stroke-width="1"/>
<line x1="1810.5" y1="685" x2="1810.5" y2="696" stroke="#5ed85e" stroke-width="1"/>
<rect x="1808.5" y="687.5" width="5" height="4" fill="#000" stroke="#5ed85e" stroke-width="1"/>
<line x1="1818.5" y1="676" x2="1818.5" y2="693" stroke="#5ed85e" stroke-width="1"/>
<rect x="1816.5" y="679.5" width="5" height="8" fill="#000" stroke="#5ed85e" stroke-width="1"/>
<line x1="1826.5" y1="669" x2="1826.5" y2="685" stroke="#5ed85e" stroke-width="1"/>
<rect x="1824.5" y="674.5" width="5" height="5" fill="#000" stroke="#5ed85e" stroke-width="1"/>
<line x1="1834.5" y1="642" x2="1834.5" y2="680" stroke="#5ed85e" stroke-width="1"/>
<rect x="1832.5" y="646.5" width="5" height="28" fill="#000" stroke="#5ed85e" stroke-width="1"/>
<line x1="1842.5" y1="632" x2="1842.5" y2="652" stroke="#5ed85e" stroke-width="1"/>
<rect x="1840.5" y="636.5" width="5" height="10" fill="#000" stroke="#5ed85e" stroke-width="1"/>
<line x1="1850.5" y1="632" x2="1850.5" y2="655" stroke="#5ed85e" stroke-width="1"/>
<rect x="1848.5" y="636.5" width="5" height="14" fill="#d8f8d0" stroke="#5ed85e" stroke-width="1"/>
<line x1="1858.5" y1="642" x2="1858.5" y2="658" stroke="#5ed85e" stroke-width="1"/>
<rect x="1856.5" y="648.5" width="5" height="3" fill="#000" stroke="#5ed85e" stroke-width="1"/>
<line x1="1866.5" y1="639" x2="1866.5" y2="653" stroke="#5ed85e" stroke-width="1"/>
<rect x="1864.5" y="641.5" width="5" height="6" fill="#000" stroke="#5ed85e" stroke-width="1"/>
<line x1="1874.5" y1="618" x2="1874.5" y2="643" stroke="#5ed85e" stroke-width="1"/>
<rect x="1872.5" y="625.5" width="5" height="16" fill="#000" stroke="#5ed85e" stroke-width="1"/><polyline points="1106.3,789.5 1124.0,750.8 1140.0,739.5 1146.7,741.0 1154.8,770.0 1169.3,779.9 1179.0,779.9 1193.5,784.7 1203.0,776.6 1214.5,765.3 1221.0,767.0 1234.0,776.6 1250.0,786.3 1266.0,773.4 1290.4,744.3 1298.5,754.0 1314.6,755.6 1330.8,742.7 1338.9,725.0 1347.0,731.4 1361.5,758.9 1379.0,754.0 1389.0,758.9 1395.4,755.6 1403.5,729.8 1413.0,731.4 1434.0,763.7 1443.8,755.6 1460.0,744.3 1474.5,746.0 1485.8,734.6 1497.8,733.0 1512.3,760.5 1522.0,759.0 1538.0,780.0 1554.3,715.3 1567.0,728.0 1586.6,752.4 1594.7,749.0 1602.7,767.0 1609.0,767.0 1622.0,783.0 1631.8,784.7 1641.5,791.0 1654.4,773.4 1673.8,771.8 1690.0,773.4 1706.0,755.6 1730.3,797.6 1746.5,750.8 1761.0,750.8 1777.0,780.0 1793.3,784.7 1803.0,783.0 1822.4,767.0 1827.0,763.7 1841.7,729.8 1849.8,746.0 1857.9,744.3 1874.0,729.8" fill="none" stroke="#62b4a4" stroke-width="1"/><rect x="1105.5" y="521.5" width="900" height="186" fill="none" stroke="#fff"/><rect x="1105.5" y="709.5" width="900" height="91" fill="none" stroke="#fff"/><line x1="1105.5" y1="800" x2="1105.5" y2="804" stroke="#fff"/><line x1="1201.5" y1="800" x2="1201.5" y2="804" stroke="#fff"/><line x1="1297.5" y1="800" x2="1297.5" y2="804" stroke="#fff"/><line x1="1393.5" y1="800" x2="1393.5" y2="804" stroke="#fff"/><line x1="1489.5" y1="800" x2="1489.5" y2="804" stroke="#fff"/><line x1="1585.5" y1="800" x2="1585.5" y2="804" stroke="#fff"/><line x1="1681.5" y1="800" x2="1681.5" y2="804" stroke="#fff"/><line x1="1777.5" y1="800" x2="1777.5" y2="804" stroke="#fff"/><line x1="1873.5" y1="800" x2="1873.5" y2="804" stroke="#fff"/></svg>
<svg style="position:absolute;left:1109px;top:529px" width="11" height="8"><path d="M0 7 L5.5 1 L11 7 Z" fill="#fff"/></svg><div class="t" style="left:1124px;top:524px;font-size:12.8px;letter-spacing:-1.1px;color:#fff">USDJPY,H4</div><div class="t" style="left:1196px;top:524px;font-size:12.8px;color:#fff;white-space:pre">103.203 103.445 103.170 103.371</div>
<div style="position:absolute;left:1110px;top:545px;width:58px;height:25px;background:linear-gradient(#f04646,#e42e2e 60%,#da2626)"></div>
<div style="position:absolute;left:1114px;top:570px;width:52px;height:1px;background:#f06a6a"></div>
<div class="t" style="left:1123px;top:549px;font-size:14.5px;letter-spacing:-1.2px;color:#ffd8d0">SELL</div>
<div style="position:absolute;left:1301px;top:545px;width:58px;height:25px;background:linear-gradient(#f04646,#e42e2e 60%,#da2626)"></div>
<div style="position:absolute;left:1305px;top:570px;width:52px;height:1px;background:#f06a6a"></div>
<div class="t" style="left:1316px;top:549px;font-size:14.5px;letter-spacing:-1px;color:#ffd8d0">BUY</div>
<div style="position:absolute;left:1171px;top:545px;width:127px;height:24px;background:#fff"></div>
<div style="position:absolute;left:1171px;top:545px;width:24px;height:24px;background:linear-gradient(90deg,#e6e6e6,#d8d8d8);border-right:1px solid #c8c8c8"></div>
<div style="position:absolute;left:1273px;top:545px;width:25px;height:24px;background:linear-gradient(90deg,#e6e6e6,#d8d8d8);border-left:1px solid #c8c8c8"></div>
<svg style="position:absolute;left:1178px;top:554px" width="10" height="6"><path d="M0 0 H10 L5 5.5 Z" fill="#111"/></svg>
<svg style="position:absolute;left:1280px;top:554px" width="10" height="6"><path d="M0 6 H10 L5 0.5 Z" fill="#111"/></svg>
<div class="t" style="left:1238px;top:548px;font-size:15px;color:#222">1.00</div>
<div style="position:absolute;left:1110px;top:571px;width:123px;height:49px;background:linear-gradient(#e02626,#e62e2e 25%,#d01a1a 70%,#b40c0c)"></div>
<div class="t" style="left:1058px;width:100px;text-align:right;top:594px;font-size:15px;font-weight:bold;color:#fff">103</div>
<div class="t" style="left:1163px;top:575px;font-size:37px;color:#fff;letter-spacing:-1px">36</div>
<div class="t" style="left:1207px;top:578px;font-size:14px;font-weight:bold;color:#fff">4</div>
<div style="position:absolute;left:1236px;top:571px;width:123px;height:49px;background:linear-gradient(#e02626,#e62e2e 25%,#d01a1a 70%,#b40c0c)"></div>
<div class="t" style="left:1184px;width:100px;text-align:right;top:594px;font-size:15px;font-weight:bold;color:#fff">103</div>
<div class="t" style="left:1289px;top:575px;font-size:37px;color:#fff;letter-spacing:-1px">40</div>
<div class="t" style="left:1333px;top:578px;font-size:14px;font-weight:bold;color:#fff">1</div>
<div class="t" style="left:1110px;top:712px;font-size:13px;color:#fff">CCI(14) 140.1923</div>
<div class="t" style="left:1105px;top:806px;font-size:12.5px;color:#fff;-webkit-text-stroke:0.25px #fff">14 Dec 2020</div>
<div class="t" style="left:1201px;top:806px;font-size:12.5px;color:#fff;-webkit-text-stroke:0.25px #fff">16 Dec 12:00</div>
<div class="t" style="left:1297px;top:806px;font-size:12.5px;color:#fff;-webkit-text-stroke:0.25px #fff">18 Dec 12:00</div>
<div class="t" style="left:1393px;top:806px;font-size:12.5px;color:#fff;-webkit-text-stroke:0.25px #fff">22 Dec 12:00</div>
<div class="t" style="left:1489px;top:806px;font-size:12.5px;color:#fff;-webkit-text-stroke:0.25px #fff">24 Dec 12:00</div>
<div class="t" style="left:1585px;top:806px;font-size:12.5px;color:#fff;-webkit-text-stroke:0.25px #fff">29 Dec 08:00</div>
<div class="t" style="left:1681px;top:806px;font-size:12.5px;color:#fff;-webkit-text-stroke:0.25px #fff">31 Dec 08:00</div>
<div class="t" style="left:1777px;top:806px;font-size:12.5px;color:#fff;-webkit-text-stroke:0.25px #fff">5 Jan 08:00</div>
<div class="t" style="left:1873px;top:806px;font-size:12.5px;color:#fff;-webkit-text-stroke:0.25px #fff">7 Jan</div>
<div style="position:absolute;left:1091px;top:122px;width:2px;height:716px;background:#3c4650"></div>
<div style="position:absolute;left:226px;top:478px;width:1660px;height:2px;background:#3c4650"></div>
<div style="position:absolute;left:226px;top:122px;width:2px;height:716px;background:#3c4650"></div>
<div style="position:absolute;left:226px;top:837px;width:1660px;height:2px;background:#2a2a2a"></div>
<div style="position:absolute;left:0;top:122px;width:226px;height:853px;background:#f0f0f0"></div>
<div style="position:absolute;left:224px;top:122px;width:2px;height:740px;background:#fbfbfb"></div>
<div style="position:absolute;left:2px;top:125px;width:218px;height:16px;background:linear-gradient(90deg,#c3d2e2 0%,#d3e0ee 50%,#dae6f2 85%,#f0f0f0 100%)"></div>
<div class="t" style="left:5px;top:124px;font-size:14.6px;color:#111">Market Watch: 10:30:50</div>
<div class="t" style="left:206px;top:123px;font-size:15px;color:#000">&#x2715;</div>
<div style="position:absolute;left:2px;top:141px;width:217px;height:318px;background:#fff;border-top:1px solid #a9b3bf"></div>
<div style="position:absolute;left:2px;top:142px;width:198px;height:26px;background:#fff"></div>
<div class="t" style="left:9px;top:147px;font-size:14.6px;color:#111">Symbol</div>
<div class="t" style="left:98px;top:147px;font-size:14.6px;color:#111">Bid</div>
<div class="t" style="left:146px;top:147px;font-size:14.6px;color:#111">Ask</div>
<div class="t" style="left:188px;top:147px;font-size:14.6px;color:#111">!</div>
<div style="position:absolute;left:76px;top:142px;width:1px;height:26px;background:#e5e5e5"></div>
<div style="position:absolute;left:125px;top:142px;width:1px;height:26px;background:#e5e5e5"></div>
<div style="position:absolute;left:174px;top:142px;width:1px;height:26px;background:#e5e5e5"></div>
<div style="position:absolute;left:2px;top:168px;width:198px;height:25px;background:#f9dcd9;overflow:hidden"></div>
<div style="position:absolute;left:2px;top:168px;width:198px;height:25px;overflow:hidden">
<svg style="position:absolute;left:6px;top:6px" width="16" height="14" viewBox="0 0 16 14"><path d="M8 1 L15 8 L11 8 L11 13 L5 13 L5 8 L1 8 Z" fill="#3cc24a" stroke="#1f7a28" stroke-width="1"/><path d="M8 3 L12 7" stroke="#a8f0a0" stroke-width="1"/></svg>
<div class="t" style="left:26px;top:4px;font-size:14.6px;color:#111">USD<span style="letter-spacing:-1px">...</span></div>
<div class="t" style="left:83px;top:4px;font-size:14.6px;color:#2a2ac8">0.88<span style="letter-spacing:-1px">...</span></div>
<div class="t" style="left:132px;top:4px;font-size:14.6px;color:#2a2ac8">0.88<span style="letter-spacing:-1px">...</span></div>
<div class="t" style="left:186px;top:4px;font-size:14.6px;color:#2a2ac8"><span style="letter-spacing:-1px">..</span></div>
</div>
<div style="position:absolute;left:76px;top:168px;width:1px;height:25px;background:#d9c9c4"></div>
<div style="position:absolute;left:125px;top:168px;width:1px;height:25px;background:#d9c9c4"></div>
<div style="position:absolute;left:174px;top:168px;width:1px;height:25px;background:#d9c9c4"></div>
<div style="position:absolute;left:2px;top:168px;width:198px;height:1px;background:#dccbc6"></div>
<div style="position:absolute;left:2px;top:193px;width:198px;height:25px;background:#f9dcd9;overflow:hidden"></div>
<div style="position:absolute;left:2px;top:193px;width:198px;height:25px;overflow:hidden">
<svg style="position:absolute;left:6px;top:6px" width="16" height="14" viewBox="0 0 16 14"><path d="M8 13 L15 6 L11 6 L11 1 L5 1 L5 6 L1 6 Z" fill="#f0642a" stroke="#b03a10" stroke-width="1"/></svg>
<div class="t" style="left:26px;top:4px;font-size:14.6px;color:#111">GBP<span style="letter-spacing:-1px">...</span></div>
<div class="t" style="left:83px;top:4px;font-size:14.6px;color:#c83030">1.35<span style="letter-spacing:-1px">...</span></div>
<div class="t" style="left:132px;top:4px;font-size:14.6px;color:#c83030">1.36<span style="letter-spacing:-1px">...</span></div>
<div class="t" style="left:186px;top:4px;font-size:14.6px;color:#c83030"><span style="letter-spacing:-1px">..</span></div>
</div>
<div style="position:absolute;left:76px;top:193px;width:1px;height:25px;background:#d9c9c4"></div>
<div style="position:absolute;left:125px;top:193px;width:1px;height:25px;background:#d9c9c4"></div>
<div style="position:absolute;left:174px;top:193px;width:1px;height:25px;background:#d9c9c4"></div>
<div style="position:absolute;left:2px;top:193px;width:198px;height:1px;background:#dccbc6"></div>
<div style="position:absolute;left:2px;top:218px;width:198px;height:25px;background:#0a78d4"></div>
<div style="position:absolute;left:2px;top:218px;width:198px;height:25px;overflow:hidden">
<svg style="position:absolute;left:6px;top:6px" width="16" height="14" viewBox="0 0 16 14"><path d="M8 1 L15 8 L11 8 L11 13 L5 13 L5 8 L1 8 Z" fill="#3cc24a" stroke="#1f7a28" stroke-width="1"/><path d="M8 3 L12 7" stroke="#a8f0a0" stroke-width="1"/></svg>
<div class="t" style="left:26px;top:4px;font-size:14.6px;color:#fff">EUR<span style="letter-spacing:-1px">...</span></div>
<div class="t" style="left:83px;top:4px;font-size:14.6px;color:#fff">1.23<span style="letter-spacing:-1px">...</span></div>
<div class="t" style="left:132px;top:4px;font-size:14.6px;color:#fff">1.23<span style="letter-spacing:-1px">...</span></div>
<div class="t" style="left:186px;top:4px;font-size:14.6px;color:#fff"><span style="letter-spacing:-1px">..</span></div>
</div>
<div style="position:absolute;left:76px;top:218px;width:1px;height:25px;background:#5aa8e8"></div>
<div style="position:absolute;left:125px;top:218px;width:1px;height:25px;background:#5aa8e8"></div>
<div style="position:absolute;left:174px;top:218px;width:1px;height:25px;background:#5aa8e8"></div>
<div style="position:absolute;left:2px;top:243px;width:198px;height:25px;background:#f9dfdb;overflow:hidden"></div>
<div style="position:absolute;left:2px;top:243px;width:198px;height:25px;overflow:hidden">
<svg style="position:absolute;left:6px;top:6px" width="16" height="14" viewBox="0 0 16 14"><path d="M8 13 L15 6 L11 6 L11 1 L5 1 L5 6 L1 6 Z" fill="#f0642a" stroke="#b03a10" stroke-width="1"/></svg>
<div class="t" style="left:26px;top:4px;font-size:14.6px;color:#111">USD<span style="letter-spacing:-1px">...</span></div>
<div class="t" style="left:83px;top:4px;font-size:14.6px;color:#c83030">103<span style="letter-spacing:-1px">....</span></div>
<div class="t" style="left:132px;top:4px;font-size:14.6px;color:#c83030">103<span style="letter-spacing:-1px">....</span></div>
<div class="t" style="left:186px;top:4px;font-size:14.6px;color:#c83030"><span style="letter-spacing:-1px">..</span></div>
</div>
<div style="position:absolute;left:76px;top:243px;width:1px;height:25px;background:#d9c9c4"></div>
<div style="position:absolute;left:125px;top:243px;width:1px;height:25px;background:#d9c9c4"></div>
<div style="position:absolute;left:174px;top:243px;width:1px;height:25px;background:#d9c9c4"></div>
<div style="position:absolute;left:2px;top:243px;width:198px;height:1px;background:#dccbc6"></div>
<div style="position:absolute;left:2px;top:268px;width:198px;height:25px;background:#fae2dc;overflow:hidden"></div>
<div style="position:absolute;left:2px;top:268px;width:198px;height:25px;overflow:hidden">
<svg style="position:absolute;left:6px;top:6px" width="16" height="14" viewBox="0 0 16 14"><path d="M8 1 L15 8 L11 8 L11 13 L5 13 L5 8 L1 8 Z" fill="#3cc24a" stroke="#1f7a28" stroke-width="1"/><path d="M8 3 L12 7" stroke="#a8f0a0" stroke-width="1"/></svg>
<div class="t" style="left:26px;top:4px;font-size:14.6px;color:#111">USD<span style="letter-spacing:-1px">...</span></div>
<div class="t" style="left:83px;top:4px;font-size:14.6px;color:#2a2ac8">1.26<span style="letter-spacing:-1px">...</span></div>
<div class="t" style="left:132px;top:4px;font-size:14.6px;color:#2a2ac8">1.26<span style="letter-spacing:-1px">...</span></div>
<div class="t" style="left:186px;top:4px;font-size:14.6px;color:#2a2ac8"><span style="letter-spacing:-1px">..</span></div>
</div>
<div style="position:absolute;left:76px;top:268px;width:1px;height:25px;background:#d9c9c4"></div>
<div style="position:absolute;left:125px;top:268px;width:1px;height:25px;background:#d9c9c4"></div>
<div style="position:absolute;left:174px;top:268px;width:1px;height:25px;background:#d9c9c4"></div>
<div style="position:absolute;left:2px;top:268px;width:198px;height:1px;background:#dccbc6"></div>
<div style="position:absolute;left:2px;top:293px;width:198px;height:25px;background:#fbe2de;overflow:hidden"></div>
<div style="position:absolute;left:2px;top:293px;width:198px;height:25px;overflow:hidden">
<svg style="position:absolute;left:6px;top:6px" width="16" height="14" viewBox="0 0 16 14"><path d="M8 13 L15 6 L11 6 L11 1 L5 1 L5 6 L1 6 Z" fill="#f0642a" stroke="#b03a10" stroke-width="1"/></svg>
<div class="t" style="left:26px;top:4px;font-size:14.6px;color:#111">AUD<span style="letter-spacing:-1px">...</span></div>
<div class="t" style="left:83px;top:4px;font-size:14.6px;color:#c83030">0.77<span style="letter-spacing:-1px">...</span></div>
<div class="t" style="left:132px;top:4px;font-size:14.6px;color:#c83030">0.77<span style="letter-spacing:-1px">...</span></div>
<div class="t" style="left:186px;top:4px;font-size:14.6px;color:#c83030"><span style="letter-spacing:-1px">..</span></div>
</div>
<div style="position:absolute;left:76px;top:293px;width:1px;height:25px;background:#d9c9c4"></div>
<div style="position:absolute;left:125px;top:293px;width:1px;height:25px;background:#d9c9c4"></div>
<div style="position:absolute;left:174px;top:293px;width:1px;height:25px;background:#d9c9c4"></div>
<div style="position:absolute;left:2px;top:293px;width:198px;height:1px;background:#dccbc6"></div>
<div style="position:absolute;left:2px;top:318px;width:198px;height:25px;background:#fcede4;overflow:hidden"></div>
<div style="position:absolute;left:2px;top:318px;width:198px;height:25px;overflow:hidden">
<svg style="position:absolute;left:6px;top:6px" width="16" height="14" viewBox="0 0 16 14"><path d="M8 13 L15 6 L11 6 L11 1 L5 1 L5 6 L1 6 Z" fill="#f0642a" stroke="#b03a10" stroke-width="1"/></svg>
<div class="t" style="left:26px;top:4px;font-size:14.6px;color:#111">EUR<span style="letter-spacing:-1px">...</span></div>
<div class="t" style="left:83px;top:4px;font-size:14.6px;color:#c83030">0.90<span style="letter-spacing:-1px">...</span></div>
<div class="t" style="left:132px;top:4px;font-size:14.6px;color:#c83030">0.90<span style="letter-spacing:-1px">...</span></div>
<div class="t" style="left:186px;top:4px;font-size:14.6px;color:#c83030"><span style="letter-spacing:-1px">..</span></div>
</div>
<div style="position:absolute;left:76px;top:318px;width:1px;height:25px;background:#d9c9c4"></div>
<div style="position:absolute;left:125px;top:318px;width:1px;height:25px;background:#d9c9c4"></div>
<div style="position:absolute;left:174px;top:318px;width:1px;height:25px;background:#d9c9c4"></div>
<div style="position:absolute;left:2px;top:318px;width:198px;height:1px;background:#dccbc6"></div>
<div style="position:absolute;left:2px;top:343px;width:198px;height:25px;background:#fcede4;overflow:hidden"></div>
<div style="position:absolute;left:2px;top:343px;width:198px;height:25px;overflow:hidden">
<svg style="position:absolute;left:6px;top:6px" width="16" height="14" viewBox="0 0 16 14"><path d="M8 13 L15 6 L11 6 L11 1 L5 1 L5 6 L1 6 Z" fill="#f0642a" stroke="#b03a10" stroke-width="1"/></svg>
<div class="t" style="left:26px;top:4px;font-size:14.6px;color:#111">EUR<span style="letter-spacing:-1px">...</span></div>
<div class="t" style="left:83px;top:4px;font-size:14.6px;color:#c83030">1.58<span style="letter-spacing:-1px">...</span></div>
<div class="t" style="left:132px;top:4px;font-size:14.6px;color:#c83030">1.58<span style="letter-spacing:-1px">...</span></div>
<div class="t" style="left:186px;top:4px;font-size:14.6px;color:#c83030"><span style="letter-spacing:-1px">..</span></div>
</div>
<div style="position:absolute;left:76px;top:343px;width:1px;height:25px;background:#d9c9c4"></div>
<div style="position:absolute;left:125px;top:343px;width:1px;height:25px;background:#d9c9c4"></div>
<div style="position:absolute;left:174px;top:343px;width:1px;height:25px;background:#d9c9c4"></div>
<div style="position:absolute;left:2px;top:343px;width:198px;height:1px;background:#dccbc6"></div>
<div style="position:absolute;left:2px;top:368px;width:198px;height:25px;background:#fcefe6;overflow:hidden"></div>
<div style="position:absolute;left:2px;top:368px;width:198px;height:25px;overflow:hidden">
<svg style="position:absolute;left:6px;top:6px" width="16" height="14" viewBox="0 0 16 14"><path d="M8 1 L15 8 L11 8 L11 13 L5 13 L5 8 L1 8 Z" fill="#3cc24a" stroke="#1f7a28" stroke-width="1"/><path d="M8 3 L12 7" stroke="#a8f0a0" stroke-width="1"/></svg>
<div class="t" style="left:26px;top:4px;font-size:14.6px;color:#111">EUR<span style="letter-spacing:-1px">...</span></div>
<div class="t" style="left:83px;top:4px;font-size:14.6px;color:#2a2ac8">1.08<span style="letter-spacing:-1px">...</span></div>
<div class="t" style="left:132px;top:4px;font-size:14.6px;color:#2a2ac8">1.08<span style="letter-spacing:-1px">...</span></div>
<div class="t" style="left:186px;top:4px;font-size:14.6px;color:#2a2ac8"><span style="letter-spacing:-1px">..</span></div>
</div>
<div style="position:absolute;left:76px;top:368px;width:1px;height:25px;background:#d9c9c4"></div>
<div style="position:absolute;left:125px;top:368px;width:1px;height:25px;background:#d9c9c4"></div>
<div style="position:absolute;left:174px;top:368px;width:1px;height:25px;background:#d9c9c4"></div>
<div style="position:absolute;left:2px;top:368px;width:198px;height:1px;background:#dccbc6"></div>
<div style="position:absolute;left:2px;top:393px;width:198px;height:25px;background:#fcefe6;overflow:hidden"></div>
<div style="position:absolute;left:2px;top:393px;width:198px;height:25px;overflow:hidden">
<svg style="position:absolute;left:6px;top:6px" width="16" height="14" viewBox="0 0 16 14"><path d="M8 13 L15 6 L11 6 L11 1 L5 1 L5 6 L1 6 Z" fill="#f0642a" stroke="#b03a10" stroke-width="1"/></svg>
<div class="t" style="left:26px;top:4px;font-size:14.6px;color:#111">EUR<span style="letter-spacing:-1px">...</span></div>
<div class="t" style="left:83px;top:4px;font-size:14.6px;color:#c83030">127<span style="letter-spacing:-1px">....</span></div>
<div class="t" style="left:132px;top:4px;font-size:14.6px;color:#c83030">127<span style="letter-spacing:-1px">....</span></div>
<div class="t" style="left:186px;top:4px;font-size:14.6px;color:#c83030"><span style="letter-spacing:-1px">..</span></div>
</div>
<div style="position:absolute;left:76px;top:393px;width:1px;height:25px;background:#d9c9c4"></div>
<div style="position:absolute;left:125px;top:393px;width:1px;height:25px;background:#d9c9c4"></div>
<div style="position:absolute;left:174px;top:393px;width:1px;height:25px;background:#d9c9c4"></div>
<div style="position:absolute;left:2px;top:393px;width:198px;height:1px;background:#dccbc6"></div>
<div style="position:absolute;left:2px;top:418px;width:198px;height:25px;background:#fcefe6;overflow:hidden"></div>
<div style="position:absolute;left:2px;top:418px;width:198px;height:25px;overflow:hidden">
<svg style="position:absolute;left:6px;top:6px" width="16" height="14" viewBox="0 0 16 14"><path d="M8 13 L15 6 L11 6 L11 1 L5 1 L5 6 L1 6 Z" fill="#f0642a" stroke="#b03a10" stroke-width="1"/></svg>
<div class="t" style="left:26px;top:4px;font-size:14.6px;color:#111">GBP<span style="letter-spacing:-1px">...</span></div>
<div class="t" style="left:83px;top:4px;font-size:14.6px;color:#c83030">1.19<span style="letter-spacing:-1px">...</span></div>
<div class="t" style="left:132px;top:4px;font-size:14.6px;color:#c83030">1.19<span style="letter-spacing:-1px">...</span></div>
<div class="t" style="left:186px;top:4px;font-size:14.6px;color:#c83030"><span style="letter-spacing:-1px">..</span></div>
</div>
<div style="position:absolute;left:76px;top:418px;width:1px;height:25px;background:#d9c9c4"></div>
<div style="position:absolute;left:125px;top:418px;width:1px;height:25px;background:#d9c9c4"></div>
<div style="position:absolute;left:174px;top:418px;width:1px;height:25px;background:#d9c9c4"></div>
<div style="position:absolute;left:2px;top:418px;width:198px;height:1px;background:#dccbc6"></div>
<div style="position:absolute;left:2px;top:443px;width:198px;height:16px;background:#fcefe6;overflow:hidden"></div>
<div style="position:absolute;left:2px;top:443px;width:198px;height:16px;overflow:hidden">
<svg style="position:absolute;left:6px;top:6px" width="16" height="14" viewBox="0 0 16 14"><path d="M8 13 L15 6 L11 6 L11 1 L5 1 L5 6 L1 6 Z" fill="#f0642a" stroke="#b03a10" stroke-width="1"/></svg>
<div class="t" style="left:26px;top:4px;font-size:14.6px;color:#111">CAD<span style="letter-spacing:-1px">...</span></div>
<div class="t" style="left:83px;top:4px;font-size:14.6px;color:#c83030">81<span style="letter-spacing:-1px">....</span></div>
<div class="t" style="left:132px;top:4px;font-size:14.6px;color:#c83030">81<span style="letter-spacing:-1px">....</span></div>
<div class="t" style="left:186px;top:4px;font-size:14.6px;color:#c83030"><span style="letter-spacing:-1px">..</span></div>
</div>
<div style="position:absolute;left:76px;top:443px;width:1px;height:16px;background:#d9c9c4"></div>
<div style="position:absolute;left:125px;top:443px;width:1px;height:16px;background:#d9c9c4"></div>
<div style="position:absolute;left:174px;top:443px;width:1px;height:16px;background:#d9c9c4"></div>
<div style="position:absolute;left:2px;top:443px;width:198px;height:1px;background:#dccbc6"></div>
<div style="position:absolute;left:200px;top:142px;width:20px;height:317px;background:#f0f0f0"></div>
<svg style="position:absolute;left:203px;top:147px" width="14" height="10"><path d="M2 8 L7 3 L12 8" fill="none" stroke="#555" stroke-width="2"/></svg>
<div style="position:absolute;left:201px;top:163px;width:18px;height:132px;background:#cdcdcd"></div>
<svg style="position:absolute;left:203px;top:443px" width="14" height="10"><path d="M2 2 L7 7 L12 2" fill="none" stroke="#555" stroke-width="2"/></svg>
<div style="position:absolute;left:2px;top:459px;width:218px;height:30px;background:#f0f0f0;border-top:1px solid #222"></div>
<div style="position:absolute;left:5px;top:459px;width:79px;height:23px;background:#fff;border:1px solid #222;border-top:none"></div>
<div class="t" style="left:18px;top:463px;font-size:14.6px;color:#111">Symbols</div>
<div class="t" style="left:99px;top:463px;font-size:14.6px;color:#8a8a8a">Tick Chart</div>
<div style="position:absolute;left:176px;top:463px;width:1px;height:17px;background:#888"></div>
<div style="position:absolute;left:2px;top:495px;width:218px;height:16px;background:linear-gradient(90deg,#c7d6e6 0%,#d9e5f1 70%,#eef3f8 100%)"></div>
<div class="t" style="left:6px;top:494px;font-size:14.6px;color:#111">Navigator</div>
<div class="t" style="left:206px;top:493px;font-size:15px;color:#000">&#x2715;</div>
<div style="position:absolute;left:2px;top:512px;width:218px;height:318px;background:#fff;border-top:1px solid #c8c8c8"></div>
<div style="position:absolute;left:18px;top:535px;width:0;height:123px;border-left:1px dotted #888"></div>
<div style="position:absolute;left:18px;top:548px;width:14px;height:0;border-top:1px dotted #888"></div>
<div style="position:absolute;left:18px;top:613px;width:14px;height:0;border-top:1px dotted #888"></div>
<div style="position:absolute;left:18px;top:635px;width:14px;height:0;border-top:1px dotted #888"></div>
<div style="position:absolute;left:18px;top:657px;width:14px;height:0;border-top:1px dotted #888"></div>
<div style="position:absolute;left:44px;top:557px;width:0;height:13px;border-left:1px dotted #888"></div>
<div style="position:absolute;left:44px;top:570px;width:16px;height:0;border-top:1px dotted #888"></div>
<div style="position:absolute;left:70px;top:580px;width:0;height:12px;border-left:1px dotted #888"></div>
<div style="position:absolute;left:70px;top:592px;width:16px;height:0;border-top:1px dotted #888"></div>
<div style="position:absolute;left:13px;top:543px;width:9px;height:9px;border:1px solid #9a9a9a;background:#fafafa"></div><div style="position:absolute;left:15px;top:548px;width:6px;height:1px;background:#333"></div>
<div style="position:absolute;left:39px;top:565px;width:9px;height:9px;border:1px solid #9a9a9a;background:#fafafa"></div><div style="position:absolute;left:41px;top:570px;width:6px;height:1px;background:#333"></div>
<div style="position:absolute;left:13px;top:608px;width:9px;height:9px;border:1px solid #9a9a9a;background:#fafafa"></div><div style="position:absolute;left:15px;top:613px;width:6px;height:1px;background:#333"></div><div style="position:absolute;left:18px;top:610px;width:1px;height:6px;background:#333"></div>
<div style="position:absolute;left:13px;top:630px;width:9px;height:9px;border:1px solid #9a9a9a;background:#fafafa"></div><div style="position:absolute;left:15px;top:635px;width:6px;height:1px;background:#333"></div><div style="position:absolute;left:18px;top:632px;width:1px;height:6px;background:#333"></div>
<div style="position:absolute;left:13px;top:652px;width:9px;height:9px;border:1px solid #9a9a9a;background:#fafafa"></div><div style="position:absolute;left:15px;top:657px;width:6px;height:1px;background:#333"></div><div style="position:absolute;left:18px;top:654px;width:1px;height:6px;background:#333"></div>
<svg style="position:absolute;left:9px;top:516px" width="20" height="18"><rect x="1" y="1" width="13" height="10" fill="#e8f2fb" stroke="#5a8fc8"/><rect x="5" y="6" width="13" height="11" fill="#e8f2fb" stroke="#5a8fc8"/><path d="M7 13 q2-4 3 0 t3 0" stroke="#5a8fc8" fill="none"/></svg>
<div class="t" style="left:35px;top:517px;font-size:14.6px;color:#111">Prize Capital MT4</div>
<svg style="position:absolute;left:33px;top:537px" width="23" height="21"><circle cx="8" cy="6" r="4.5" fill="#f0b030" stroke="#a87010"/><circle cx="15" cy="8" r="4.5" fill="#f0b030" stroke="#a87010"/><path d="M1 20 q0-8 7-8 q7 0 7 8 z" fill="#3cb84a" stroke="#1f7a28"/><path d="M9 20 q0-7 6-7 q7 0 7 7 z" fill="#e8b830" stroke="#a87010"/></svg>
<div class="t" style="left:61px;top:539px;font-size:14.6px;color:#111">Accounts</div>
<svg style="position:absolute;left:62px;top:560px" width="16" height="20"><path d="M2 3 l4-2 h8 v16 l-4 2 h-8 z" fill="#3a8ee0" stroke="#1f5fa8"/><path d="M6 5 h6 M6 8 h6" stroke="#d8ecff"/></svg>
<div class="t" style="left:87px;top:561px;font-size:14.6px;color:#111">PrizeCapital-Demo</div>
<svg style="position:absolute;left:88px;top:582px" width="14" height="18"><circle cx="7" cy="5" r="4" fill="#f0b030" stroke="#a87010"/><path d="M1 17 q0-7 6-7 q6 0 6 7 z" fill="#3cb84a" stroke="#1f7a28"/></svg>
<svg style="position:absolute;left:34px;top:603px" width="19" height="19"><rect x="1" y="1" width="17" height="17" rx="3" fill="#f5d860" stroke="#b89020"/><text x="6" y="14" font-size="12" font-style="italic" font-weight="bold" font-family="Liberation Serif" fill="#7a5a10">f</text></svg>
<div class="t" style="left:61px;top:605px;font-size:14.6px;color:#111">Indicators</div>
<svg style="position:absolute;left:34px;top:625px" width="22" height="20"><ellipse cx="10" cy="7" rx="9" ry="4" fill="#4a9ad8" stroke="#2a6aa8"/><circle cx="10" cy="11" r="4" fill="#f0c040" stroke="#a88020"/><path d="M13 14 l5 5" stroke="#d8a830" stroke-width="3"/></svg>
<div class="t" style="left:61px;top:627px;font-size:14.6px;color:#111">Expert Advisors</div>
<svg style="position:absolute;left:34px;top:647px" width="22" height="20"><rect x="2" y="2" width="14" height="13" fill="#f8e8a8" stroke="#b89020"/><path d="M5 6 h8 M5 9 h6" stroke="#b89020"/><path d="M14 14 l5 5" stroke="#d8a830" stroke-width="3"/></svg>
<div class="t" style="left:61px;top:649px;font-size:14.6px;color:#111">Scripts</div>
<div style="position:absolute;left:2px;top:830px;width:218px;height:28px;background:#f0f0f0;border-top:1px solid #222"></div>
<div style="position:absolute;left:5px;top:830px;width:85px;height:23px;background:#fff;border:1px solid #222;border-top:none"></div>
<div class="t" style="left:18px;top:834px;font-size:14.6px;color:#111">Common</div>
<div style="position:absolute;left:0;top:861px;width:226px;height:1px;background:#c8c8c8"></div>
<div style="position:absolute;left:226px;top:839px;width:1660px;height:136px;background:#f0f0f0"></div>
<div style="position:absolute;left:0;top:862px;width:226px;height:113px;background:#f0f0f0"></div>
<div style="position:absolute;left:226px;top:839px;width:1660px;height:1px;background:#fafafa"></div>
<div style="position:absolute;left:226px;top:840px;width:1660px;height:28px;background:linear-gradient(#f4f4f4,#ececec)"></div>
<svg style="position:absolute;left:1874px;top:845px" width="6" height="8"><path d="M5 0 L0 4 L5 8 Z" fill="#999"/></svg>
<div class="t" style="left:1px;top:866px;font-size:14.6px;color:#000">&#x2715;</div>
<div style="position:absolute;left:0;top:885px;width:17px;height:90px;background:linear-gradient(90deg,#c6d3e1,#d2dde8)"></div>
<div class="t" style="left:-21px;top:955px;font-size:14.6px;color:#111;transform:rotate(-90deg);transform-origin:center;width:60px;text-align:center">Terminal</div>
<div style="position:absolute;left:17px;top:868px;width:1869px;height:98px;background:#fff;border-top:1px solid #d0d0d0"></div>
<div style="position:absolute;left:17px;top:895px;width:1869px;height:1px;background:#e2e2e2"></div>
<div style="position:absolute;left:17px;top:920px;width:1869px;height:25px;background:#c8c8c8"></div>
<div style="position:absolute;left:17px;top:966px;width:1869px;height:2px;background:#3a3a3a"></div>
<div style="position:absolute;left:17px;top:968px;width:1869px;height:7px;background:#f0f0f0"></div>
<div style="position:absolute;left:18px;top:966px;width:63px;height:12px;background:#fff;border-left:2px solid #222;border-right:1px solid #222"></div>
<div class="t" style="left:33px;top:969px;font-size:14.6px;color:#111">Trade</div>
<div style="position:absolute;left:83px;top:968px;width:16px;height:8px;background:linear-gradient(90deg,#f4f4f4,#dcdcdc);border-left:1px solid #222"></div>
<div style="position:absolute;left:1113px;top:869px;width:1px;height:51px;background:#e4e4e4"></div>
<div style="position:absolute;left:1257px;top:869px;width:1px;height:51px;background:#e4e4e4"></div>
<div style="position:absolute;left:1401px;top:869px;width:1px;height:51px;background:#e4e4e4"></div>
<div style="position:absolute;left:1545px;top:869px;width:1px;height:51px;background:#e4e4e4"></div>
<div style="position:absolute;left:1689px;top:869px;width:1px;height:51px;background:#e4e4e4"></div>
<div class="t" style="left:908px;top:874px;width:200px;text-align:right;font-size:14.6px;color:#111">S / L</div>
<div class="t" style="left:1052px;top:874px;width:200px;text-align:right;font-size:14.6px;color:#111">T / P</div>
<div class="t" style="left:1196px;top:874px;width:200px;text-align:right;font-size:14.6px;color:#111">Price</div>
<div class="t" style="left:1340px;top:874px;width:200px;text-align:right;font-size:14.6px;color:#111">Commission</div>
<div class="t" style="left:1484px;top:874px;width:200px;text-align:right;font-size:14.6px;color:#111">Swap</div>
<div class="t" style="left:1868px;top:873px;font-size:14.6px;color:#111">Pro</div>
<div class="t" style="left:909px;top:899px;width:200px;text-align:right;font-size:14.6px;color:#111">0.00000</div>
<div class="t" style="left:1053px;top:899px;width:200px;text-align:right;font-size:14.6px;color:#111">0.00000</div>
<div class="t" style="left:1196px;top:899px;width:200px;text-align:right;font-size:14.6px;color:#111">1.23043</div>
<div class="t" style="left:1340px;top:899px;width:200px;text-align:right;font-size:14.6px;color:#111">0.00</div>
<div class="t" style="left:1484px;top:899px;width:200px;text-align:right;font-size:14.6px;color:#111">0.00</div>
<div class="t" style="left:1680px;top:899px;width:200px;text-align:right;font-size:14.6px;color:#111">-39.00</div>
<div class="t" style="left:1680px;top:924px;width:200px;text-align:right;font-size:14.6px;font-weight:bold;color:#111">-39.00</div>
<div class="t" style="left:24px;top:873px;font-size:14.6px;color:#111">Order</div>
<div class="t" style="left:73px;top:873px;font-size:10px;color:#666">/</div>
<svg style="position:absolute;left:21px;top:898px" width="20" height="20"><path d="M1.5 1.5 h10 l4 4 v12 h-14 z" fill="#fff" stroke="#888"/><circle cx="14" cy="15" r="4" fill="#e0502a" stroke="#a83010"/></svg>
<div class="t" style="left:45px;top:898px;font-size:14.6px;color:#111">3014553</div>
<svg style="position:absolute;left:21px;top:923px" width="18" height="20"><rect x="1.5" y="1.5" width="14" height="16" fill="#fff" stroke="#888"/><path d="M8.5 15 l5-5 h-3 v-5 h-4 v5 h-3 z" fill="#e0502a"/></svg>
<div class="t" style="left:45px;top:923px;font-size:14.6px;font-weight:bold;color:#111">Balance</div>
<div style="position:absolute;left:99px;top:586px;width:880px;height:395px;background:#f0f0f0;box-shadow:0 0 6px rgba(0,0,0,0.35);border:1px solid #9a9a9a;box-sizing:border-box"></div>
<div style="position:absolute;left:100px;top:587px;width:878px;height:37px;background:#fff"></div>
<div class="t" style="left:109px;top:597px;font-size:15px;color:#111">Order</div>
<div style="position:absolute;left:825px;top:604px;width:13px;height:1px;background:#222"></div>
<div style="position:absolute;left:884px;top:599px;width:11px;height:11px;border:1px solid #c8c8c8"></div>
<svg style="position:absolute;left:942px;top:598px" width="14" height="14"><path d="M1 1 L13 13 M13 1 L1 13" stroke="#222" stroke-width="1.2"/></svg>
<div style="position:absolute;left:109px;top:640px;width:349px;height:335px;background:#fff;border-top:2px solid #8a8a8a;border-left:2px solid #8a8a8a;border-right:1px solid #dcdcdc;box-sizing:border-box"></div>
<svg style="position:absolute;left:110px;top:642px" width="347" height="333" viewBox="110 642 347 333"><line x1="146.5" y1="645" x2="146.5" y2="975" stroke="#c4c4c4" stroke-dasharray="3 3"/><line x1="178.5" y1="645" x2="178.5" y2="975" stroke="#c4c4c4" stroke-dasharray="3 3"/><line x1="210.5" y1="645" x2="210.5" y2="975" stroke="#c4c4c4" stroke-dasharray="3 3"/><line x1="242.5" y1="645" x2="242.5" y2="975" stroke="#c4c4c4" stroke-dasharray="3 3"/><line x1="274.5" y1="645" x2="274.5" y2="975" stroke="#c4c4c4" stroke-dasharray="3 3"/><line x1="306.5" y1="645" x2="306.5" y2="975" stroke="#c4c4c4" stroke-dasharray="3 3"/><line x1="338.5" y1="645" x2="338.5" y2="975" stroke="#c4c4c4" stroke-dasharray="3 3"/><line x1="370.5" y1="645" x2="370.5" y2="975" stroke="#c4c4c4" stroke-dasharray="3 3"/><line x1="114" y1="654.5" x2="396" y2="654.5" stroke="#c4c4c4" stroke-dasharray="3 3"/><line x1="114" y1="686.5" x2="396" y2="686.5" stroke="#c4c4c4" stroke-dasharray="3 3"/><line x1="114" y1="718.5" x2="396" y2="718.5" stroke="#c4c4c4" stroke-dasharray="3 3"/><line x1="114" y1="750.5" x2="396" y2="750.5" stroke="#c4c4c4" stroke-dasharray="3 3"/><line x1="114" y1="782.5" x2="396" y2="782.5" stroke="#c4c4c4" stroke-dasharray="3 3"/><line x1="114" y1="814.5" x2="396" y2="814.5" stroke="#c4c4c4" stroke-dasharray="3 3"/><line x1="114" y1="846.5" x2="396" y2="846.5" stroke="#c4c4c4" stroke-dasharray="3 3"/><line x1="114" y1="878.5" x2="396" y2="878.5" stroke="#c4c4c4" stroke-dasharray="3 3"/><line x1="114" y1="910.5" x2="396" y2="910.5" stroke="#c4c4c4" stroke-dasharray="3 3"/><line x1="114" y1="942.5" x2="396" y2="942.5" stroke="#c4c4c4" stroke-dasharray="3 3"/><line x1="114" y1="974.5" x2="396" y2="974.5" stroke="#c4c4c4" stroke-dasharray="3 3"/><polyline points="115.4,676.6 116.5,669.8 117.5,663.8 118.6,661.6 119.7,663.0 120.8,663.4 121.9,664.9 123.0,670.0 124.0,674.7 125.0,683.8 126.0,688.4 127.0,691.7 127.9,690.1 128.8,682.9 129.7,681.6 130.6,676.4 131.5,674.5 132.6,677.9 133.6,683.2 134.7,691.7 135.8,685.5 136.9,686.2 138.0,679.0 139.0,677.0 140.0,672.4 141.0,668.1 142.0,661.6 143.2,666.6 144.3,674.5 145.5,683.0 146.6,689.5 147.7,695.9 148.7,702.4 149.8,705.6 150.9,704.2 151.9,694.7 152.9,694.3 154.0,689.5 154.9,693.4 155.9,694.9 156.8,695.3 157.8,700.1 158.8,700.1 159.7,708.7 160.7,710.9 161.6,711.0 162.5,708.9 163.5,704.8 164.4,706.7 165.3,702.0 166.3,701.7 167.2,699.1 168.1,694.3 169.1,691.3 170.0,689.5 171.2,697.7 172.3,704.5 173.2,701.7 174.1,697.5 175.0,696.2 176.0,697.5 176.9,689.8 177.8,687.5 178.7,688.4 179.6,690.3 180.5,688.8 181.4,691.5 182.3,692.1 183.2,692.1 184.1,697.7 185.0,693.0 185.9,695.5 186.8,695.0 187.7,699.0 188.6,697.5 189.5,700.0 190.6,708.8 191.6,719.6 192.5,718.1 193.4,711.8 194.3,710.2 195.2,709.4 196.1,700.5 197.0,700.0 197.9,701.3 198.8,706.8 199.7,714.9 200.6,718.1 201.5,719.8 202.4,726.0 203.3,722.1 204.3,718.4 205.2,717.7 206.2,712.0 207.2,713.9 208.1,712.6 209.1,710.4 210.0,704.5 211.0,701.6 212.0,698.7 213.0,687.6 214.0,685.0 215.0,682.0 216.2,694.2 217.3,701.8 218.5,708.8 219.6,700.2 220.6,696.0 221.7,685.0 222.8,687.2 223.8,689.9 224.9,687.6 225.9,688.2 227.0,691.7 227.9,695.0 228.8,696.6 229.7,702.0 230.6,709.8 231.5,709.1 232.4,714.0 233.7,733.6 235.0,760.0 236.0,776.8 237.0,800.0 238.0,820.7 239.0,846.0 240.0,841.3 241.0,831.7 242.0,826.0 243.0,836.2 244.0,846.5 245.0,864.4 246.0,872.1 247.0,882.3 248.0,896.0 249.0,878.4 250.0,863.9 251.0,850.2 252.0,838.0 253.0,841.9 254.0,840.9 255.0,846.0 256.0,850.3 257.0,860.9 258.0,866.7 259.0,876.0 260.0,865.2 261.0,844.9 262.0,833.5 263.0,819.0 264.0,832.6 265.0,841.7 266.0,854.0 267.0,853.1 268.0,845.2 269.0,839.2 270.0,836.0 271.0,829.1 272.0,828.0 273.0,832.4 274.0,838.0 275.0,830.5 276.0,823.0 277.0,815.5 277.9,815.5 278.8,815.5 279.7,815.5 280.6,815.5 281.5,815.5 282.4,815.5 283.3,815.5 284.2,815.5 285.1,815.5 286.0,815.5 286.9,815.5 287.8,815.5 288.7,815.5 289.6,815.5 290.5,815.5 291.4,815.5 292.3,815.5 293.2,815.5 294.1,815.5 295.0,815.5 295.9,815.5 296.8,815.5 297.7,815.5 298.6,815.5 299.5,815.5 300.4,815.5 301.3,815.5 302.2,815.5 303.1,815.5 304.0,815.5 304.9,815.5 305.8,815.5 306.8,815.5 307.7,815.5 308.6,815.5 309.5,815.5 310.4,815.5 311.3,815.5 312.2,815.5 313.1,815.5 314.0,815.5 314.9,815.5 315.8,815.5 316.7,815.5 317.6,815.5 318.5,815.5 319.4,815.5 320.3,815.5 321.2,815.5 322.1,815.5 323.0,815.5 323.9,815.5 324.8,815.5 325.7,815.5 326.6,815.5 327.5,815.5 328.4,815.5 329.3,815.5 330.2,815.5 331.1,815.5 332.0,815.5 332.9,815.5 333.8,815.5 334.7,815.5 335.6,815.5 336.5,815.5 337.4,815.5 338.3,815.5 339.2,815.5 340.1,815.5 341.0,815.5 341.9,815.5 342.8,815.5 343.7,815.5 344.6,815.5 345.5,815.5 346.4,815.5 347.3,815.5 348.2,815.5 349.1,815.5 350.0,815.5 350.9,815.5 351.8,815.5 352.7,815.5 353.6,815.5 354.5,815.5 355.4,815.5 356.3,815.5 357.2,815.5 358.1,815.5 359.0,815.5 359.9,815.5 360.8,815.5 361.7,815.5 362.6,815.5 363.5,815.5 364.4,815.5 365.3,815.5 366.2,815.5 367.2,815.5 368.1,815.5 369.0,815.5 369.9,815.5 370.8,815.5 371.7,815.5 372.6,815.5 373.5,815.5 374.4,815.5 375.3,815.5 376.2,815.5 377.1,815.5 378.0,815.5 378.9,815.5 379.8,815.5 380.7,815.5 381.6,815.5 382.5,815.5 383.4,815.5 384.3,815.5 385.2,815.5 386.1,815.5 387.0,815.5 387.9,815.5 388.8,815.5 389.7,815.5 390.6,815.5 391.5,815.5 392.4,815.5 393.3,815.5 394.2,815.5 395.1,815.5 396.0,815.5" fill="none" stroke="#e0707a" stroke-width="1"/><polyline points="115.0,808.0 116.0,801.7 117.0,801.7 118.0,796.8 119.0,790.0 120.0,795.1 121.0,797.0 122.0,803.7 123.0,808.8 124.0,813.7 125.0,819.0 126.0,826.0 127.0,825.2 128.0,816.7 129.0,812.7 130.0,815.4 131.0,809.0 132.0,814.2 133.0,821.9 134.0,822.6 135.0,828.0 136.0,825.9 137.0,819.4 138.0,815.5 139.0,810.3 140.0,803.7 141.0,796.0 142.0,794.0 143.0,797.7 144.0,808.1 145.0,814.0 146.0,820.0 147.0,821.6 148.0,829.6 149.0,836.3 150.0,840.0 151.0,835.7 152.0,831.7 153.0,824.4 154.0,819.0 155.0,824.7 156.0,829.6 157.0,831.4 158.0,840.6 159.0,845.5 160.0,847.0 161.0,840.0 162.0,842.3 163.0,838.2 164.0,832.2 165.0,827.0 166.0,825.7 167.0,833.5 168.0,830.0 169.0,837.7 170.0,837.5 171.0,835.1 172.0,840.0 173.0,834.7 174.0,834.9 175.0,831.5 176.0,829.7 177.0,828.0 178.0,822.0 178.9,821.0 179.8,820.5 180.7,828.0 181.6,822.6 182.5,829.6 183.4,825.3 184.3,831.2 185.2,832.0 186.1,833.6 187.0,832.0 188.0,836.2 189.0,842.3 190.0,841.3 191.0,848.4 192.0,851.0 193.0,845.6 194.0,845.3 195.0,840.3 196.0,834.0 197.0,830.0 198.0,834.9 199.0,836.0 200.0,840.7 201.0,849.3 202.0,853.3 203.0,858.0 204.0,855.8 205.0,849.3 206.0,841.2 207.0,838.0 208.0,836.1 209.0,829.7 210.0,821.3 211.0,820.0 212.0,820.4 213.0,818.3 214.0,811.1 215.0,812.0 216.0,819.3 217.0,825.2 218.0,835.0 219.0,840.0 220.0,830.7 221.0,822.1 222.0,816.0 222.9,818.7 223.8,824.9 224.7,821.6 225.6,824.5 226.5,830.8 227.4,835.5 228.3,835.7 229.2,837.9 230.1,843.7 231.0,844.0 232.0,856.9 233.0,863.0 234.0,879.7 235.0,888.0 236.0,903.9 237.0,922.6 238.0,944.4 239.0,960.0 240.0,966.1 241.0,975.4 242.0,980.0 242.9,976.5 243.8,980.2 244.7,974.1 245.6,972.7 246.5,974.0 247.4,971.7 248.3,971.9 249.2,973.2 250.1,970.7 251.0,968.0 252.0,967.5 253.0,972.7 254.0,977.3 255.0,980.0 256.0,975.6 257.0,972.9 258.0,967.0 259.0,959.9 260.0,956.8 261.0,956.7 262.0,950.0 263.0,955.0 264.0,963.9 265.0,971.4 266.0,974.9 267.0,980.0 268.0,976.4 269.0,971.2 270.0,964.3 271.0,963.7 272.0,956.0 273.0,953.9 274.0,951.8 275.0,949.7 276.0,947.6 277.0,945.5 277.9,945.5 278.8,945.5 279.7,945.5 280.6,945.5 281.5,945.5 282.4,945.5 283.3,945.5 284.2,945.5 285.1,945.5 286.0,945.5 286.9,945.5 287.8,945.5 288.7,945.5 289.6,945.5 290.5,945.5 291.4,945.5 292.3,945.5 293.2,945.5 294.1,945.5 295.0,945.5 295.9,945.5 296.8,945.5 297.7,945.5 298.6,945.5 299.5,945.5 300.4,945.5 301.3,945.5 302.2,945.5 303.1,945.5 304.0,945.5 304.9,945.5 305.8,945.5 306.8,945.5 307.7,945.5 308.6,945.5 309.5,945.5 310.4,945.5 311.3,945.5 312.2,945.5 313.1,945.5 314.0,945.5 314.9,945.5 315.8,945.5 316.7,945.5 317.6,945.5 318.5,945.5 319.4,945.5 320.3,945.5 321.2,945.5 322.1,945.5 323.0,945.5 323.9,945.5 324.8,945.5 325.7,945.5 326.6,945.5 327.5,945.5 328.4,945.5 329.3,945.5 330.2,945.5 331.1,945.5 332.0,945.5 332.9,945.5 333.8,945.5 334.7,945.5 335.6,945.5 336.5,945.5 337.4,945.5 338.3,945.5 339.2,945.5 340.1,945.5 341.0,945.5 341.9,945.5 342.8,945.5 343.7,945.5 344.6,945.5 345.5,945.5 346.4,945.5 347.3,945.5 348.2,945.5 349.1,945.5 350.0,945.5 350.9,945.5 351.8,945.5 352.7,945.5 353.6,945.5 354.5,945.5 355.4,945.5 356.3,945.5 357.2,945.5 358.1,945.5 359.0,945.5 359.9,945.5 360.8,945.5 361.7,945.5 362.6,945.5 363.5,945.5 364.4,945.5 365.3,945.5 366.2,945.5 367.2,945.5 368.1,945.5 369.0,945.5 369.9,945.5 370.8,945.5 371.7,945.5 372.6,945.5 373.5,945.5 374.4,945.5 375.3,945.5 376.2,945.5 377.1,945.5 378.0,945.5 378.9,945.5 379.8,945.5 380.7,945.5 381.6,945.5 382.5,945.5 383.4,945.5 384.3,945.5 385.2,945.5 386.1,945.5 387.0,945.5 387.9,945.5 388.8,945.5 389.7,945.5 390.6,945.5 391.5,945.5 392.4,945.5 393.3,945.5 394.2,945.5 395.1,945.5 396.0,945.5" fill="none" stroke="#2a5aa8" stroke-width="1.1"/><path d="M113.5 975 V644.5 H396.5 V975" fill="none" stroke="#111" stroke-width="1.6"/><line x1="397" y1="656.5" x2="400" y2="656.5" stroke="#111"/><line x1="397" y1="688.5" x2="400" y2="688.5" stroke="#111"/><line x1="397" y1="720.5" x2="400" y2="720.5" stroke="#111"/><line x1="397" y1="752.5" x2="400" y2="752.5" stroke="#111"/><line x1="397" y1="784.5" x2="400" y2="784.5" stroke="#111"/><line x1="397" y1="816.5" x2="400" y2="816.5" stroke="#111"/><line x1="397" y1="848.5" x2="400" y2="848.5" stroke="#111"/><line x1="397" y1="880.5" x2="400" y2="880.5" stroke="#111"/><line x1="397" y1="912.5" x2="400" y2="912.5" stroke="#111"/><line x1="397" y1="946.5" x2="400" y2="946.5" stroke="#111"/></svg>
<div class="t" style="left:116px;top:647px;font-size:11.5px;color:#111">EURUSD</div>
<div class="t" style="left:403px;top:650px;font-size:13px;color:#111">1.23087</div>
<div class="t" style="left:403px;top:682px;font-size:13px;color:#111">1.23078</div>
<div class="t" style="left:403px;top:714px;font-size:13px;color:#111">1.23069</div>
<div class="t" style="left:403px;top:746px;font-size:13px;color:#111">1.23061</div>
<div class="t" style="left:403px;top:778px;font-size:13px;color:#111">1.23052</div>
<div class="t" style="left:403px;top:842px;font-size:13px;color:#111">1.23034</div>
<div class="t" style="left:403px;top:874px;font-size:13px;color:#111">1.23025</div>
<div class="t" style="left:403px;top:906px;font-size:13px;color:#111">1.23016</div>
<div style="position:absolute;left:398px;top:810px;width:55px;height:15px;background:#e86a6a"></div>
<div class="t" style="left:403px;top:810px;font-size:13px;color:#fff">1.23043</div>
<div style="position:absolute;left:398px;top:940px;width:55px;height:15px;background:#1a6ad8"></div>
<div class="t" style="left:403px;top:940px;font-size:13px;color:#fff">1.23007</div>
<div class="t" style="left:422px;top:646px;width:150px;text-align:right;font-size:13px;color:#111">Symbol:</div>
<div style="position:absolute;left:581px;top:640px;width:376px;height:24px;background:#e5e5e5;border:1px solid #adadad;box-sizing:border-box"></div><div class="t" style="left:586px;top:645px;font-size:13px;letter-spacing:-0.35px;color:#111">EURUSD, Euro vs US Dollar</div><svg style="position:absolute;left:941px;top:648px" width="11" height="7"><path d="M0.5 0.5 L5.5 5.5 L10.5 0.5" fill="none" stroke="#333" stroke-width="1"/></svg>
<div class="t" style="left:422px;top:678px;width:150px;text-align:right;font-size:13px;color:#111">Volume:</div>
<div style="position:absolute;left:581px;top:672px;width:123px;height:24px;background:#fff;border:1px solid #7a7a7a;box-sizing:border-box"></div><div class="t" style="left:586px;top:677px;font-size:13px;letter-spacing:-0.35px;color:#111">1.00</div><svg style="position:absolute;left:688px;top:680px" width="11" height="7"><path d="M0.5 0.5 L5.5 5.5 L10.5 0.5" fill="none" stroke="#333" stroke-width="1"/></svg>
<div class="t" style="left:422px;top:710px;width:150px;text-align:right;font-size:13px;color:#111">Stop Loss:</div>
<div style="position:absolute;left:581px;top:704px;width:123px;height:24px;background:#fff;border:1px solid #7a7a7a;box-sizing:border-box"></div><div class="t" style="left:479px;top:709px;width:200px;text-align:right;font-size:13px;color:#111">0.00000</div><div style="position:absolute;left:682px;top:705px;width:20px;height:22px;background:#f0f0f0;border-left:1px solid #c8c8c8"></div><div style="position:absolute;left:683px;top:715px;width:20px;height:1px;background:#c8c8c8"></div><svg style="position:absolute;left:688px;top:707px" width="10" height="17"><path d="M1 6 L5 1.5 L9 6 Z M1 11 L5 15.5 L9 11 Z" fill="#111"/></svg>
<div class="t" style="left:676px;top:710px;width:150px;text-align:right;font-size:13px;color:#111">Take Profit:</div>
<div style="position:absolute;left:835px;top:704px;width:123px;height:24px;background:#fff;border:1px solid #7a7a7a;box-sizing:border-box"></div><div class="t" style="left:733px;top:709px;width:200px;text-align:right;font-size:13px;color:#111">0.00000</div><div style="position:absolute;left:936px;top:705px;width:20px;height:22px;background:#f0f0f0;border-left:1px solid #c8c8c8"></div><div style="position:absolute;left:937px;top:715px;width:20px;height:1px;background:#c8c8c8"></div><svg style="position:absolute;left:942px;top:707px" width="10" height="17"><path d="M1 6 L5 1.5 L9 6 Z M1 11 L5 15.5 L9 11 Z" fill="#111"/></svg>
<div class="t" style="left:422px;top:742px;width:150px;text-align:right;font-size:13px;color:#111">Comment:</div>
<div style="position:absolute;left:581px;top:736px;width:376px;height:24px;background:#fff;border:1px solid #7a7a7a;box-sizing:border-box"></div>
<div class="t" style="left:422px;top:774px;width:150px;text-align:right;font-size:13px;color:#111">Type:</div>
<div style="position:absolute;left:581px;top:768px;width:376px;height:24px;background:#e5e5e5;border:1px solid #adadad;box-sizing:border-box"></div><div class="t" style="left:586px;top:773px;font-size:13px;letter-spacing:-0.35px;color:#111">Market Execution</div><svg style="position:absolute;left:941px;top:776px" width="11" height="7"><path d="M0.5 0.5 L5.5 5.5 L10.5 0.5" fill="none" stroke="#333" stroke-width="1"/></svg>
<div style="position:absolute;left:468px;top:812px;width:499px;height:170px;border:1px solid #dcdcdc;box-sizing:border-box"></div>
<div class="t" style="left:474px;top:806px;font-size:13px;color:#111;background:#f0f0f0;padding:0 3px">Market Execution</div>
<div class="t" style="left:590px;top:847px;font-size:33px;color:#111;white-space:pre">1.2300<span style="font-size:24px">7</span> / 1.2304<span style="font-size:24px">3</span></div>
<div style="position:absolute;left:487px;top:905px;width:217px;height:25px;background:#ff7b7b;border:1px solid #b8a8a8;box-sizing:border-box;box-shadow:inset 0 0 0 1px #f8a0a0"></div>
<div class="t" style="left:487px;top:912px;width:217px;text-align:center;font-size:13px;color:#222">Sell by Market</div>
<div style="position:absolute;left:732px;top:905px;width:217px;height:25px;background:#8cb6fa;border:1px solid #a0aac8;box-sizing:border-box;box-shadow:inset 0 0 0 1px #b0ccf8"></div>
<div class="t" style="left:732px;top:912px;width:217px;text-align:center;font-size:13px;color:#222">Buy by Market</div>
<div style="position:absolute;left:487px;top:941px;width:462px;height:26px;background:#cbcbcb"></div>
<svg style="position:absolute;left:0;top:0;pointer-events:none" width="1886" height="975" viewBox="0 0 1886 975"><g transform="translate(194 207) rotate(-10)"><rect x="-38" y="-38" width="76" height="76" rx="10" fill="#f3d060" opacity="0.17"/></g><text x="254" y="229" transform="rotate(-14 254 229)" font-family="Liberation Sans" font-weight="bold" font-size="66" fill="#888" opacity="0.08">WikiFX</text><g transform="translate(803 207) rotate(-10)"><rect x="-38" y="-38" width="76" height="76" rx="10" fill="#f3d060" opacity="0.17"/></g><text x="863" y="229" transform="rotate(-14 863 229)" font-family="Liberation Sans" font-weight="bold" font-size="66" fill="#888" opacity="0.08">WikiFX</text><g transform="translate(1412 207) rotate(-10)"><rect x="-38" y="-38" width="76" height="76" rx="10" fill="#f3d060" opacity="0.17"/></g><text x="1472" y="229" transform="rotate(-14 1472 229)" font-family="Liberation Sans" font-weight="bold" font-size="66" fill="#888" opacity="0.08">WikiFX</text><g transform="translate(194 560) rotate(-10)"><rect x="-38" y="-38" width="76" height="76" rx="10" fill="#f3d060" opacity="0.17"/></g><text x="254" y="582" transform="rotate(-14 254 582)" font-family="Liberation Sans" font-weight="bold" font-size="66" fill="#888" opacity="0.08">WikiFX</text><g transform="translate(803 560) rotate(-10)"><rect x="-38" y="-38" width="76" height="76" rx="10" fill="#f3d060" opacity="0.17"/></g><text x="863" y="582" transform="rotate(-14 863 582)" font-family="Liberation Sans" font-weight="bold" font-size="66" fill="#888" opacity="0.08">WikiFX</text><g transform="translate(1412 560) rotate(-10)"><rect x="-38" y="-38" width="76" height="76" rx="10" fill="#f3d060" opacity="0.17"/></g><text x="1472" y="582" transform="rotate(-14 1472 582)" font-family="Liberation Sans" font-weight="bold" font-size="66" fill="#888" opacity="0.08">WikiFX</text><g transform="translate(194 912) rotate(-10)"><rect x="-38" y="-38" width="76" height="76" rx="10" fill="#f3d060" opacity="0.17"/></g><text x="254" y="934" transform="rotate(-14 254 934)" font-family="Liberation Sans" font-weight="bold" font-size="66" fill="#888" opacity="0.08">WikiFX</text><g transform="translate(803 912) rotate(-10)"><rect x="-38" y="-38" width="76" height="76" rx="10" fill="#f3d060" opacity="0.17"/></g><text x="863" y="934" transform="rotate(-14 863 934)" font-family="Liberation Sans" font-weight="bold" font-size="66" fill="#888" opacity="0.08">WikiFX</text><g transform="translate(1412 912) rotate(-10)"><rect x="-38" y="-38" width="76" height="76" rx="10" fill="#f3d060" opacity="0.17"/></g><text x="1472" y="934" transform="rotate(-14 1472 934)" font-family="Liberation Sans" font-weight="bold" font-size="66" fill="#888" opacity="0.08">WikiFX</text></svg><svg style="position:absolute;left:0;top:0;pointer-events:none;mix-blend-mode:multiply" width="1886" height="975" viewBox="0 0 1886 975"><g transform="translate(194 207) rotate(-10)" fill="#dcdcdc"><path d="M-24 -4 A25 25 0 0 1 14 -22 L8 -14 A16 16 0 0 0 -14 -2 Z"/><path d="M24 6 A25 25 0 0 1 -12 23 L-6 15 A16 16 0 0 0 14 4 Z"/><path d="M-20 10 Q-4 -8 20 -6 L16 2 Q0 0 -12 14 Z"/></g><text x="254" y="229" transform="rotate(-14 254 229)" font-family="Liberation Sans" font-weight="bold" font-size="66" fill="#ebebeb">WikiFX</text><g transform="translate(803 207) rotate(-10)" fill="#dcdcdc"><path d="M-24 -4 A25 25 0 0 1 14 -22 L8 -14 A16 16 0 0 0 -14 -2 Z"/><path d="M24 6 A25 25 0 0 1 -12 23 L-6 15 A16 16 0 0 0 14 4 Z"/><path d="M-20 10 Q-4 -8 20 -6 L16 2 Q0 0 -12 14 Z"/></g><text x="863" y="229" transform="rotate(-14 863 229)" font-family="Liberation Sans" font-weight="bold" font-size="66" fill="#ebebeb">WikiFX</text><g transform="translate(1412 207) rotate(-10)" fill="#dcdcdc"><path d="M-24 -4 A25 25 0 0 1 14 -22 L8 -14 A16 16 0 0 0 -14 -2 Z"/><path d="M24 6 A25 25 0 0 1 -12 23 L-6 15 A16 16 0 0 0 14 4 Z"/><path d="M-20 10 Q-4 -8 20 -6 L16 2 Q0 0 -12 14 Z"/></g><text x="1472" y="229" transform="rotate(-14 1472 229)" font-family="Liberation Sans" font-weight="bold" font-size="66" fill="#ebebeb">WikiFX</text><g transform="translate(194 560) rotate(-10)" fill="#dcdcdc"><path d="M-24 -4 A25 25 0 0 1 14 -22 L8 -14 A16 16 0 0 0 -14 -2 Z"/><path d="M24 6 A25 25 0 0 1 -12 23 L-6 15 A16 16 0 0 0 14 4 Z"/><path d="M-20 10 Q-4 -8 20 -6 L16 2 Q0 0 -12 14 Z"/></g><text x="254" y="582" transform="rotate(-14 254 582)" font-family="Liberation Sans" font-weight="bold" font-size="66" fill="#ebebeb">WikiFX</text><g transform="translate(803 560) rotate(-10)" fill="#dcdcdc"><path d="M-24 -4 A25 25 0 0 1 14 -22 L8 -14 A16 16 0 0 0 -14 -2 Z"/><path d="M24 6 A25 25 0 0 1 -12 23 L-6 15 A16 16 0 0 0 14 4 Z"/><path d="M-20 10 Q-4 -8 20 -6 L16 2 Q0 0 -12 14 Z"/></g><text x="863" y="582" transform="rotate(-14 863 582)" font-family="Liberation Sans" font-weight="bold" font-size="66" fill="#ebebeb">WikiFX</text><g transform="translate(1412 560) rotate(-10)" fill="#dcdcdc"><path d="M-24 -4 A25 25 0 0 1 14 -22 L8 -14 A16 16 0 0 0 -14 -2 Z"/><path d="M24 6 A25 25 0 0 1 -12 23 L-6 15 A16 16 0 0 0 14 4 Z"/><path d="M-20 10 Q-4 -8 20 -6 L16 2 Q0 0 -12 14 Z"/></g><text x="1472" y="582" transform="rotate(-14 1472 582)" font-family="Liberation Sans" font-weight="bold" font-size="66" fill="#ebebeb">WikiFX</text><g transform="translate(194 912) rotate(-10)" fill="#dcdcdc"><path d="M-24 -4 A25 25 0 0 1 14 -22 L8 -14 A16 16 0 0 0 -14 -2 Z"/><path d="M24 6 A25 25 0 0 1 -12 23 L-6 15 A16 16 0 0 0 14 4 Z"/><path d="M-20 10 Q-4 -8 20 -6 L16 2 Q0 0 -12 14 Z"/></g><text x="254" y="934" transform="rotate(-14 254 934)" font-family="Liberation Sans" font-weight="bold" font-size="66" fill="#ebebeb">WikiFX</text><g transform="translate(803 912) rotate(-10)" fill="#dcdcdc"><path d="M-24 -4 A25 25 0 0 1 14 -22 L8 -14 A16 16 0 0 0 -14 -2 Z"/><path d="M24 6 A25 25 0 0 1 -12 23 L-6 15 A16 16 0 0 0 14 4 Z"/><path d="M-20 10 Q-4 -8 20 -6 L16 2 Q0 0 -12 14 Z"/></g><text x="863" y="934" transform="rotate(-14 863 934)" font-family="Liberation Sans" font-weight="bold" font-size="66" fill="#ebebeb">WikiFX</text><g transform="translate(1412 912) rotate(-10)" fill="#dcdcdc"><path d="M-24 -4 A25 25 0 0 1 14 -22 L8 -14 A16 16 0 0 0 -14 -2 Z"/><path d="M24 6 A25 25 0 0 1 -12 23 L-6 15 A16 16 0 0 0 14 4 Z"/><path d="M-20 10 Q-4 -8 20 -6 L16 2 Q0 0 -12 14 Z"/></g><text x="1472" y="934" transform="rotate(-14 1472 934)" font-family="Liberation Sans" font-weight="bold" font-size="66" fill="#ebebeb">WikiFX</text></svg>
</body></html>
